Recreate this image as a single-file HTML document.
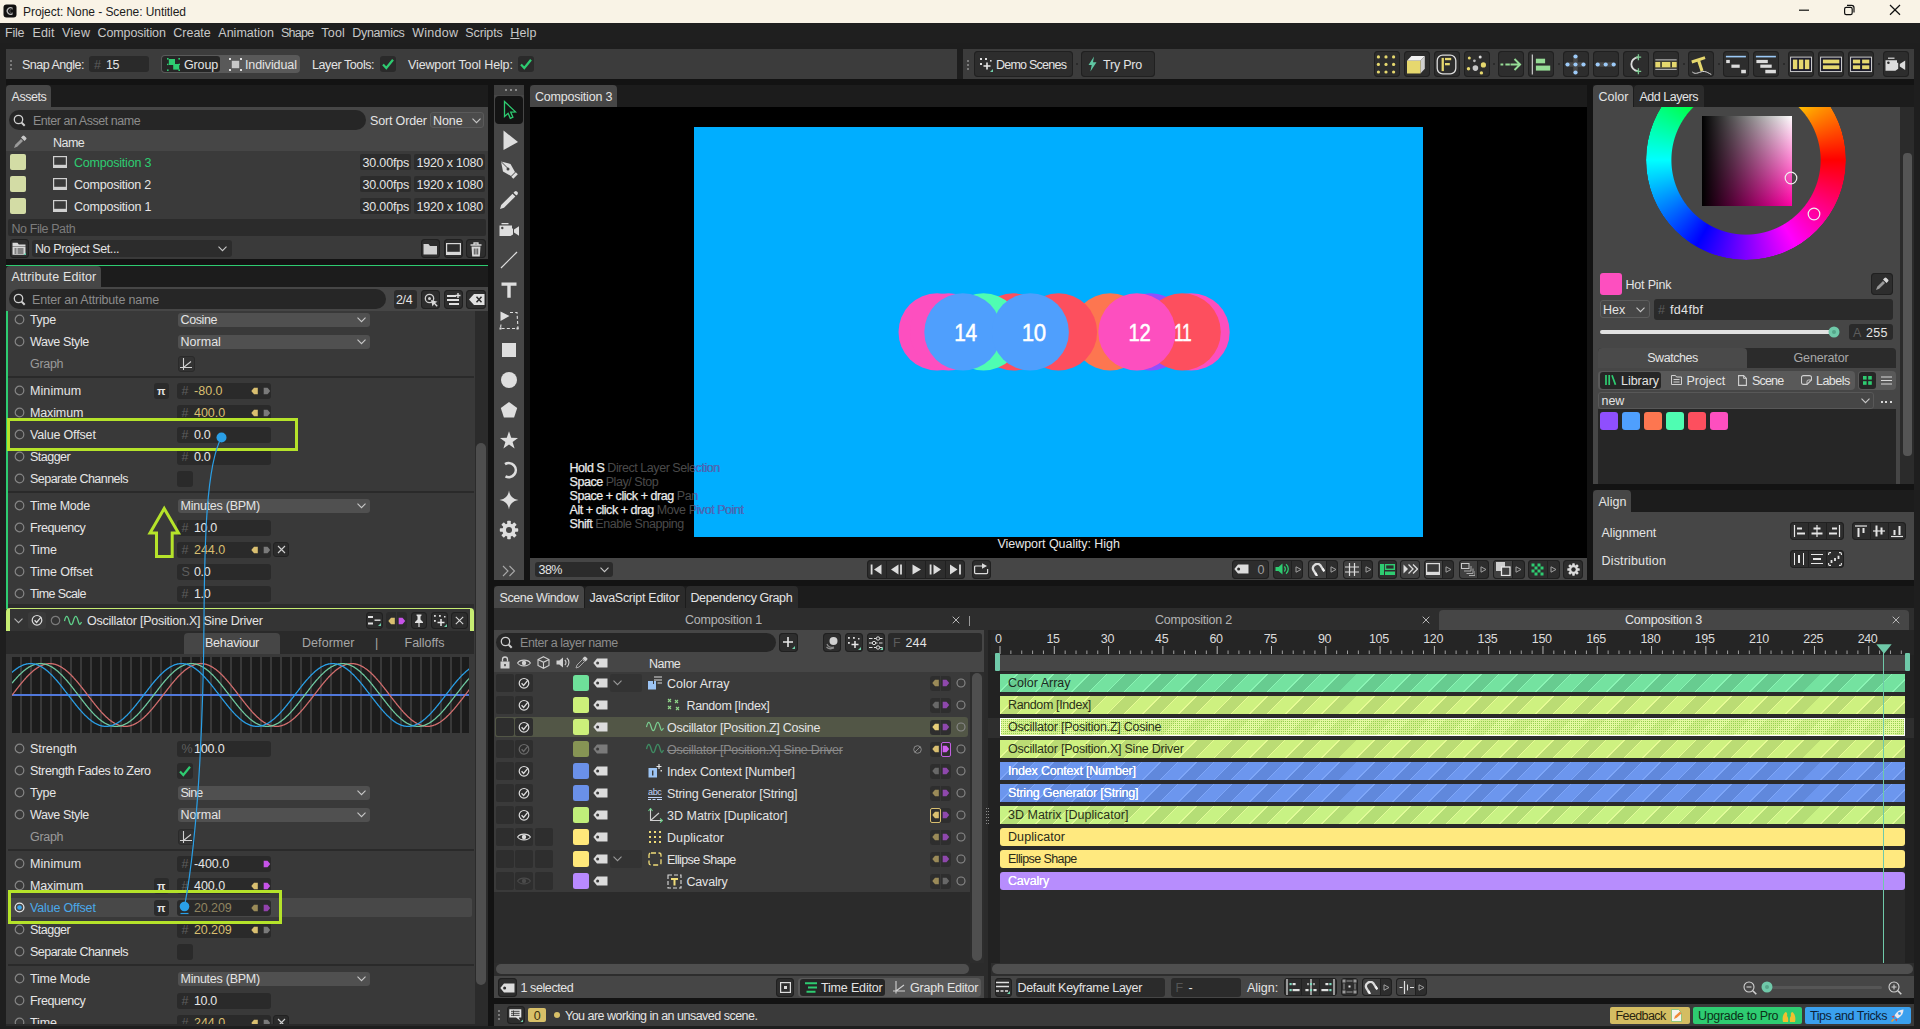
<!DOCTYPE html>
<html><head><meta charset="utf-8"><title>Cavalry</title><style>
*{box-sizing:border-box;margin:0;padding:0}
html,body{width:1920px;height:1029px;overflow:hidden}
body{background:#1e1e1e;position:relative;font-family:"Liberation Sans",sans-serif;font-size:12.5px;letter-spacing:-0.35px;color:#e4e4e4}
div,svg{position:absolute}
.t{white-space:nowrap;line-height:16px;height:16px}
.btn{background:#2d2d2d;border-radius:4px;box-shadow:inset 0 0 0 1px #202020}
</style></head><body>
<div style="left:6px;top:79px;width:1908px;height:947px;background:#131313;"></div>
<div style="left:6px;top:85px;width:482px;height:22px;background:#1c1c1c;"></div>
<div style="left:6px;top:266px;width:482px;height:21px;background:#1c1c1c;"></div>
<div style="left:530px;top:85px;width:1057px;height:22px;background:#1c1c1c;"></div>
<div style="left:1593px;top:85px;width:321px;height:22px;background:#1c1c1c;"></div>
<div style="left:1593px;top:490px;width:321px;height:22px;background:#1c1c1c;"></div>
<div style="left:494px;top:586px;width:1420px;height:22px;background:#1c1c1c;"></div>
<div style="left:0px;top:0px;width:1920px;height:23px;background:#f9f3e6;"></div>
<svg style="left:3px;top:4px;" width="14" height="14" viewBox="0 0 14 14"><rect x="0.5" y="0.5" width="13" height="13" rx="3" fill="#111"/><path d="M9.6 4.6 A3.2 3.2 0 1 0 9.6 9.4" fill="none" stroke="#bbb" stroke-width="1.3"/><path d="M10 5.4 A2 2 0 1 0 10 8.6" fill="none" stroke="#666" stroke-width="0.8"/></svg>
<div class="t" style="left:23px;top:4px;color:#1b1b1b;font-size:12px;letter-spacing:-0.06px;">Project: None - Scene: Untitled</div>
<svg style="left:1795px;top:0px;" width="110" height="23" viewBox="0 0 110 23"><path d="M4 10.2h10" stroke="#111" stroke-width="1.2"/><rect x="49.6" y="7.4" width="7.6" height="7.2" rx="1.6" fill="none" stroke="#111" stroke-width="1.2"/><path d="M52 5.4h4.6a2.4 2.4 0 0 1 2.4 2.4v4.6" fill="none" stroke="#111" stroke-width="1.2"/><path d="M95 5l10 9.8M105 5l-10 9.8" stroke="#111" stroke-width="1.2"/></svg>
<div style="left:0px;top:23px;width:1920px;height:20px;background:#1f1f1f;"></div>
<div class="t" style="left:5px;top:25px;color:#c8c8c8;font-size:12.5px;letter-spacing:-0.22px;">File</div>
<div class="t" style="left:32.5px;top:25px;color:#c8c8c8;font-size:12.5px;letter-spacing:0.15px;">Edit</div>
<div class="t" style="left:62px;top:25px;color:#c8c8c8;font-size:12.5px;letter-spacing:0.35px;">View</div>
<div class="t" style="left:97.5px;top:25px;color:#c8c8c8;font-size:12.5px;letter-spacing:-0.11px;">Composition</div>
<div class="t" style="left:173.3px;top:25px;color:#c8c8c8;font-size:12.5px;letter-spacing:-0.01px;">Create</div>
<div class="t" style="left:218.3px;top:25px;color:#c8c8c8;font-size:12.5px;letter-spacing:0.01px;">Animation</div>
<div class="t" style="left:281px;top:25px;color:#c8c8c8;font-size:12.5px;letter-spacing:-0.74px;">Shape</div>
<div class="t" style="left:321.3px;top:25px;color:#c8c8c8;font-size:12.5px;letter-spacing:0.22px;">Tool</div>
<div class="t" style="left:352.3px;top:25px;color:#c8c8c8;font-size:12.5px;letter-spacing:-0.34px;">Dynamics</div>
<div class="t" style="left:412.3px;top:25px;color:#c8c8c8;font-size:12.5px;letter-spacing:0.23px;">Window</div>
<div class="t" style="left:465.3px;top:25px;color:#c8c8c8;font-size:12.5px;letter-spacing:-0.12px;">Scripts</div>
<div class="t" style="left:510.3px;top:25px;color:#c8c8c8;font-size:12.5px;letter-spacing:0.16px;"><u>H</u>elp</div>
<div style="left:6px;top:49px;width:951px;height:30px;background:#3c3c3c;"></div>
<div style="left:963px;top:49px;width:951px;height:30px;background:#3c3c3c;"></div>
<div style="left:10px;top:59.5px;width:2px;height:2px;background:#7a7a7a;"></div>
<div style="left:10px;top:63.5px;width:2px;height:2px;background:#7a7a7a;"></div>
<div style="left:10px;top:67.5px;width:2px;height:2px;background:#7a7a7a;"></div>
<div style="left:967px;top:59.5px;width:2px;height:2px;background:#7a7a7a;"></div>
<div style="left:967px;top:63.5px;width:2px;height:2px;background:#7a7a7a;"></div>
<div style="left:967px;top:67.5px;width:2px;height:2px;background:#7a7a7a;"></div>
<div class="t" style="left:22px;top:57px;letter-spacing:-0.49px;">Snap Angle:</div>
<div style="left:89px;top:56px;width:60px;height:16px;background:#2a2a2a;border-radius:3px;"></div>
<div class="t" style="left:94px;top:57px;color:#5c5c5c;">#</div>
<div class="t" style="left:106px;top:57px;">15</div>
<div style="left:161px;top:55px;width:139px;height:18px;background:#595959;border-radius:4px;"></div>
<div style="left:162px;top:56px;width:58px;height:16px;background:#262626;border-radius:3px;"></div>
<svg style="left:167px;top:57.5px;" width="13" height="13" viewBox="0 0 13 13"><rect x="1.8" y="1" width="6.2" height="6" fill="#2ecc71"/><rect x="6.2" y="6" width="6" height="5.6" fill="#2ecc71"/><g fill="#2ecc71"><rect x="0" y="0" width="1.6" height="1.6"/><rect x="11.4" y="0" width="1.6" height="1.6"/><rect x="0" y="11.4" width="1.6" height="1.6"/><rect x="11.4" y="11.4" width="1.6" height="1.6"/><rect x="0" y="5.7" width="1.4" height="1.4"/><rect x="11.6" y="5.7" width="1.4" height="1.4"/></g></svg>
<div class="t" style="left:184px;top:57px;letter-spacing:-0.14px;">Group</div>
<svg style="left:228.5px;top:57.5px;" width="13" height="13" viewBox="0 0 13 13"><rect x="2.8" y="2.8" width="7.4" height="7.4" fill="#c8c8c8"/><g fill="#e0e0e0"><rect x="0" y="0" width="2" height="2"/><rect x="11" y="0" width="2" height="2"/><rect x="0" y="11" width="2" height="2"/><rect x="11" y="11" width="2" height="2"/></g></svg>
<div class="t" style="left:245px;top:57px;letter-spacing:-0.10px;">Individual</div>
<div class="t" style="left:312px;top:57px;letter-spacing:-0.42px;">Layer Tools:</div>
<div style="left:380px;top:56px;width:16px;height:16px;background:#2a2a2a;border-radius:3px;"></div>
<svg style="left:380px;top:56px;" width="16" height="16" viewBox="0 0 16 16"><path d="M3 8.5l3.3 3.5L13 3.8" fill="none" stroke="#2ecc71" stroke-width="2.2"/></svg>
<div class="t" style="left:408px;top:57px;letter-spacing:-0.13px;">Viewport Tool Help:</div>
<div style="left:518px;top:56px;width:16px;height:16px;background:#2a2a2a;border-radius:3px;"></div>
<svg style="left:518px;top:56px;" width="16" height="16" viewBox="0 0 16 16"><path d="M3 8.5l3.3 3.5L13 3.8" fill="none" stroke="#2ecc71" stroke-width="2.2"/></svg>
<div class="btn" style="left:974px;top:51px;width:99px;height:26px;"></div>
<svg style="left:979px;top:57px;" width="15" height="15" viewBox="0 0 15 15"><g fill="#dcdcdc"><rect x="1" y="1" width="2" height="2"/><rect x="6" y="1" width="2" height="2"/><rect x="1" y="6" width="2" height="2"/><rect x="11" y="3" width="1.6" height="1.6"/></g><path d="M8 5.5v7M4.5 9h7" stroke="#e8e8e8" stroke-width="1.6"/><path d="M14 12v3h-3z" fill="#6fd0aa"/></svg>
<div class="t" style="left:996px;top:57px;letter-spacing:-0.76px;">Demo Scenes</div>
<div style="left:1076px;top:63px;width:2px;height:2px;background:#2a2a2a;"></div>
<div class="btn" style="left:1081px;top:51px;width:74px;height:26px;"></div>
<svg style="left:1087px;top:56px;" width="11" height="16" viewBox="0 0 11 16"><path d="M7 0.5L1.5 9h3.2L3.4 15.5L9.5 6.2H6z" fill="#5fc7a3"/></svg>
<div class="t" style="left:1103px;top:57px;letter-spacing:-0.22px;">Try Pro</div>
<div class="btn" style="left:1373.5px;top:51px;width:26px;height:26px;"></div>
<div class="btn" style="left:1403.5px;top:51px;width:26px;height:26px;"></div>
<div class="btn" style="left:1433.5px;top:51px;width:26px;height:26px;"></div>
<div class="btn" style="left:1463.5px;top:51px;width:26px;height:26px;"></div>
<div class="btn" style="left:1497.5px;top:51px;width:26px;height:26px;"></div>
<div class="btn" style="left:1527.5px;top:51px;width:26px;height:26px;"></div>
<div class="btn" style="left:1562.5px;top:51px;width:26px;height:26px;"></div>
<div class="btn" style="left:1592.5px;top:51px;width:26px;height:26px;"></div>
<div class="btn" style="left:1622.5px;top:51px;width:26px;height:26px;"></div>
<div class="btn" style="left:1652.5px;top:51px;width:26px;height:26px;"></div>
<div class="btn" style="left:1687.5px;top:51px;width:26px;height:26px;"></div>
<div class="btn" style="left:1722.5px;top:51px;width:26px;height:26px;"></div>
<div class="btn" style="left:1752.5px;top:51px;width:26px;height:26px;"></div>
<div class="btn" style="left:1787.5px;top:51px;width:26px;height:26px;"></div>
<div class="btn" style="left:1817.5px;top:51px;width:26px;height:26px;"></div>
<div class="btn" style="left:1847.5px;top:51px;width:26px;height:26px;"></div>
<div class="btn" style="left:1882.5px;top:51px;width:26px;height:26px;"></div>
<div style="left:1492.5px;top:63px;width:2px;height:2px;background:#2a2a2a;"></div>
<div style="left:1557.5px;top:63px;width:2px;height:2px;background:#2a2a2a;"></div>
<div style="left:1682.5px;top:63px;width:2px;height:2px;background:#2a2a2a;"></div>
<div style="left:1717.5px;top:63px;width:2px;height:2px;background:#2a2a2a;"></div>
<div style="left:1782.5px;top:63px;width:2px;height:2px;background:#2a2a2a;"></div>
<div style="left:1877.5px;top:63px;width:2px;height:2px;background:#2a2a2a;"></div>
<svg style="left:1373px;top:50.5px;" width="27" height="27" viewBox="0 0 27 27"><circle cx="5.4" cy="5.9" r="1.6" fill="#e6d86e"/><circle cx="5.4" cy="13.4" r="1.6" fill="#e6d86e"/><circle cx="5.4" cy="21.0" r="1.6" fill="#e6d86e"/><circle cx="13.0" cy="5.9" r="1.6" fill="#e6d86e"/><circle cx="13.0" cy="13.4" r="1.6" fill="#e6d86e"/><circle cx="13.0" cy="21.0" r="1.6" fill="#e6d86e"/><circle cx="20.6" cy="5.9" r="1.6" fill="#e6d86e"/><circle cx="20.6" cy="13.4" r="1.6" fill="#e6d86e"/><circle cx="20.6" cy="21.0" r="1.6" fill="#e6d86e"/></svg>
<svg style="left:1403px;top:50.5px;" width="27" height="27" viewBox="0 0 27 27"><path d="M4 9.8L8.4 5h13.4L17.4 9.8z" fill="#f2f2f2"/><path d="M17.4 9.8L21.8 5v12.7l-4.4 4.8z" fill="#cfcfcf"/><rect x="4" y="9.8" width="13.4" height="12.7" fill="#e6d86e"/></svg>
<svg style="left:1433px;top:50.5px;" width="27" height="27" viewBox="0 0 27 27"><rect x="4.2" y="4.2" width="18.6" height="18.6" rx="5.5" fill="none" stroke="#dcdcdc" stroke-width="1.3"/><rect x="8.6" y="6.9" width="2.3" height="13.2" fill="#e6d86e"/><rect x="12" y="6.9" width="6.2" height="2.3" fill="#e6d86e"/><rect x="12" y="12" width="4.8" height="2.3" fill="#e6d86e"/></svg>
<svg style="left:1463px;top:50.5px;" width="27" height="27" viewBox="0 0 27 27"><circle cx="6.3" cy="6.9" r="1.5" fill="#e6d86e"/><circle cx="17.2" cy="5.9" r="1.5" fill="#dcdcdc"/><circle cx="11.4" cy="9.8" r="1.4" fill="#b8b8b8"/><circle cx="20.4" cy="13.9" r="2.6" fill="#e6d86e"/><circle cx="12.4" cy="17.1" r="2.8" fill="#c8c8c8"/><circle cx="5.5" cy="17.8" r="1.7" fill="#e6d86e"/><circle cx="18.4" cy="21.9" r="1.7" fill="#e6d86e"/></svg>
<svg style="left:1497px;top:50.5px;" width="27" height="27" viewBox="0 0 27 27"><path d="M3.5 13.5h2.8M8.4 13.5h4.4" stroke="#96dc96" stroke-width="1.9"/><path d="M13.5 13.5h9M17.5 8l5.6 5.5-5.6 5.5" fill="none" stroke="#96dc96" stroke-width="1.9"/></svg>
<svg style="left:1527px;top:50.5px;" width="27" height="27" viewBox="0 0 27 27"><path d="M5.3 3.5v20" stroke="#dcdcdc" stroke-width="1.1"/><rect x="8.9" y="7.7" width="9.2" height="4.6" fill="#96dc96"/><rect x="8.9" y="14.6" width="14.3" height="5" fill="#96dc96"/></svg>
<svg style="left:1562px;top:50.5px;" width="27" height="27" viewBox="0 0 27 27"><rect x="3.7" y="11.3" width="19.7" height="4.4" rx="2.2" fill="#4a4a4a"/><rect x="11.3" y="3.5" width="4.4" height="20" rx="2.2" fill="#4a4a4a"/><circle cx="13.5" cy="5.5" r="2.1" fill="#9ccaf8"/><circle cx="5.5" cy="13.5" r="2.1" fill="#9ccaf8"/><circle cx="13.5" cy="13.5" r="2.1" fill="#9ccaf8"/><circle cx="21.5" cy="13.5" r="2.1" fill="#9ccaf8"/><circle cx="13.5" cy="21.5" r="2.1" fill="#9ccaf8"/></svg>
<svg style="left:1592px;top:50.5px;" width="27" height="27" viewBox="0 0 27 27"><rect x="3.5" y="11.3" width="20" height="4.4" rx="2.2" fill="#4a4a4a"/><circle cx="5.7" cy="13.5" r="2.1" fill="#9ccaf8"/><circle cx="13.7" cy="13.5" r="2.1" fill="#9ccaf8"/><circle cx="21.7" cy="13.5" r="2.1" fill="#9ccaf8"/></svg>
<svg style="left:1622px;top:50.5px;" width="27" height="27" viewBox="0 0 27 27"><path d="M16.4 6.2C7 8 7 18.5 16.4 20.3" fill="none" stroke="#dcdcdc" stroke-width="1.8"/><path d="M16.4 3.2v6M13.8 6.2h5.4M16.4 17.3v6M13.8 20.3h5.4" stroke="#7cc890" stroke-width="1.3"/></svg>
<svg style="left:1652px;top:50.5px;" width="27" height="27" viewBox="0 0 27 27"><path d="M3.3 8.9h21.4M3.3 18.3h21.4" stroke="#dcdcdc" stroke-width="0.9"/><rect x="3.3" y="10.9" width="21.4" height="5.5" fill="#e6d86e"/><rect x="8.3" y="10.9" width="1.5" height="5.5" fill="#2b2b2b"/><rect x="18.4" y="10.9" width="1.5" height="5.5" fill="#2b2b2b"/></svg>
<svg style="left:1687px;top:50.5px;" width="27" height="27" viewBox="0 0 27 27"><path d="M4.3 9.6L17.6 5.2l.9 2.9-5.2 1.7 3.2 9.6-2.9 1-3.2-9.6-5.2 1.7z" fill="#e6d86e"/><path d="M5.3 21c4 3.5 7.5-1 12-.5 3 .4 4 1.5 7 3" fill="none" stroke="#dcdcdc" stroke-width="1"/></svg>
<svg style="left:1722px;top:50.5px;" width="27" height="27" viewBox="0 0 27 27"><path d="M3.9 5.6h20" stroke="#9ccaf8" stroke-width="1.6"/><rect x="4.2" y="8.9" width="3.6" height="3.2" fill="#dcdcdc"/><rect x="9.4" y="13.6" width="8.3" height="3.2" fill="#dcdcdc"/><rect x="19.2" y="18.8" width="4.7" height="3.5" fill="#dcdcdc"/></svg>
<svg style="left:1752px;top:50.5px;" width="27" height="27" viewBox="0 0 27 27"><path d="M3.9 5.6h20" stroke="#9ccaf8" stroke-width="1.6"/><rect x="4.4" y="8.9" width="11.4" height="3.2" fill="#dcdcdc"/><rect x="8.3" y="13.6" width="11.4" height="3.2" fill="#dcdcdc"/><rect x="13.3" y="18.8" width="10.6" height="3.5" fill="#dcdcdc"/></svg>
<svg style="left:1787px;top:50.5px;" width="27" height="27" viewBox="0 0 27 27"><rect x="3.6" y="6.1" width="20.9" height="14.5" fill="#1c1c2c" stroke="#dcdcdc" stroke-width="0.9"/><rect x="5.9" y="8.6" width="4.4" height="9.5" fill="#e6d86e"/><rect x="11.9" y="8.6" width="4.4" height="9.5" fill="#e6d86e"/><rect x="17.9" y="8.6" width="4.4" height="9.5" fill="#e6d86e"/></svg>
<svg style="left:1817px;top:50.5px;" width="27" height="27" viewBox="0 0 27 27"><rect x="3.6" y="6.1" width="20.9" height="14.5" fill="#1c1c2c" stroke="#dcdcdc" stroke-width="0.9"/><rect x="5.9" y="8.6" width="16.4" height="3.8" fill="#e6d86e"/><rect x="5.9" y="14.3" width="16.4" height="3.8" fill="#e6d86e"/></svg>
<svg style="left:1847px;top:50.5px;" width="27" height="27" viewBox="0 0 27 27"><rect x="3.6" y="6.1" width="20.9" height="14.5" fill="#1c1c2c" stroke="#dcdcdc" stroke-width="0.9"/><rect x="5.9" y="8.6" width="7.2" height="3.8" fill="#e6d86e"/><rect x="15.1" y="8.6" width="7.2" height="3.8" fill="#e6d86e"/><rect x="5.9" y="14.3" width="7.2" height="3.8" fill="#e6d86e"/><rect x="15.1" y="14.3" width="7.2" height="3.8" fill="#e6d86e"/></svg>
<svg style="left:1882px;top:50.5px;" width="27" height="27" viewBox="0 0 27 27"><path d="M3.5 9.2h11.5v2.6h1.2v6l-2.8 2H3.5z" fill="#dcdcdc"/><rect x="6" y="6.6" width="6.5" height="1.2" fill="#dcdcdc"/><path d="M17.8 13l5.4-3.4v9.4l-5.4-3.4z" fill="#dcdcdc"/><circle cx="6.4" cy="11.8" r="1.3" fill="#2b2b2b"/></svg>
<div style="left:6px;top:85px;width:45px;height:22px;background:#464646;border-radius:4px 4px 0 0;"></div>
<div class="t" style="left:11.5px;top:89px;letter-spacing:-0.44px;">Assets</div>
<div style="left:6px;top:107px;width:482px;height:44px;background:#464646;"></div>
<div style="left:9px;top:110px;width:357px;height:20px;background:#262626;border-radius:10px;"></div>
<svg style="left:13px;top:114px;" width="13" height="13" viewBox="0 0 13 13"><circle cx="5.5" cy="5.5" r="4.2" fill="none" stroke="#d0d0d0" stroke-width="1.3"/><path d="M8.7 8.7l3 3" stroke="#d0d0d0" stroke-width="2"/></svg>
<div class="t" style="left:33px;top:113px;color:#8c8c8c;letter-spacing:-0.47px;">Enter an Asset name</div>
<div class="t" style="left:370px;top:113px;letter-spacing:-0.16px;">Sort Order</div>
<div style="left:430px;top:112px;width:54px;height:16px;background:#4b4b4b;border-radius:3px;border:1px solid #5a5a5a;"></div>
<div class="t" style="left:433px;top:113px;letter-spacing:-0.06px;">None</div>
<svg style="left:471.5px;top:117.5px;" width="9" height="6" viewBox="0 0 9 6"><path d="M0.5 0.7l4 4 4-4" fill="none" stroke="#c8c8c8" stroke-width="1.1"/></svg>
<svg style="left:13px;top:135px;" width="14" height="14" viewBox="0 0 14 14"><path d="M1 13l1.2-3.2 5.8-5.8 2 2-5.8 5.8z" fill="#9a9a9a"/><path d="M8 2.5l1.5-1.5a1.4 1.4 0 0 1 2 0l1.5 1.5a1.4 1.4 0 0 1 0 2L11.5 6z" fill="#c8c8c8"/></svg>
<div class="t" style="left:53px;top:135px;letter-spacing:-0.55px;">Name</div>
<div style="left:6px;top:151px;width:482px;height:66px;background:#3a3a3a;"></div>
<div style="left:10px;top:154px;width:16px;height:16px;background:#d3dca5;border-radius:2px;"></div>
<svg style="left:53px;top:156px;" width="14" height="12" viewBox="0 0 14 12"><rect x="0.6" y="0.6" width="12.8" height="8.8" fill="none" stroke="#d0d0d0" stroke-width="1.2"/><rect x="0" y="10" width="14" height="2" fill="#d0d0d0"/></svg>
<div class="t" style="left:74px;top:155px;color:#2ecc71;letter-spacing:-0.21px;">Composition 3</div>
<div style="left:360px;top:154px;width:51px;height:16px;background:#2c2c2c;border-radius:2px;"></div>
<div class="t" style="left:362.5px;top:155px;letter-spacing:-0.17px;">30.00fps</div>
<div style="left:414px;top:154px;width:71px;height:16px;background:#2c2c2c;border-radius:2px;"></div>
<div class="t" style="left:416.5px;top:155px;letter-spacing:-0.22px;">1920 x 1080</div>
<div style="left:10px;top:176px;width:16px;height:16px;background:#d3dca5;border-radius:2px;"></div>
<svg style="left:53px;top:178px;" width="14" height="12" viewBox="0 0 14 12"><rect x="0.6" y="0.6" width="12.8" height="8.8" fill="none" stroke="#d0d0d0" stroke-width="1.2"/><rect x="0" y="10" width="14" height="2" fill="#d0d0d0"/></svg>
<div class="t" style="left:74px;top:177px;color:#e6e6e6;letter-spacing:-0.23px;">Composition 2</div>
<div style="left:360px;top:176px;width:51px;height:16px;background:#2c2c2c;border-radius:2px;"></div>
<div class="t" style="left:362.5px;top:177px;letter-spacing:-0.17px;">30.00fps</div>
<div style="left:414px;top:176px;width:71px;height:16px;background:#2c2c2c;border-radius:2px;"></div>
<div class="t" style="left:416.5px;top:177px;letter-spacing:-0.22px;">1920 x 1080</div>
<div style="left:10px;top:198px;width:16px;height:16px;background:#d3dca5;border-radius:2px;"></div>
<svg style="left:53px;top:200px;" width="14" height="12" viewBox="0 0 14 12"><rect x="0.6" y="0.6" width="12.8" height="8.8" fill="none" stroke="#d0d0d0" stroke-width="1.2"/><rect x="0" y="10" width="14" height="2" fill="#d0d0d0"/></svg>
<div class="t" style="left:74px;top:199px;color:#e6e6e6;letter-spacing:-0.21px;">Composition 1</div>
<div style="left:360px;top:198px;width:51px;height:16px;background:#2c2c2c;border-radius:2px;"></div>
<div class="t" style="left:362.5px;top:199px;letter-spacing:-0.17px;">30.00fps</div>
<div style="left:414px;top:198px;width:71px;height:16px;background:#2c2c2c;border-radius:2px;"></div>
<div class="t" style="left:416.5px;top:199px;letter-spacing:-0.22px;">1920 x 1080</div>
<div style="left:6px;top:217px;width:482px;height:42px;background:#3a3a3a;"></div>
<div style="left:8px;top:219px;width:478px;height:17px;background:#2b2b2b;border-radius:2px;"></div>
<div class="t" style="left:11.5px;top:221px;color:#7c7c7c;letter-spacing:-0.42px;">No File Path</div>
<div class="btn" style="left:9.5px;top:239px;width:19px;height:19px;"></div>
<svg style="left:12px;top:242px;" width="14" height="13" viewBox="0 0 14 13"><path d="M0.5 0.8h5l1.3 1.6h6.7v2H0.5z" fill="#d8d8d8"/><rect x="0.5" y="4.8" width="13" height="8" fill="#d8d8d8"/><path d="M2.5 7h2M5.5 7h6M2.5 9h2M5.5 9h6M2.5 11h2M5.5 11h6" stroke="#2d2d2d" stroke-width="1"/><path d="M14 10.5v2.5h-2.5z" fill="#5fc7a3"/></svg>
<div style="left:32px;top:239.5px;width:200px;height:17px;background:#2c2c2c;border-radius:3px;"></div>
<div class="t" style="left:35px;top:241px;letter-spacing:-0.41px;">No Project Set...</div>
<svg style="left:218.0px;top:245.5px;" width="9" height="6" viewBox="0 0 9 6"><path d="M0.5 0.7l4 4 4-4" fill="none" stroke="#c8c8c8" stroke-width="1.1"/></svg>
<div class="btn" style="left:420.5px;top:239px;width:19.5px;height:19px;"></div>
<div class="btn" style="left:443.5px;top:239px;width:19.5px;height:19px;"></div>
<div class="btn" style="left:466px;top:239px;width:19.5px;height:19px;"></div>
<svg style="left:423px;top:242px;" width="15" height="13" viewBox="0 0 15 13"><path d="M0.5 2h5l1.5 2h7v8.5h-13.5z" fill="#d0d0d0"/></svg>
<svg style="left:446px;top:243px;" width="15" height="12" viewBox="0 0 15 12"><rect x="0.6" y="0.6" width="13.8" height="8.8" fill="none" stroke="#d8d8d8" stroke-width="1.2"/><rect x="0" y="10" width="15" height="2" fill="#d8d8d8"/></svg>
<svg style="left:470px;top:241.5px;" width="12" height="15" viewBox="0 0 12 15"><path d="M0.5 3h11M4 3V1h4v2" fill="none" stroke="#d8d8d8" stroke-width="1.3"/><path d="M1.5 4.5h9l-.7 10h-7.6z" fill="#d8d8d8"/><path d="M4.3 6.5v6M6 6.5v6M7.7 6.5v6" stroke="#2b2b2b" stroke-width="0.8"/></svg>
<div style="left:6px;top:265px;width:482px;height:1px;background:#2ecc71;"></div>
<div style="left:6px;top:266px;width:95px;height:21px;background:#464646;border-radius:4px 4px 0 0;"></div>
<div class="t" style="left:11.5px;top:269px;letter-spacing:0.14px;">Attribute Editor</div>
<div style="left:6px;top:287px;width:482px;height:24px;background:#464646;"></div>
<div style="left:9px;top:289px;width:376.5px;height:20px;background:#262626;border-radius:10px;"></div>
<svg style="left:12.5px;top:293px;" width="13" height="13" viewBox="0 0 13 13"><circle cx="5.5" cy="5.5" r="4.2" fill="none" stroke="#d0d0d0" stroke-width="1.3"/><path d="M8.7 8.7l3 3" stroke="#d0d0d0" stroke-width="2"/></svg>
<div class="t" style="left:32px;top:292px;color:#8c8c8c;letter-spacing:-0.19px;">Enter an Attribute name</div>
<div style="left:394px;top:290px;width:23px;height:18.5px;background:#2c2c2c;border-radius:3px;"></div>
<div class="t" style="left:396px;top:292px;">2/4</div>
<div class="btn" style="left:420.5px;top:290px;width:19.5px;height:18.5px;"></div>
<div class="btn" style="left:443.5px;top:290px;width:19.5px;height:18.5px;"></div>
<div class="btn" style="left:466px;top:290px;width:19.5px;height:18.5px;"></div>
<svg style="left:423.5px;top:292.5px;" width="14" height="14" viewBox="0 0 14 14"><circle cx="5.5" cy="5.5" r="4.2" fill="none" stroke="#d0d0d0" stroke-width="1.3"/><circle cx="5.5" cy="5.5" r="1.5" fill="#d0d0d0"/><path d="M7 7l1.5 6.5 1.6-2.4 2.6 2.6 1-1-2.6-2.6 2.4-1.4z" fill="#d8d8d8"/></svg>
<svg style="left:446.5px;top:293px;" width="14" height="13" viewBox="0 0 14 13"><path d="M0 3h9M0 7h12M2 11h10" stroke="#e0e0e0" stroke-width="1.8"/><path d="M11 0v5M8.5 2.5h5" stroke="#e0e0e0" stroke-width="1.4"/></svg>
<svg style="left:468.5px;top:294px;" width="16" height="11" viewBox="0 0 16 11"><path d="M5 0h10.5v11H5L0 5.5z" fill="#e0e0e0"/><path d="M7.5 2.8l5 5.4M12.5 2.8l-5 5.4" stroke="#2b2b2b" stroke-width="1.5"/></svg>
<div style="left:6px;top:311px;width:469px;height:713px;background:#393939;"></div>
<div style="left:475px;top:311px;width:13px;height:713px;background:#2b2b2b;"></div>
<div style="left:476px;top:443px;width:10px;height:542px;background:#4e4e4e;border-radius:5px;"></div>
<div style="left:6px;top:311px;width:1.5px;height:298px;background:#2ecc71;"></div>
<svg style="left:13.5px;top:314.0px;" width="11" height="11" viewBox="0 0 11 11"><circle cx="5.5" cy="5.5" r="4.3" fill="none" stroke="#858585" stroke-width="1.2"/></svg>
<div class="t" style="left:30px;top:312px;color:#e6e6e6;letter-spacing:-0.34px;">Type</div>
<div style="left:178px;top:312.5px;width:192px;height:14px;background:#505050;border-radius:3px;"></div>
<div class="t" style="left:180.5px;top:312px;letter-spacing:-0.38px;">Cosine</div>
<svg style="left:357.0px;top:316.5px;" width="9" height="6" viewBox="0 0 9 6"><path d="M0.5 0.7l4 4 4-4" fill="none" stroke="#c8c8c8" stroke-width="1.1"/></svg>
<svg style="left:13.5px;top:336.0px;" width="11" height="11" viewBox="0 0 11 11"><circle cx="5.5" cy="5.5" r="4.3" fill="none" stroke="#858585" stroke-width="1.2"/></svg>
<div class="t" style="left:30px;top:334px;color:#e6e6e6;letter-spacing:-0.39px;">Wave Style</div>
<div style="left:178px;top:334.5px;width:192px;height:14px;background:#505050;border-radius:3px;"></div>
<div class="t" style="left:180.5px;top:334px;letter-spacing:0.02px;">Normal</div>
<svg style="left:357.0px;top:338.5px;" width="9" height="6" viewBox="0 0 9 6"><path d="M0.5 0.7l4 4 4-4" fill="none" stroke="#c8c8c8" stroke-width="1.1"/></svg>
<div class="t" style="left:30px;top:356px;color:#9a9a9a;letter-spacing:-0.31px;">Graph</div>
<div style="left:178px;top:355.5px;width:16.5px;height:16.5px;background:#333;border-radius:3px;border:1px solid #2a2a2a;"></div>
<svg style="left:180px;top:357.5px;" width="13" height="13" viewBox="0 0 13 13"><path d="M3.5 0v12M0 9.5h12M3.5 9.5L11 3.5" fill="none" stroke="#d0d0d0" stroke-width="1.1"/></svg>
<div style="left:8px;top:375.5px;width:466px;height:2px;background:#2a2a2a;"></div>
<svg style="left:13.5px;top:385.0px;" width="11" height="11" viewBox="0 0 11 11"><circle cx="5.5" cy="5.5" r="4.3" fill="none" stroke="#858585" stroke-width="1.2"/></svg>
<div class="t" style="left:30px;top:383px;color:#e6e6e6;letter-spacing:0.08px;">Minimum</div>
<div style="left:153.5px;top:382.5px;width:15.5px;height:16px;background:#2b2b2b;border-radius:3px;"></div>
<div class="t" style="left:157px;top:383px;color:#e6e6e6;font-size:11px;font-weight:bold;">π</div>
<div style="left:177px;top:382.5px;width:94px;height:16px;background:#2a2a2a;border-radius:3px;"></div>
<div class="t" style="left:181.5px;top:383px;color:#5e5e5e;">#</div>
<div class="t" style="left:194px;top:383px;color:#d9bf70;letter-spacing:0.02px;">-80.0</div>
<svg style="left:250.5px;top:386.5px;" width="8" height="8" viewBox="0 0 8 8"><path d="M0.3 4L3 0.8H6.8v6.4H3z" fill="#d9bf70"/></svg>
<svg style="left:262.5px;top:386.5px;" width="8" height="8" viewBox="0 0 8 8"><path d="M7.2 4L4.5 0.8H0.7v6.4H4.5z" fill="#7a7a7a"/></svg>
<svg style="left:13.5px;top:407.0px;" width="11" height="11" viewBox="0 0 11 11"><circle cx="5.5" cy="5.5" r="4.3" fill="none" stroke="#858585" stroke-width="1.2"/></svg>
<div class="t" style="left:30px;top:405px;color:#e6e6e6;letter-spacing:-0.13px;">Maximum</div>
<div style="left:177px;top:404.5px;width:94px;height:16px;background:#2a2a2a;border-radius:3px;"></div>
<div class="t" style="left:181.5px;top:405px;color:#5e5e5e;">#</div>
<div class="t" style="left:194px;top:405px;color:#d9bf70;letter-spacing:-0.05px;">400.0</div>
<svg style="left:250.5px;top:408.5px;" width="8" height="8" viewBox="0 0 8 8"><path d="M0.3 4L3 0.8H6.8v6.4H3z" fill="#d9bf70"/></svg>
<svg style="left:262.5px;top:408.5px;" width="8" height="8" viewBox="0 0 8 8"><path d="M7.2 4L4.5 0.8H0.7v6.4H4.5z" fill="#7a7a7a"/></svg>
<svg style="left:13.5px;top:429.0px;" width="11" height="11" viewBox="0 0 11 11"><circle cx="5.5" cy="5.5" r="4.3" fill="none" stroke="#858585" stroke-width="1.2"/></svg>
<div class="t" style="left:30px;top:427px;color:#e6e6e6;letter-spacing:-0.16px;">Value Offset</div>
<div style="left:177px;top:426.5px;width:94px;height:16px;background:#2a2a2a;border-radius:3px;"></div>
<div class="t" style="left:181.5px;top:427px;color:#5e5e5e;">#</div>
<div class="t" style="left:194px;top:427px;color:#e6e6e6;">0.0</div>
<svg style="left:13.5px;top:451.0px;" width="11" height="11" viewBox="0 0 11 11"><circle cx="5.5" cy="5.5" r="4.3" fill="none" stroke="#858585" stroke-width="1.2"/></svg>
<div class="t" style="left:30px;top:449px;color:#e6e6e6;letter-spacing:-0.51px;">Stagger</div>
<div style="left:177px;top:448.5px;width:94px;height:16px;background:#2a2a2a;border-radius:3px;"></div>
<div class="t" style="left:181.5px;top:449px;color:#5e5e5e;">#</div>
<div class="t" style="left:194px;top:449px;color:#e6e6e6;">0.0</div>
<svg style="left:13.5px;top:473.0px;" width="11" height="11" viewBox="0 0 11 11"><circle cx="5.5" cy="5.5" r="4.3" fill="none" stroke="#858585" stroke-width="1.2"/></svg>
<div class="t" style="left:30px;top:471px;color:#e6e6e6;letter-spacing:-0.53px;">Separate Channels</div>
<div style="left:177px;top:470.5px;width:16px;height:16px;background:#2a2a2a;border-radius:3px;"></div>
<div style="left:8px;top:490.5px;width:466px;height:2px;background:#2a2a2a;"></div>
<svg style="left:13.5px;top:500.0px;" width="11" height="11" viewBox="0 0 11 11"><circle cx="5.5" cy="5.5" r="4.3" fill="none" stroke="#858585" stroke-width="1.2"/></svg>
<div class="t" style="left:30px;top:498px;color:#e6e6e6;letter-spacing:-0.23px;">Time Mode</div>
<div style="left:178px;top:498.5px;width:192px;height:14px;background:#505050;border-radius:3px;"></div>
<div class="t" style="left:180.5px;top:498px;letter-spacing:-0.25px;">Minutes (BPM)</div>
<svg style="left:357.0px;top:502.5px;" width="9" height="6" viewBox="0 0 9 6"><path d="M0.5 0.7l4 4 4-4" fill="none" stroke="#c8c8c8" stroke-width="1.1"/></svg>
<svg style="left:13.5px;top:522.0px;" width="11" height="11" viewBox="0 0 11 11"><circle cx="5.5" cy="5.5" r="4.3" fill="none" stroke="#858585" stroke-width="1.2"/></svg>
<div class="t" style="left:30px;top:520px;color:#e6e6e6;letter-spacing:-0.40px;">Frequency</div>
<div style="left:177px;top:519.5px;width:94px;height:16px;background:#2a2a2a;border-radius:3px;"></div>
<div class="t" style="left:181.5px;top:520px;color:#5e5e5e;">#</div>
<div class="t" style="left:194px;top:520px;color:#e6e6e6;">10.0</div>
<svg style="left:13.5px;top:544.0px;" width="11" height="11" viewBox="0 0 11 11"><circle cx="5.5" cy="5.5" r="4.3" fill="none" stroke="#858585" stroke-width="1.2"/></svg>
<div class="t" style="left:30px;top:542px;color:#e6e6e6;letter-spacing:-0.11px;">Time</div>
<div style="left:177px;top:541.5px;width:94px;height:16px;background:#2a2a2a;border-radius:3px;"></div>
<div class="t" style="left:181.5px;top:542px;color:#5e5e5e;">#</div>
<div class="t" style="left:194px;top:542px;color:#d9bf70;letter-spacing:-0.05px;">244.0</div>
<svg style="left:250.5px;top:545.5px;" width="8" height="8" viewBox="0 0 8 8"><path d="M0.3 4L3 0.8H6.8v6.4H3z" fill="#d9bf70"/></svg>
<svg style="left:262.5px;top:545.5px;" width="8" height="8" viewBox="0 0 8 8"><path d="M7.2 4L4.5 0.8H0.7v6.4H4.5z" fill="#7a7a7a"/></svg>
<div style="left:273px;top:541.5px;width:15.5px;height:15.5px;background:#2b2b2b;border-radius:3px;border:1px solid #222;"></div>
<svg style="left:276.5px;top:545.0px;" width="9" height="9" viewBox="0 0 9 9"><path d="M1 1l7 7M8 1l-7 7" stroke="#d0d0d0" stroke-width="1.1"/></svg>
<svg style="left:13.5px;top:566.0px;" width="11" height="11" viewBox="0 0 11 11"><circle cx="5.5" cy="5.5" r="4.3" fill="none" stroke="#858585" stroke-width="1.2"/></svg>
<div class="t" style="left:30px;top:564px;color:#e6e6e6;letter-spacing:-0.11px;">Time Offset</div>
<div style="left:177px;top:563.5px;width:94px;height:16px;background:#2a2a2a;border-radius:3px;"></div>
<div class="t" style="left:181.5px;top:564px;color:#5e5e5e;">S</div>
<div class="t" style="left:194px;top:564px;color:#e6e6e6;">0.0</div>
<svg style="left:13.5px;top:588.0px;" width="11" height="11" viewBox="0 0 11 11"><circle cx="5.5" cy="5.5" r="4.3" fill="none" stroke="#858585" stroke-width="1.2"/></svg>
<div class="t" style="left:30px;top:586px;color:#e6e6e6;letter-spacing:-0.62px;">Time Scale</div>
<div style="left:177px;top:585.5px;width:94px;height:16px;background:#2a2a2a;border-radius:3px;"></div>
<div class="t" style="left:181.5px;top:586px;color:#5e5e5e;">#</div>
<div class="t" style="left:194px;top:586px;color:#e6e6e6;">1.0</div>
<div style="left:8px;top:604px;width:466px;height:4px;background:#2c2c2c;"></div>
<div style="left:6px;top:607.8px;width:468px;height:23.2px;background:#343434;border-left:4px solid #c6ec72;border-right:4px solid #c6ec72;border-top:1.5px solid #c6ec72;border-radius:4px 4px 0 0;"></div>
<svg style="left:14.0px;top:617.5px;" width="9" height="6" viewBox="0 0 9 6"><path d="M0.5 0.7l4 4 4-4" fill="none" stroke="#b0b0b0" stroke-width="1.1"/></svg>
<div style="left:28px;top:612px;width:17.5px;height:16.5px;background:#3a3a3a;border-radius:3px;"></div>
<svg style="left:31px;top:614px;" width="12" height="12" viewBox="0 0 12 12"><circle cx="6" cy="6.3" r="4.8" fill="none" stroke="#dcdcdc" stroke-width="1.2"/><path d="M3.6 6.2l2 2.2 4.6-5.6" fill="none" stroke="#dcdcdc" stroke-width="1.3"/></svg>
<svg style="left:49.5px;top:615px;" width="11" height="11" viewBox="0 0 11 11"><circle cx="5.5" cy="5.5" r="4.2" fill="none" stroke="#7a7a7a" stroke-width="1.2"/></svg>
<svg style="left:64px;top:615px;" width="18" height="11" viewBox="0 0 18 11"><path d="M0.5 6C2 0 3.5 0 5 5.5S8 11 9.5 5.5 12.5 0 14 5.5 16 10 17.5 7" fill="none" stroke="#5fd08a" stroke-width="1.3"/></svg>
<div class="t" style="left:87px;top:613px;letter-spacing:-0.24px;">Oscillator [Position.X] Sine Driver</div>
<div class="btn" style="left:366px;top:612px;width:16.5px;height:16.5px;"></div>
<div class="btn" style="left:410.5px;top:612px;width:16.5px;height:16.5px;"></div>
<div class="btn" style="left:431px;top:612px;width:16.5px;height:16.5px;"></div>
<div class="btn" style="left:451px;top:612px;width:16.5px;height:16.5px;"></div>
<svg style="left:368px;top:615px;" width="13" height="11" viewBox="0 0 13 11"><path d="M0 2h5M0 8.5h5" stroke="#e0e0e0" stroke-width="1.8"/><path d="M6.5 5.2h6" stroke="#e0e0e0" stroke-width="1.4"/><path d="M13 8v3h-3z" fill="#6fd0aa"/></svg>
<div style="left:386px;top:612px;width:20.5px;height:16.5px;background:#2b2b2b;border-radius:3px;"></div>
<div style="left:396px;top:612px;width:1px;height:16.5px;background:#343434;"></div>
<svg style="left:388px;top:616.5px;" width="8" height="8" viewBox="0 0 8 8"><path d="M0.3 4L3 0.8H6.8v6.4H3z" fill="#d9bf70"/></svg>
<svg style="left:398px;top:616.5px;" width="8" height="8" viewBox="0 0 8 8"><path d="M7.2 4L4.5 0.8H0.7v6.4H4.5z" fill="#c653e8"/></svg>
<svg style="left:414px;top:614px;" width="10" height="13" viewBox="0 0 10 13"><path d="M2.5 0.5h5v1l-1 1v3l2.5 2.5v1H1v-1l2.5-2.5v-3l-1-1z" fill="#e0e0e0"/><path d="M5 9v4" stroke="#e0e0e0" stroke-width="1.2"/></svg>
<svg style="left:433px;top:614px;" width="14" height="13" viewBox="0 0 14 13"><g fill="#dcdcdc"><rect x="1" y="1" width="1.8" height="1.8"/><rect x="6" y="1" width="1.8" height="1.8"/><rect x="1" y="6" width="1.8" height="1.8"/><rect x="11" y="2" width="1.5" height="1.5"/></g><path d="M8 5v7M4.5 8.5h7" stroke="#e8e8e8" stroke-width="1.5"/><path d="M14 10v3h-3z" fill="#6fd0aa"/></svg>
<svg style="left:455px;top:616px;" width="9" height="9" viewBox="0 0 9 9"><path d="M0.8 0.8l7.4 7.4M8.2 0.8L0.8 8.2" stroke="#d8d8d8" stroke-width="1.1"/></svg>
<div style="left:6px;top:631px;width:468px;height:22.5px;background:#2a2a2a;"></div>
<div style="left:184px;top:633px;width:96px;height:20.5px;background:#464646;border-radius:4px 4px 0 0;"></div>
<div class="t" style="left:205px;top:635px;letter-spacing:-0.25px;">Behaviour</div>
<div class="t" style="left:302px;top:635px;color:#a6a6a6;letter-spacing:0.06px;">Deformer</div>
<div class="t" style="left:375px;top:635px;color:#a6a6a6;">|</div>
<div class="t" style="left:404.5px;top:635px;color:#a6a6a6;letter-spacing:-0.01px;">Falloffs</div>
<svg style="left:11.5px;top:657px;" width="457.5" height="76" viewBox="0 0 457.5 76"><rect x="0.0" y="0" width="8" height="76" fill="#1c1c1c"/><rect x="10.0" y="0" width="8" height="76" fill="#1c1c1c"/><rect x="20.0" y="0" width="8" height="76" fill="#1c1c1c"/><rect x="30.0" y="0" width="8" height="76" fill="#1c1c1c"/><rect x="40.0" y="0" width="8" height="76" fill="#1c1c1c"/><rect x="50.0" y="0" width="8" height="76" fill="#1c1c1c"/><rect x="60.0" y="0" width="8" height="76" fill="#1c1c1c"/><rect x="70.0" y="0" width="8" height="76" fill="#1c1c1c"/><rect x="80.0" y="0" width="8" height="76" fill="#1c1c1c"/><rect x="90.0" y="0" width="8" height="76" fill="#1c1c1c"/><rect x="100.0" y="0" width="8" height="76" fill="#1c1c1c"/><rect x="110.0" y="0" width="8" height="76" fill="#1c1c1c"/><rect x="120.0" y="0" width="8" height="76" fill="#1c1c1c"/><rect x="130.0" y="0" width="8" height="76" fill="#1c1c1c"/><rect x="140.0" y="0" width="8" height="76" fill="#1c1c1c"/><rect x="150.0" y="0" width="8" height="76" fill="#1c1c1c"/><rect x="160.0" y="0" width="8" height="76" fill="#1c1c1c"/><rect x="170.0" y="0" width="8" height="76" fill="#1c1c1c"/><rect x="180.0" y="0" width="8" height="76" fill="#1c1c1c"/><rect x="190.0" y="0" width="8" height="76" fill="#1c1c1c"/><rect x="200.0" y="0" width="8" height="76" fill="#1c1c1c"/><rect x="210.0" y="0" width="8" height="76" fill="#1c1c1c"/><rect x="220.0" y="0" width="8" height="76" fill="#1c1c1c"/><rect x="230.0" y="0" width="8" height="76" fill="#1c1c1c"/><rect x="240.0" y="0" width="8" height="76" fill="#1c1c1c"/><rect x="250.0" y="0" width="8" height="76" fill="#1c1c1c"/><rect x="260.0" y="0" width="8" height="76" fill="#1c1c1c"/><rect x="270.0" y="0" width="8" height="76" fill="#1c1c1c"/><rect x="280.0" y="0" width="8" height="76" fill="#1c1c1c"/><rect x="290.0" y="0" width="8" height="76" fill="#1c1c1c"/><rect x="300.0" y="0" width="8" height="76" fill="#1c1c1c"/><rect x="310.0" y="0" width="8" height="76" fill="#1c1c1c"/><rect x="320.0" y="0" width="8" height="76" fill="#1c1c1c"/><rect x="330.0" y="0" width="8" height="76" fill="#1c1c1c"/><rect x="340.0" y="0" width="8" height="76" fill="#1c1c1c"/><rect x="350.0" y="0" width="8" height="76" fill="#1c1c1c"/><rect x="360.0" y="0" width="8" height="76" fill="#1c1c1c"/><rect x="370.0" y="0" width="8" height="76" fill="#1c1c1c"/><rect x="380.0" y="0" width="8" height="76" fill="#1c1c1c"/><rect x="390.0" y="0" width="8" height="76" fill="#1c1c1c"/><rect x="400.0" y="0" width="8" height="76" fill="#1c1c1c"/><rect x="410.0" y="0" width="8" height="76" fill="#1c1c1c"/><rect x="420.0" y="0" width="8" height="76" fill="#1c1c1c"/><rect x="430.0" y="0" width="8" height="76" fill="#1c1c1c"/><rect x="440.0" y="0" width="8" height="76" fill="#1c1c1c"/><rect x="450.0" y="0" width="8" height="76" fill="#1c1c1c"/><path d="M0 38h457.5" stroke="#5078dc" stroke-width="1.9"/><polyline points="0.0,38.2 0.5,37.5 1.0,36.9 1.5,36.2 2.0,35.6 2.5,34.9 3.0,34.3 3.5,33.6 4.0,33.0 4.5,32.3 5.0,31.7 5.5,31.1 6.0,30.4 6.5,29.8 7.0,29.2 7.5,28.5 8.0,27.9 8.5,27.3 9.0,26.7 9.5,26.1 10.0,25.5 10.5,24.9 11.0,24.3 11.5,23.7 12.0,23.1 12.5,22.6 13.0,22.0 13.5,21.4 14.0,20.9 14.5,20.3 15.0,19.8 15.5,19.3 16.0,18.8 16.5,18.2 17.0,17.7 17.5,17.2 18.0,16.8 18.5,16.3 19.0,15.8 19.5,15.4 20.0,14.9 20.5,14.5 21.0,14.0 21.5,13.6 22.0,13.2 22.5,12.8 23.0,12.4 23.5,12.1 24.0,11.7 24.5,11.4 25.0,11.0 25.5,10.7 26.0,10.4 26.5,10.1 27.0,9.8 27.5,9.5 28.0,9.2 28.5,9.0 29.0,8.7 29.5,8.5 30.0,8.3 30.5,8.1 31.0,7.9 31.5,7.7 32.0,7.5 32.5,7.4 33.0,7.3 33.5,7.1 34.0,7.0 34.5,6.9 35.0,6.8 35.5,6.8 36.0,6.7 36.5,6.7 37.0,6.6 37.5,6.6 38.0,6.6 38.5,6.6 39.0,6.6 39.5,6.7 40.0,6.7 40.5,6.8 41.0,6.9 41.5,7.0 42.0,7.1 42.5,7.2 43.0,7.3 43.5,7.4 44.0,7.6 44.5,7.8 45.0,8.0 45.5,8.2 46.0,8.4 46.5,8.6 47.0,8.8 47.5,9.1 48.0,9.3 48.5,9.6 49.0,9.9 49.5,10.2 50.0,10.5 50.5,10.8 51.0,11.2 51.5,11.5 52.0,11.9 52.5,12.2 53.0,12.6 53.5,13.0 54.0,13.4 54.5,13.8 55.0,14.2 55.5,14.7 56.0,15.1 56.5,15.5 57.0,16.0 57.5,16.5 58.0,17.0 58.5,17.4 59.0,17.9 59.5,18.5 60.0,19.0 60.5,19.5 61.0,20.0 61.5,20.6 62.0,21.1 62.5,21.7 63.0,22.2 63.5,22.8 64.0,23.4 64.5,23.9 65.0,24.5 65.5,25.1 66.0,25.7 66.5,26.3 67.0,26.9 67.5,27.6 68.0,28.2 68.5,28.8 69.0,29.4 69.5,30.1 70.0,30.7 70.5,31.3 71.0,32.0 71.5,32.6 72.0,33.2 72.5,33.9 73.0,34.5 73.5,35.2 74.0,35.8 74.5,36.5 75.0,37.2 75.5,37.8 76.0,38.5 76.5,39.1 77.0,39.8 77.5,40.4 78.0,41.1 78.5,41.7 79.0,42.4 79.5,43.0 80.0,43.7 80.5,44.3 81.0,44.9 81.5,45.6 82.0,46.2 82.5,46.8 83.0,47.5 83.5,48.1 84.0,48.7 84.5,49.3 85.0,49.9 85.5,50.5 86.0,51.1 86.5,51.7 87.0,52.3 87.5,52.9 88.0,53.4 88.5,54.0 89.0,54.6 89.5,55.1 90.0,55.7 90.5,56.2 91.0,56.7 91.5,57.2 92.0,57.8 92.5,58.3 93.0,58.8 93.5,59.2 94.0,59.7 94.5,60.2 95.0,60.6 95.5,61.1 96.0,61.5 96.5,62.0 97.0,62.4 97.5,62.8 98.0,63.2 98.5,63.6 99.0,63.9 99.5,64.3 100.0,64.6 100.5,65.0 101.0,65.3 101.5,65.6 102.0,65.9 102.5,66.2 103.0,66.5 103.5,66.8 104.0,67.0 104.5,67.3 105.0,67.5 105.5,67.7 106.0,67.9 106.5,68.1 107.0,68.3 107.5,68.5 108.0,68.6 108.5,68.7 109.0,68.9 109.5,69.0 110.0,69.1 110.5,69.2 111.0,69.2 111.5,69.3 112.0,69.3 112.5,69.4 113.0,69.4 113.5,69.4 114.0,69.4 114.5,69.4 115.0,69.3 115.5,69.3 116.0,69.2 116.5,69.1 117.0,69.0 117.5,68.9 118.0,68.8 118.5,68.7 119.0,68.6 119.5,68.4 120.0,68.2 120.5,68.0 121.0,67.8 121.5,67.6 122.0,67.4 122.5,67.2 123.0,66.9 123.5,66.7 124.0,66.4 124.5,66.1 125.0,65.8 125.5,65.5 126.0,65.2 126.5,64.8 127.0,64.5 127.5,64.1 128.0,63.8 128.5,63.4 129.0,63.0 129.5,62.6 130.0,62.2 130.5,61.8 131.0,61.3 131.5,60.9 132.0,60.5 132.5,60.0 133.0,59.5 133.5,59.0 134.0,58.6 134.5,58.1 135.0,57.5 135.5,57.0 136.0,56.5 136.5,56.0 137.0,55.4 137.5,54.9 138.0,54.3 138.5,53.8 139.0,53.2 139.5,52.6 140.0,52.1 140.5,51.5 141.0,50.9 141.5,50.3 142.0,49.7 142.5,49.1 143.0,48.4 143.5,47.8 144.0,47.2 144.5,46.6 145.0,45.9 145.5,45.3 146.0,44.7 146.5,44.0 147.0,43.4 147.5,42.8 148.0,42.1 148.5,41.5 149.0,40.8 149.5,40.2 150.0,39.5 150.5,38.8 151.0,38.2 151.5,37.5 152.0,36.9 152.5,36.2 153.0,35.6 153.5,34.9 154.0,34.3 154.5,33.6 155.0,33.0 155.5,32.3 156.0,31.7 156.5,31.1 157.0,30.4 157.5,29.8 158.0,29.2 158.5,28.5 159.0,27.9 159.5,27.3 160.0,26.7 160.5,26.1 161.0,25.5 161.5,24.9 162.0,24.3 162.5,23.7 163.0,23.1 163.5,22.6 164.0,22.0 164.5,21.4 165.0,20.9 165.5,20.3 166.0,19.8 166.5,19.3 167.0,18.8 167.5,18.2 168.0,17.7 168.5,17.2 169.0,16.8 169.5,16.3 170.0,15.8 170.5,15.4 171.0,14.9 171.5,14.5 172.0,14.0 172.5,13.6 173.0,13.2 173.5,12.8 174.0,12.4 174.5,12.1 175.0,11.7 175.5,11.4 176.0,11.0 176.5,10.7 177.0,10.4 177.5,10.1 178.0,9.8 178.5,9.5 179.0,9.2 179.5,9.0 180.0,8.7 180.5,8.5 181.0,8.3 181.5,8.1 182.0,7.9 182.5,7.7 183.0,7.5 183.5,7.4 184.0,7.3 184.5,7.1 185.0,7.0 185.5,6.9 186.0,6.8 186.5,6.8 187.0,6.7 187.5,6.7 188.0,6.6 188.5,6.6 189.0,6.6 189.5,6.6 190.0,6.6 190.5,6.7 191.0,6.7 191.5,6.8 192.0,6.9 192.5,7.0 193.0,7.1 193.5,7.2 194.0,7.3 194.5,7.4 195.0,7.6 195.5,7.8 196.0,8.0 196.5,8.2 197.0,8.4 197.5,8.6 198.0,8.8 198.5,9.1 199.0,9.3 199.5,9.6 200.0,9.9 200.5,10.2 201.0,10.5 201.5,10.8 202.0,11.2 202.5,11.5 203.0,11.9 203.5,12.2 204.0,12.6 204.5,13.0 205.0,13.4 205.5,13.8 206.0,14.2 206.5,14.7 207.0,15.1 207.5,15.5 208.0,16.0 208.5,16.5 209.0,17.0 209.5,17.4 210.0,17.9 210.5,18.5 211.0,19.0 211.5,19.5 212.0,20.0 212.5,20.6 213.0,21.1 213.5,21.7 214.0,22.2 214.5,22.8 215.0,23.4 215.5,23.9 216.0,24.5 216.5,25.1 217.0,25.7 217.5,26.3 218.0,26.9 218.5,27.6 219.0,28.2 219.5,28.8 220.0,29.4 220.5,30.1 221.0,30.7 221.5,31.3 222.0,32.0 222.5,32.6 223.0,33.2 223.5,33.9 224.0,34.5 224.5,35.2 225.0,35.8 225.5,36.5 226.0,37.2 226.5,37.8 227.0,38.5 227.5,39.1 228.0,39.8 228.5,40.4 229.0,41.1 229.5,41.7 230.0,42.4 230.5,43.0 231.0,43.7 231.5,44.3 232.0,44.9 232.5,45.6 233.0,46.2 233.5,46.8 234.0,47.5 234.5,48.1 235.0,48.7 235.5,49.3 236.0,49.9 236.5,50.5 237.0,51.1 237.5,51.7 238.0,52.3 238.5,52.9 239.0,53.4 239.5,54.0 240.0,54.6 240.5,55.1 241.0,55.7 241.5,56.2 242.0,56.7 242.5,57.2 243.0,57.8 243.5,58.3 244.0,58.8 244.5,59.2 245.0,59.7 245.5,60.2 246.0,60.6 246.5,61.1 247.0,61.5 247.5,62.0 248.0,62.4 248.5,62.8 249.0,63.2 249.5,63.6 250.0,63.9 250.5,64.3 251.0,64.6 251.5,65.0 252.0,65.3 252.5,65.6 253.0,65.9 253.5,66.2 254.0,66.5 254.5,66.8 255.0,67.0 255.5,67.3 256.0,67.5 256.5,67.7 257.0,67.9 257.5,68.1 258.0,68.3 258.5,68.5 259.0,68.6 259.5,68.7 260.0,68.9 260.5,69.0 261.0,69.1 261.5,69.2 262.0,69.2 262.5,69.3 263.0,69.3 263.5,69.4 264.0,69.4 264.5,69.4 265.0,69.4 265.5,69.4 266.0,69.3 266.5,69.3 267.0,69.2 267.5,69.1 268.0,69.0 268.5,68.9 269.0,68.8 269.5,68.7 270.0,68.6 270.5,68.4 271.0,68.2 271.5,68.0 272.0,67.8 272.5,67.6 273.0,67.4 273.5,67.2 274.0,66.9 274.5,66.7 275.0,66.4 275.5,66.1 276.0,65.8 276.5,65.5 277.0,65.2 277.5,64.8 278.0,64.5 278.5,64.1 279.0,63.8 279.5,63.4 280.0,63.0 280.5,62.6 281.0,62.2 281.5,61.8 282.0,61.3 282.5,60.9 283.0,60.5 283.5,60.0 284.0,59.5 284.5,59.0 285.0,58.6 285.5,58.1 286.0,57.5 286.5,57.0 287.0,56.5 287.5,56.0 288.0,55.4 288.5,54.9 289.0,54.3 289.5,53.8 290.0,53.2 290.5,52.6 291.0,52.1 291.5,51.5 292.0,50.9 292.5,50.3 293.0,49.7 293.5,49.1 294.0,48.4 294.5,47.8 295.0,47.2 295.5,46.6 296.0,45.9 296.5,45.3 297.0,44.7 297.5,44.0 298.0,43.4 298.5,42.8 299.0,42.1 299.5,41.5 300.0,40.8 300.5,40.2 301.0,39.5 301.5,38.8 302.0,38.2 302.5,37.5 303.0,36.9 303.5,36.2 304.0,35.6 304.5,34.9 305.0,34.3 305.5,33.6 306.0,33.0 306.5,32.3 307.0,31.7 307.5,31.1 308.0,30.4 308.5,29.8 309.0,29.2 309.5,28.5 310.0,27.9 310.5,27.3 311.0,26.7 311.5,26.1 312.0,25.5 312.5,24.9 313.0,24.3 313.5,23.7 314.0,23.1 314.5,22.6 315.0,22.0 315.5,21.4 316.0,20.9 316.5,20.3 317.0,19.8 317.5,19.3 318.0,18.8 318.5,18.2 319.0,17.7 319.5,17.2 320.0,16.8 320.5,16.3 321.0,15.8 321.5,15.4 322.0,14.9 322.5,14.5 323.0,14.0 323.5,13.6 324.0,13.2 324.5,12.8 325.0,12.4 325.5,12.1 326.0,11.7 326.5,11.4 327.0,11.0 327.5,10.7 328.0,10.4 328.5,10.1 329.0,9.8 329.5,9.5 330.0,9.2 330.5,9.0 331.0,8.7 331.5,8.5 332.0,8.3 332.5,8.1 333.0,7.9 333.5,7.7 334.0,7.5 334.5,7.4 335.0,7.3 335.5,7.1 336.0,7.0 336.5,6.9 337.0,6.8 337.5,6.8 338.0,6.7 338.5,6.7 339.0,6.6 339.5,6.6 340.0,6.6 340.5,6.6 341.0,6.6 341.5,6.7 342.0,6.7 342.5,6.8 343.0,6.9 343.5,7.0 344.0,7.1 344.5,7.2 345.0,7.3 345.5,7.4 346.0,7.6 346.5,7.8 347.0,8.0 347.5,8.2 348.0,8.4 348.5,8.6 349.0,8.8 349.5,9.1 350.0,9.3 350.5,9.6 351.0,9.9 351.5,10.2 352.0,10.5 352.5,10.8 353.0,11.2 353.5,11.5 354.0,11.9 354.5,12.2 355.0,12.6 355.5,13.0 356.0,13.4 356.5,13.8 357.0,14.2 357.5,14.7 358.0,15.1 358.5,15.5 359.0,16.0 359.5,16.5 360.0,17.0 360.5,17.4 361.0,17.9 361.5,18.5 362.0,19.0 362.5,19.5 363.0,20.0 363.5,20.6 364.0,21.1 364.5,21.7 365.0,22.2 365.5,22.8 366.0,23.4 366.5,23.9 367.0,24.5 367.5,25.1 368.0,25.7 368.5,26.3 369.0,26.9 369.5,27.6 370.0,28.2 370.5,28.8 371.0,29.4 371.5,30.1 372.0,30.7 372.5,31.3 373.0,32.0 373.5,32.6 374.0,33.2 374.5,33.9 375.0,34.5 375.5,35.2 376.0,35.8 376.5,36.5 377.0,37.2 377.5,37.8 378.0,38.5 378.5,39.1 379.0,39.8 379.5,40.4 380.0,41.1 380.5,41.7 381.0,42.4 381.5,43.0 382.0,43.7 382.5,44.3 383.0,44.9 383.5,45.6 384.0,46.2 384.5,46.8 385.0,47.5 385.5,48.1 386.0,48.7 386.5,49.3 387.0,49.9 387.5,50.5 388.0,51.1 388.5,51.7 389.0,52.3 389.5,52.9 390.0,53.4 390.5,54.0 391.0,54.6 391.5,55.1 392.0,55.7 392.5,56.2 393.0,56.7 393.5,57.2 394.0,57.8 394.5,58.3 395.0,58.8 395.5,59.2 396.0,59.7 396.5,60.2 397.0,60.6 397.5,61.1 398.0,61.5 398.5,62.0 399.0,62.4 399.5,62.8 400.0,63.2 400.5,63.6 401.0,63.9 401.5,64.3 402.0,64.6 402.5,65.0 403.0,65.3 403.5,65.6 404.0,65.9 404.5,66.2 405.0,66.5 405.5,66.8 406.0,67.0 406.5,67.3 407.0,67.5 407.5,67.7 408.0,67.9 408.5,68.1 409.0,68.3 409.5,68.5 410.0,68.6 410.5,68.7 411.0,68.9 411.5,69.0 412.0,69.1 412.5,69.2 413.0,69.2 413.5,69.3 414.0,69.3 414.5,69.4 415.0,69.4 415.5,69.4 416.0,69.4 416.5,69.4 417.0,69.3 417.5,69.3 418.0,69.2 418.5,69.1 419.0,69.0 419.5,68.9 420.0,68.8 420.5,68.7 421.0,68.6 421.5,68.4 422.0,68.2 422.5,68.0 423.0,67.8 423.5,67.6 424.0,67.4 424.5,67.2 425.0,66.9 425.5,66.7 426.0,66.4 426.5,66.1 427.0,65.8 427.5,65.5 428.0,65.2 428.5,64.8 429.0,64.5 429.5,64.1 430.0,63.8 430.5,63.4 431.0,63.0 431.5,62.6 432.0,62.2 432.5,61.8 433.0,61.3 433.5,60.9 434.0,60.5 434.5,60.0 435.0,59.5 435.5,59.0 436.0,58.6 436.5,58.1 437.0,57.5 437.5,57.0 438.0,56.5 438.5,56.0 439.0,55.4 439.5,54.9 440.0,54.3 440.5,53.8 441.0,53.2 441.5,52.6 442.0,52.1 442.5,51.5 443.0,50.9 443.5,50.3 444.0,49.7 444.5,49.1 445.0,48.4 445.5,47.8 446.0,47.2 446.5,46.6 447.0,45.9 447.5,45.3 448.0,44.7 448.5,44.0 449.0,43.4 449.5,42.8 450.0,42.1 450.5,41.5 451.0,40.8 451.5,40.2 452.0,39.5 452.5,38.8 453.0,38.2 453.5,37.5 454.0,36.9 454.5,36.2 455.0,35.6 455.5,34.9 456.0,34.3 456.5,33.6 457.0,33.0 457.5,32.3" fill="none" stroke="#d26e6e" stroke-width="1.3"/><polyline points="0.0,26.2 0.5,25.6 1.0,25.0 1.5,24.4 2.0,23.8 2.5,23.3 3.0,22.7 3.5,22.1 4.0,21.6 4.5,21.0 5.0,20.5 5.5,19.9 6.0,19.4 6.5,18.9 7.0,18.3 7.5,17.8 8.0,17.3 8.5,16.9 9.0,16.4 9.5,15.9 10.0,15.5 10.5,15.0 11.0,14.6 11.5,14.1 12.0,13.7 12.5,13.3 13.0,12.9 13.5,12.5 14.0,12.1 14.5,11.8 15.0,11.4 15.5,11.1 16.0,10.8 16.5,10.4 17.0,10.1 17.5,9.8 18.0,9.5 18.5,9.3 19.0,9.0 19.5,8.8 20.0,8.5 20.5,8.3 21.0,8.1 21.5,7.9 22.0,7.7 22.5,7.6 23.0,7.4 23.5,7.3 24.0,7.1 24.5,7.0 25.0,6.9 25.5,6.8 26.0,6.8 26.5,6.7 27.0,6.7 27.5,6.6 28.0,6.6 28.5,6.6 29.0,6.6 29.5,6.6 30.0,6.7 30.5,6.7 31.0,6.8 31.5,6.8 32.0,6.9 32.5,7.0 33.0,7.1 33.5,7.3 34.0,7.4 34.5,7.6 35.0,7.7 35.5,7.9 36.0,8.1 36.5,8.3 37.0,8.5 37.5,8.8 38.0,9.0 38.5,9.3 39.0,9.5 39.5,9.8 40.0,10.1 40.5,10.4 41.0,10.8 41.5,11.1 42.0,11.4 42.5,11.8 43.0,12.1 43.5,12.5 44.0,12.9 44.5,13.3 45.0,13.7 45.5,14.1 46.0,14.6 46.5,15.0 47.0,15.5 47.5,15.9 48.0,16.4 48.5,16.9 49.0,17.3 49.5,17.8 50.0,18.3 50.5,18.9 51.0,19.4 51.5,19.9 52.0,20.5 52.5,21.0 53.0,21.6 53.5,22.1 54.0,22.7 54.5,23.3 55.0,23.8 55.5,24.4 56.0,25.0 56.5,25.6 57.0,26.2 57.5,26.8 58.0,27.4 58.5,28.0 59.0,28.7 59.5,29.3 60.0,29.9 60.5,30.6 61.0,31.2 61.5,31.8 62.0,32.5 62.5,33.1 63.0,33.8 63.5,34.4 64.0,35.1 64.5,35.7 65.0,36.4 65.5,37.0 66.0,37.7 66.5,38.3 67.0,39.0 67.5,39.6 68.0,40.3 68.5,40.9 69.0,41.6 69.5,42.2 70.0,42.9 70.5,43.5 71.0,44.2 71.5,44.8 72.0,45.4 72.5,46.1 73.0,46.7 73.5,47.3 74.0,48.0 74.5,48.6 75.0,49.2 75.5,49.8 76.0,50.4 76.5,51.0 77.0,51.6 77.5,52.2 78.0,52.7 78.5,53.3 79.0,53.9 79.5,54.4 80.0,55.0 80.5,55.5 81.0,56.1 81.5,56.6 82.0,57.1 82.5,57.7 83.0,58.2 83.5,58.7 84.0,59.1 84.5,59.6 85.0,60.1 85.5,60.5 86.0,61.0 86.5,61.4 87.0,61.9 87.5,62.3 88.0,62.7 88.5,63.1 89.0,63.5 89.5,63.9 90.0,64.2 90.5,64.6 91.0,64.9 91.5,65.2 92.0,65.6 92.5,65.9 93.0,66.2 93.5,66.5 94.0,66.7 94.5,67.0 95.0,67.2 95.5,67.5 96.0,67.7 96.5,67.9 97.0,68.1 97.5,68.3 98.0,68.4 98.5,68.6 99.0,68.7 99.5,68.9 100.0,69.0 100.5,69.1 101.0,69.2 101.5,69.2 102.0,69.3 102.5,69.3 103.0,69.4 103.5,69.4 104.0,69.4 104.5,69.4 105.0,69.4 105.5,69.3 106.0,69.3 106.5,69.2 107.0,69.2 107.5,69.1 108.0,69.0 108.5,68.9 109.0,68.7 109.5,68.6 110.0,68.4 110.5,68.3 111.0,68.1 111.5,67.9 112.0,67.7 112.5,67.5 113.0,67.2 113.5,67.0 114.0,66.7 114.5,66.5 115.0,66.2 115.5,65.9 116.0,65.6 116.5,65.2 117.0,64.9 117.5,64.6 118.0,64.2 118.5,63.9 119.0,63.5 119.5,63.1 120.0,62.7 120.5,62.3 121.0,61.9 121.5,61.4 122.0,61.0 122.5,60.5 123.0,60.1 123.5,59.6 124.0,59.1 124.5,58.7 125.0,58.2 125.5,57.7 126.0,57.1 126.5,56.6 127.0,56.1 127.5,55.5 128.0,55.0 128.5,54.4 129.0,53.9 129.5,53.3 130.0,52.7 130.5,52.2 131.0,51.6 131.5,51.0 132.0,50.4 132.5,49.8 133.0,49.2 133.5,48.6 134.0,48.0 134.5,47.3 135.0,46.7 135.5,46.1 136.0,45.4 136.5,44.8 137.0,44.2 137.5,43.5 138.0,42.9 138.5,42.2 139.0,41.6 139.5,40.9 140.0,40.3 140.5,39.6 141.0,39.0 141.5,38.3 142.0,37.7 142.5,37.0 143.0,36.4 143.5,35.7 144.0,35.1 144.5,34.4 145.0,33.8 145.5,33.1 146.0,32.5 146.5,31.8 147.0,31.2 147.5,30.6 148.0,29.9 148.5,29.3 149.0,28.7 149.5,28.0 150.0,27.4 150.5,26.8 151.0,26.2 151.5,25.6 152.0,25.0 152.5,24.4 153.0,23.8 153.5,23.3 154.0,22.7 154.5,22.1 155.0,21.6 155.5,21.0 156.0,20.5 156.5,19.9 157.0,19.4 157.5,18.9 158.0,18.3 158.5,17.8 159.0,17.3 159.5,16.9 160.0,16.4 160.5,15.9 161.0,15.5 161.5,15.0 162.0,14.6 162.5,14.1 163.0,13.7 163.5,13.3 164.0,12.9 164.5,12.5 165.0,12.1 165.5,11.8 166.0,11.4 166.5,11.1 167.0,10.8 167.5,10.4 168.0,10.1 168.5,9.8 169.0,9.5 169.5,9.3 170.0,9.0 170.5,8.8 171.0,8.5 171.5,8.3 172.0,8.1 172.5,7.9 173.0,7.7 173.5,7.6 174.0,7.4 174.5,7.3 175.0,7.1 175.5,7.0 176.0,6.9 176.5,6.8 177.0,6.8 177.5,6.7 178.0,6.7 178.5,6.6 179.0,6.6 179.5,6.6 180.0,6.6 180.5,6.6 181.0,6.7 181.5,6.7 182.0,6.8 182.5,6.8 183.0,6.9 183.5,7.0 184.0,7.1 184.5,7.3 185.0,7.4 185.5,7.6 186.0,7.7 186.5,7.9 187.0,8.1 187.5,8.3 188.0,8.5 188.5,8.8 189.0,9.0 189.5,9.3 190.0,9.5 190.5,9.8 191.0,10.1 191.5,10.4 192.0,10.8 192.5,11.1 193.0,11.4 193.5,11.8 194.0,12.1 194.5,12.5 195.0,12.9 195.5,13.3 196.0,13.7 196.5,14.1 197.0,14.6 197.5,15.0 198.0,15.5 198.5,15.9 199.0,16.4 199.5,16.9 200.0,17.3 200.5,17.8 201.0,18.3 201.5,18.9 202.0,19.4 202.5,19.9 203.0,20.5 203.5,21.0 204.0,21.6 204.5,22.1 205.0,22.7 205.5,23.3 206.0,23.8 206.5,24.4 207.0,25.0 207.5,25.6 208.0,26.2 208.5,26.8 209.0,27.4 209.5,28.0 210.0,28.7 210.5,29.3 211.0,29.9 211.5,30.6 212.0,31.2 212.5,31.8 213.0,32.5 213.5,33.1 214.0,33.8 214.5,34.4 215.0,35.1 215.5,35.7 216.0,36.4 216.5,37.0 217.0,37.7 217.5,38.3 218.0,39.0 218.5,39.6 219.0,40.3 219.5,40.9 220.0,41.6 220.5,42.2 221.0,42.9 221.5,43.5 222.0,44.2 222.5,44.8 223.0,45.4 223.5,46.1 224.0,46.7 224.5,47.3 225.0,48.0 225.5,48.6 226.0,49.2 226.5,49.8 227.0,50.4 227.5,51.0 228.0,51.6 228.5,52.2 229.0,52.7 229.5,53.3 230.0,53.9 230.5,54.4 231.0,55.0 231.5,55.5 232.0,56.1 232.5,56.6 233.0,57.1 233.5,57.7 234.0,58.2 234.5,58.7 235.0,59.1 235.5,59.6 236.0,60.1 236.5,60.5 237.0,61.0 237.5,61.4 238.0,61.9 238.5,62.3 239.0,62.7 239.5,63.1 240.0,63.5 240.5,63.9 241.0,64.2 241.5,64.6 242.0,64.9 242.5,65.2 243.0,65.6 243.5,65.9 244.0,66.2 244.5,66.5 245.0,66.7 245.5,67.0 246.0,67.2 246.5,67.5 247.0,67.7 247.5,67.9 248.0,68.1 248.5,68.3 249.0,68.4 249.5,68.6 250.0,68.7 250.5,68.9 251.0,69.0 251.5,69.1 252.0,69.2 252.5,69.2 253.0,69.3 253.5,69.3 254.0,69.4 254.5,69.4 255.0,69.4 255.5,69.4 256.0,69.4 256.5,69.3 257.0,69.3 257.5,69.2 258.0,69.2 258.5,69.1 259.0,69.0 259.5,68.9 260.0,68.7 260.5,68.6 261.0,68.4 261.5,68.3 262.0,68.1 262.5,67.9 263.0,67.7 263.5,67.5 264.0,67.2 264.5,67.0 265.0,66.7 265.5,66.5 266.0,66.2 266.5,65.9 267.0,65.6 267.5,65.2 268.0,64.9 268.5,64.6 269.0,64.2 269.5,63.9 270.0,63.5 270.5,63.1 271.0,62.7 271.5,62.3 272.0,61.9 272.5,61.4 273.0,61.0 273.5,60.5 274.0,60.1 274.5,59.6 275.0,59.1 275.5,58.7 276.0,58.2 276.5,57.7 277.0,57.1 277.5,56.6 278.0,56.1 278.5,55.5 279.0,55.0 279.5,54.4 280.0,53.9 280.5,53.3 281.0,52.7 281.5,52.2 282.0,51.6 282.5,51.0 283.0,50.4 283.5,49.8 284.0,49.2 284.5,48.6 285.0,48.0 285.5,47.3 286.0,46.7 286.5,46.1 287.0,45.4 287.5,44.8 288.0,44.2 288.5,43.5 289.0,42.9 289.5,42.2 290.0,41.6 290.5,40.9 291.0,40.3 291.5,39.6 292.0,39.0 292.5,38.3 293.0,37.7 293.5,37.0 294.0,36.4 294.5,35.7 295.0,35.1 295.5,34.4 296.0,33.8 296.5,33.1 297.0,32.5 297.5,31.8 298.0,31.2 298.5,30.6 299.0,29.9 299.5,29.3 300.0,28.7 300.5,28.0 301.0,27.4 301.5,26.8 302.0,26.2 302.5,25.6 303.0,25.0 303.5,24.4 304.0,23.8 304.5,23.3 305.0,22.7 305.5,22.1 306.0,21.6 306.5,21.0 307.0,20.5 307.5,19.9 308.0,19.4 308.5,18.9 309.0,18.3 309.5,17.8 310.0,17.3 310.5,16.9 311.0,16.4 311.5,15.9 312.0,15.5 312.5,15.0 313.0,14.6 313.5,14.1 314.0,13.7 314.5,13.3 315.0,12.9 315.5,12.5 316.0,12.1 316.5,11.8 317.0,11.4 317.5,11.1 318.0,10.8 318.5,10.4 319.0,10.1 319.5,9.8 320.0,9.5 320.5,9.3 321.0,9.0 321.5,8.8 322.0,8.5 322.5,8.3 323.0,8.1 323.5,7.9 324.0,7.7 324.5,7.6 325.0,7.4 325.5,7.3 326.0,7.1 326.5,7.0 327.0,6.9 327.5,6.8 328.0,6.8 328.5,6.7 329.0,6.7 329.5,6.6 330.0,6.6 330.5,6.6 331.0,6.6 331.5,6.6 332.0,6.7 332.5,6.7 333.0,6.8 333.5,6.8 334.0,6.9 334.5,7.0 335.0,7.1 335.5,7.3 336.0,7.4 336.5,7.6 337.0,7.7 337.5,7.9 338.0,8.1 338.5,8.3 339.0,8.5 339.5,8.8 340.0,9.0 340.5,9.3 341.0,9.5 341.5,9.8 342.0,10.1 342.5,10.4 343.0,10.8 343.5,11.1 344.0,11.4 344.5,11.8 345.0,12.1 345.5,12.5 346.0,12.9 346.5,13.3 347.0,13.7 347.5,14.1 348.0,14.6 348.5,15.0 349.0,15.5 349.5,15.9 350.0,16.4 350.5,16.9 351.0,17.3 351.5,17.8 352.0,18.3 352.5,18.9 353.0,19.4 353.5,19.9 354.0,20.5 354.5,21.0 355.0,21.6 355.5,22.1 356.0,22.7 356.5,23.3 357.0,23.8 357.5,24.4 358.0,25.0 358.5,25.6 359.0,26.2 359.5,26.8 360.0,27.4 360.5,28.0 361.0,28.7 361.5,29.3 362.0,29.9 362.5,30.6 363.0,31.2 363.5,31.8 364.0,32.5 364.5,33.1 365.0,33.8 365.5,34.4 366.0,35.1 366.5,35.7 367.0,36.4 367.5,37.0 368.0,37.7 368.5,38.3 369.0,39.0 369.5,39.6 370.0,40.3 370.5,40.9 371.0,41.6 371.5,42.2 372.0,42.9 372.5,43.5 373.0,44.2 373.5,44.8 374.0,45.4 374.5,46.1 375.0,46.7 375.5,47.3 376.0,48.0 376.5,48.6 377.0,49.2 377.5,49.8 378.0,50.4 378.5,51.0 379.0,51.6 379.5,52.2 380.0,52.7 380.5,53.3 381.0,53.9 381.5,54.4 382.0,55.0 382.5,55.5 383.0,56.1 383.5,56.6 384.0,57.1 384.5,57.7 385.0,58.2 385.5,58.7 386.0,59.1 386.5,59.6 387.0,60.1 387.5,60.5 388.0,61.0 388.5,61.4 389.0,61.9 389.5,62.3 390.0,62.7 390.5,63.1 391.0,63.5 391.5,63.9 392.0,64.2 392.5,64.6 393.0,64.9 393.5,65.2 394.0,65.6 394.5,65.9 395.0,66.2 395.5,66.5 396.0,66.7 396.5,67.0 397.0,67.2 397.5,67.5 398.0,67.7 398.5,67.9 399.0,68.1 399.5,68.3 400.0,68.4 400.5,68.6 401.0,68.7 401.5,68.9 402.0,69.0 402.5,69.1 403.0,69.2 403.5,69.2 404.0,69.3 404.5,69.3 405.0,69.4 405.5,69.4 406.0,69.4 406.5,69.4 407.0,69.4 407.5,69.3 408.0,69.3 408.5,69.2 409.0,69.2 409.5,69.1 410.0,69.0 410.5,68.9 411.0,68.7 411.5,68.6 412.0,68.4 412.5,68.3 413.0,68.1 413.5,67.9 414.0,67.7 414.5,67.5 415.0,67.2 415.5,67.0 416.0,66.7 416.5,66.5 417.0,66.2 417.5,65.9 418.0,65.6 418.5,65.2 419.0,64.9 419.5,64.6 420.0,64.2 420.5,63.9 421.0,63.5 421.5,63.1 422.0,62.7 422.5,62.3 423.0,61.9 423.5,61.4 424.0,61.0 424.5,60.5 425.0,60.1 425.5,59.6 426.0,59.1 426.5,58.7 427.0,58.2 427.5,57.7 428.0,57.1 428.5,56.6 429.0,56.1 429.5,55.5 430.0,55.0 430.5,54.4 431.0,53.9 431.5,53.3 432.0,52.7 432.5,52.2 433.0,51.6 433.5,51.0 434.0,50.4 434.5,49.8 435.0,49.2 435.5,48.6 436.0,48.0 436.5,47.3 437.0,46.7 437.5,46.1 438.0,45.4 438.5,44.8 439.0,44.2 439.5,43.5 440.0,42.9 440.5,42.2 441.0,41.6 441.5,40.9 442.0,40.3 442.5,39.6 443.0,39.0 443.5,38.3 444.0,37.7 444.5,37.0 445.0,36.4 445.5,35.7 446.0,35.1 446.5,34.4 447.0,33.8 447.5,33.1 448.0,32.5 448.5,31.8 449.0,31.2 449.5,30.6 450.0,29.9 450.5,29.3 451.0,28.7 451.5,28.0 452.0,27.4 452.5,26.8 453.0,26.2 453.5,25.6 454.0,25.0 454.5,24.4 455.0,23.8 455.5,23.3 456.0,22.7 456.5,22.1 457.0,21.6 457.5,21.0" fill="none" stroke="#6ec8a0" stroke-width="1.3"/><polyline points="0.0,15.5 0.5,15.0 1.0,14.6 1.5,14.1 2.0,13.7 2.5,13.3 3.0,12.9 3.5,12.5 4.0,12.1 4.5,11.8 5.0,11.4 5.5,11.1 6.0,10.8 6.5,10.4 7.0,10.1 7.5,9.8 8.0,9.5 8.5,9.3 9.0,9.0 9.5,8.8 10.0,8.5 10.5,8.3 11.0,8.1 11.5,7.9 12.0,7.7 12.5,7.6 13.0,7.4 13.5,7.3 14.0,7.1 14.5,7.0 15.0,6.9 15.5,6.8 16.0,6.8 16.5,6.7 17.0,6.7 17.5,6.6 18.0,6.6 18.5,6.6 19.0,6.6 19.5,6.6 20.0,6.7 20.5,6.7 21.0,6.8 21.5,6.8 22.0,6.9 22.5,7.0 23.0,7.1 23.5,7.3 24.0,7.4 24.5,7.6 25.0,7.7 25.5,7.9 26.0,8.1 26.5,8.3 27.0,8.5 27.5,8.8 28.0,9.0 28.5,9.3 29.0,9.5 29.5,9.8 30.0,10.1 30.5,10.4 31.0,10.8 31.5,11.1 32.0,11.4 32.5,11.8 33.0,12.1 33.5,12.5 34.0,12.9 34.5,13.3 35.0,13.7 35.5,14.1 36.0,14.6 36.5,15.0 37.0,15.5 37.5,15.9 38.0,16.4 38.5,16.9 39.0,17.3 39.5,17.8 40.0,18.3 40.5,18.9 41.0,19.4 41.5,19.9 42.0,20.5 42.5,21.0 43.0,21.6 43.5,22.1 44.0,22.7 44.5,23.3 45.0,23.8 45.5,24.4 46.0,25.0 46.5,25.6 47.0,26.2 47.5,26.8 48.0,27.4 48.5,28.0 49.0,28.7 49.5,29.3 50.0,29.9 50.5,30.6 51.0,31.2 51.5,31.8 52.0,32.5 52.5,33.1 53.0,33.8 53.5,34.4 54.0,35.1 54.5,35.7 55.0,36.4 55.5,37.0 56.0,37.7 56.5,38.3 57.0,39.0 57.5,39.6 58.0,40.3 58.5,40.9 59.0,41.6 59.5,42.2 60.0,42.9 60.5,43.5 61.0,44.2 61.5,44.8 62.0,45.4 62.5,46.1 63.0,46.7 63.5,47.3 64.0,48.0 64.5,48.6 65.0,49.2 65.5,49.8 66.0,50.4 66.5,51.0 67.0,51.6 67.5,52.2 68.0,52.7 68.5,53.3 69.0,53.9 69.5,54.4 70.0,55.0 70.5,55.5 71.0,56.1 71.5,56.6 72.0,57.1 72.5,57.7 73.0,58.2 73.5,58.7 74.0,59.1 74.5,59.6 75.0,60.1 75.5,60.5 76.0,61.0 76.5,61.4 77.0,61.9 77.5,62.3 78.0,62.7 78.5,63.1 79.0,63.5 79.5,63.9 80.0,64.2 80.5,64.6 81.0,64.9 81.5,65.2 82.0,65.6 82.5,65.9 83.0,66.2 83.5,66.5 84.0,66.7 84.5,67.0 85.0,67.2 85.5,67.5 86.0,67.7 86.5,67.9 87.0,68.1 87.5,68.3 88.0,68.4 88.5,68.6 89.0,68.7 89.5,68.9 90.0,69.0 90.5,69.1 91.0,69.2 91.5,69.2 92.0,69.3 92.5,69.3 93.0,69.4 93.5,69.4 94.0,69.4 94.5,69.4 95.0,69.4 95.5,69.3 96.0,69.3 96.5,69.2 97.0,69.2 97.5,69.1 98.0,69.0 98.5,68.9 99.0,68.7 99.5,68.6 100.0,68.4 100.5,68.3 101.0,68.1 101.5,67.9 102.0,67.7 102.5,67.5 103.0,67.2 103.5,67.0 104.0,66.7 104.5,66.5 105.0,66.2 105.5,65.9 106.0,65.6 106.5,65.2 107.0,64.9 107.5,64.6 108.0,64.2 108.5,63.9 109.0,63.5 109.5,63.1 110.0,62.7 110.5,62.3 111.0,61.9 111.5,61.4 112.0,61.0 112.5,60.5 113.0,60.1 113.5,59.6 114.0,59.1 114.5,58.7 115.0,58.2 115.5,57.7 116.0,57.1 116.5,56.6 117.0,56.1 117.5,55.5 118.0,55.0 118.5,54.4 119.0,53.9 119.5,53.3 120.0,52.7 120.5,52.2 121.0,51.6 121.5,51.0 122.0,50.4 122.5,49.8 123.0,49.2 123.5,48.6 124.0,48.0 124.5,47.3 125.0,46.7 125.5,46.1 126.0,45.4 126.5,44.8 127.0,44.2 127.5,43.5 128.0,42.9 128.5,42.2 129.0,41.6 129.5,40.9 130.0,40.3 130.5,39.6 131.0,39.0 131.5,38.3 132.0,37.7 132.5,37.0 133.0,36.4 133.5,35.7 134.0,35.1 134.5,34.4 135.0,33.8 135.5,33.1 136.0,32.5 136.5,31.8 137.0,31.2 137.5,30.6 138.0,29.9 138.5,29.3 139.0,28.7 139.5,28.0 140.0,27.4 140.5,26.8 141.0,26.2 141.5,25.6 142.0,25.0 142.5,24.4 143.0,23.8 143.5,23.3 144.0,22.7 144.5,22.1 145.0,21.6 145.5,21.0 146.0,20.5 146.5,19.9 147.0,19.4 147.5,18.9 148.0,18.3 148.5,17.8 149.0,17.3 149.5,16.9 150.0,16.4 150.5,15.9 151.0,15.5 151.5,15.0 152.0,14.6 152.5,14.1 153.0,13.7 153.5,13.3 154.0,12.9 154.5,12.5 155.0,12.1 155.5,11.8 156.0,11.4 156.5,11.1 157.0,10.8 157.5,10.4 158.0,10.1 158.5,9.8 159.0,9.5 159.5,9.3 160.0,9.0 160.5,8.8 161.0,8.5 161.5,8.3 162.0,8.1 162.5,7.9 163.0,7.7 163.5,7.6 164.0,7.4 164.5,7.3 165.0,7.1 165.5,7.0 166.0,6.9 166.5,6.8 167.0,6.8 167.5,6.7 168.0,6.7 168.5,6.6 169.0,6.6 169.5,6.6 170.0,6.6 170.5,6.6 171.0,6.7 171.5,6.7 172.0,6.8 172.5,6.8 173.0,6.9 173.5,7.0 174.0,7.1 174.5,7.3 175.0,7.4 175.5,7.6 176.0,7.7 176.5,7.9 177.0,8.1 177.5,8.3 178.0,8.5 178.5,8.8 179.0,9.0 179.5,9.3 180.0,9.5 180.5,9.8 181.0,10.1 181.5,10.4 182.0,10.8 182.5,11.1 183.0,11.4 183.5,11.8 184.0,12.1 184.5,12.5 185.0,12.9 185.5,13.3 186.0,13.7 186.5,14.1 187.0,14.6 187.5,15.0 188.0,15.5 188.5,15.9 189.0,16.4 189.5,16.9 190.0,17.3 190.5,17.8 191.0,18.3 191.5,18.9 192.0,19.4 192.5,19.9 193.0,20.5 193.5,21.0 194.0,21.6 194.5,22.1 195.0,22.7 195.5,23.3 196.0,23.8 196.5,24.4 197.0,25.0 197.5,25.6 198.0,26.2 198.5,26.8 199.0,27.4 199.5,28.0 200.0,28.7 200.5,29.3 201.0,29.9 201.5,30.6 202.0,31.2 202.5,31.8 203.0,32.5 203.5,33.1 204.0,33.8 204.5,34.4 205.0,35.1 205.5,35.7 206.0,36.4 206.5,37.0 207.0,37.7 207.5,38.3 208.0,39.0 208.5,39.6 209.0,40.3 209.5,40.9 210.0,41.6 210.5,42.2 211.0,42.9 211.5,43.5 212.0,44.2 212.5,44.8 213.0,45.4 213.5,46.1 214.0,46.7 214.5,47.3 215.0,48.0 215.5,48.6 216.0,49.2 216.5,49.8 217.0,50.4 217.5,51.0 218.0,51.6 218.5,52.2 219.0,52.7 219.5,53.3 220.0,53.9 220.5,54.4 221.0,55.0 221.5,55.5 222.0,56.1 222.5,56.6 223.0,57.1 223.5,57.7 224.0,58.2 224.5,58.7 225.0,59.1 225.5,59.6 226.0,60.1 226.5,60.5 227.0,61.0 227.5,61.4 228.0,61.9 228.5,62.3 229.0,62.7 229.5,63.1 230.0,63.5 230.5,63.9 231.0,64.2 231.5,64.6 232.0,64.9 232.5,65.2 233.0,65.6 233.5,65.9 234.0,66.2 234.5,66.5 235.0,66.7 235.5,67.0 236.0,67.2 236.5,67.5 237.0,67.7 237.5,67.9 238.0,68.1 238.5,68.3 239.0,68.4 239.5,68.6 240.0,68.7 240.5,68.9 241.0,69.0 241.5,69.1 242.0,69.2 242.5,69.2 243.0,69.3 243.5,69.3 244.0,69.4 244.5,69.4 245.0,69.4 245.5,69.4 246.0,69.4 246.5,69.3 247.0,69.3 247.5,69.2 248.0,69.2 248.5,69.1 249.0,69.0 249.5,68.9 250.0,68.7 250.5,68.6 251.0,68.4 251.5,68.3 252.0,68.1 252.5,67.9 253.0,67.7 253.5,67.5 254.0,67.2 254.5,67.0 255.0,66.7 255.5,66.5 256.0,66.2 256.5,65.9 257.0,65.6 257.5,65.2 258.0,64.9 258.5,64.6 259.0,64.2 259.5,63.9 260.0,63.5 260.5,63.1 261.0,62.7 261.5,62.3 262.0,61.9 262.5,61.4 263.0,61.0 263.5,60.5 264.0,60.1 264.5,59.6 265.0,59.1 265.5,58.7 266.0,58.2 266.5,57.7 267.0,57.1 267.5,56.6 268.0,56.1 268.5,55.5 269.0,55.0 269.5,54.4 270.0,53.9 270.5,53.3 271.0,52.7 271.5,52.2 272.0,51.6 272.5,51.0 273.0,50.4 273.5,49.8 274.0,49.2 274.5,48.6 275.0,48.0 275.5,47.3 276.0,46.7 276.5,46.1 277.0,45.4 277.5,44.8 278.0,44.2 278.5,43.5 279.0,42.9 279.5,42.2 280.0,41.6 280.5,40.9 281.0,40.3 281.5,39.6 282.0,39.0 282.5,38.3 283.0,37.7 283.5,37.0 284.0,36.4 284.5,35.7 285.0,35.1 285.5,34.4 286.0,33.8 286.5,33.1 287.0,32.5 287.5,31.8 288.0,31.2 288.5,30.6 289.0,29.9 289.5,29.3 290.0,28.7 290.5,28.0 291.0,27.4 291.5,26.8 292.0,26.2 292.5,25.6 293.0,25.0 293.5,24.4 294.0,23.8 294.5,23.3 295.0,22.7 295.5,22.1 296.0,21.6 296.5,21.0 297.0,20.5 297.5,19.9 298.0,19.4 298.5,18.9 299.0,18.3 299.5,17.8 300.0,17.3 300.5,16.9 301.0,16.4 301.5,15.9 302.0,15.5 302.5,15.0 303.0,14.6 303.5,14.1 304.0,13.7 304.5,13.3 305.0,12.9 305.5,12.5 306.0,12.1 306.5,11.8 307.0,11.4 307.5,11.1 308.0,10.8 308.5,10.4 309.0,10.1 309.5,9.8 310.0,9.5 310.5,9.3 311.0,9.0 311.5,8.8 312.0,8.5 312.5,8.3 313.0,8.1 313.5,7.9 314.0,7.7 314.5,7.6 315.0,7.4 315.5,7.3 316.0,7.1 316.5,7.0 317.0,6.9 317.5,6.8 318.0,6.8 318.5,6.7 319.0,6.7 319.5,6.6 320.0,6.6 320.5,6.6 321.0,6.6 321.5,6.6 322.0,6.7 322.5,6.7 323.0,6.8 323.5,6.8 324.0,6.9 324.5,7.0 325.0,7.1 325.5,7.3 326.0,7.4 326.5,7.6 327.0,7.7 327.5,7.9 328.0,8.1 328.5,8.3 329.0,8.5 329.5,8.8 330.0,9.0 330.5,9.3 331.0,9.5 331.5,9.8 332.0,10.1 332.5,10.4 333.0,10.8 333.5,11.1 334.0,11.4 334.5,11.8 335.0,12.1 335.5,12.5 336.0,12.9 336.5,13.3 337.0,13.7 337.5,14.1 338.0,14.6 338.5,15.0 339.0,15.5 339.5,15.9 340.0,16.4 340.5,16.9 341.0,17.3 341.5,17.8 342.0,18.3 342.5,18.9 343.0,19.4 343.5,19.9 344.0,20.5 344.5,21.0 345.0,21.6 345.5,22.1 346.0,22.7 346.5,23.3 347.0,23.8 347.5,24.4 348.0,25.0 348.5,25.6 349.0,26.2 349.5,26.8 350.0,27.4 350.5,28.0 351.0,28.7 351.5,29.3 352.0,29.9 352.5,30.6 353.0,31.2 353.5,31.8 354.0,32.5 354.5,33.1 355.0,33.8 355.5,34.4 356.0,35.1 356.5,35.7 357.0,36.4 357.5,37.0 358.0,37.7 358.5,38.3 359.0,39.0 359.5,39.6 360.0,40.3 360.5,40.9 361.0,41.6 361.5,42.2 362.0,42.9 362.5,43.5 363.0,44.2 363.5,44.8 364.0,45.4 364.5,46.1 365.0,46.7 365.5,47.3 366.0,48.0 366.5,48.6 367.0,49.2 367.5,49.8 368.0,50.4 368.5,51.0 369.0,51.6 369.5,52.2 370.0,52.7 370.5,53.3 371.0,53.9 371.5,54.4 372.0,55.0 372.5,55.5 373.0,56.1 373.5,56.6 374.0,57.1 374.5,57.7 375.0,58.2 375.5,58.7 376.0,59.1 376.5,59.6 377.0,60.1 377.5,60.5 378.0,61.0 378.5,61.4 379.0,61.9 379.5,62.3 380.0,62.7 380.5,63.1 381.0,63.5 381.5,63.9 382.0,64.2 382.5,64.6 383.0,64.9 383.5,65.2 384.0,65.6 384.5,65.9 385.0,66.2 385.5,66.5 386.0,66.7 386.5,67.0 387.0,67.2 387.5,67.5 388.0,67.7 388.5,67.9 389.0,68.1 389.5,68.3 390.0,68.4 390.5,68.6 391.0,68.7 391.5,68.9 392.0,69.0 392.5,69.1 393.0,69.2 393.5,69.2 394.0,69.3 394.5,69.3 395.0,69.4 395.5,69.4 396.0,69.4 396.5,69.4 397.0,69.4 397.5,69.3 398.0,69.3 398.5,69.2 399.0,69.2 399.5,69.1 400.0,69.0 400.5,68.9 401.0,68.7 401.5,68.6 402.0,68.4 402.5,68.3 403.0,68.1 403.5,67.9 404.0,67.7 404.5,67.5 405.0,67.2 405.5,67.0 406.0,66.7 406.5,66.5 407.0,66.2 407.5,65.9 408.0,65.6 408.5,65.2 409.0,64.9 409.5,64.6 410.0,64.2 410.5,63.9 411.0,63.5 411.5,63.1 412.0,62.7 412.5,62.3 413.0,61.9 413.5,61.4 414.0,61.0 414.5,60.5 415.0,60.1 415.5,59.6 416.0,59.1 416.5,58.7 417.0,58.2 417.5,57.7 418.0,57.1 418.5,56.6 419.0,56.1 419.5,55.5 420.0,55.0 420.5,54.4 421.0,53.9 421.5,53.3 422.0,52.7 422.5,52.2 423.0,51.6 423.5,51.0 424.0,50.4 424.5,49.8 425.0,49.2 425.5,48.6 426.0,48.0 426.5,47.3 427.0,46.7 427.5,46.1 428.0,45.4 428.5,44.8 429.0,44.2 429.5,43.5 430.0,42.9 430.5,42.2 431.0,41.6 431.5,40.9 432.0,40.3 432.5,39.6 433.0,39.0 433.5,38.3 434.0,37.7 434.5,37.0 435.0,36.4 435.5,35.7 436.0,35.1 436.5,34.4 437.0,33.8 437.5,33.1 438.0,32.5 438.5,31.8 439.0,31.2 439.5,30.6 440.0,29.9 440.5,29.3 441.0,28.7 441.5,28.0 442.0,27.4 442.5,26.8 443.0,26.2 443.5,25.6 444.0,25.0 444.5,24.4 445.0,23.8 445.5,23.3 446.0,22.7 446.5,22.1 447.0,21.6 447.5,21.0 448.0,20.5 448.5,19.9 449.0,19.4 449.5,18.9 450.0,18.3 450.5,17.8 451.0,17.3 451.5,16.9 452.0,16.4 452.5,15.9 453.0,15.5 453.5,15.0 454.0,14.6 454.5,14.1 455.0,13.7 455.5,13.3 456.0,12.9 456.5,12.5 457.0,12.1 457.5,11.8" fill="none" stroke="#2a9fe6" stroke-width="1.3"/></svg>
<svg style="left:13.5px;top:743.0px;" width="11" height="11" viewBox="0 0 11 11"><circle cx="5.5" cy="5.5" r="4.3" fill="none" stroke="#858585" stroke-width="1.2"/></svg>
<div class="t" style="left:30px;top:741px;color:#e6e6e6;letter-spacing:-0.07px;">Strength</div>
<div style="left:177px;top:740.5px;width:94px;height:16px;background:#2a2a2a;border-radius:3px;"></div>
<div class="t" style="left:181.5px;top:741px;color:#5e5e5e;">%</div>
<div class="t" style="left:194px;top:741px;color:#e6e6e6;letter-spacing:-0.17px;">100.0</div>
<svg style="left:13.5px;top:765.0px;" width="11" height="11" viewBox="0 0 11 11"><circle cx="5.5" cy="5.5" r="4.3" fill="none" stroke="#858585" stroke-width="1.2"/></svg>
<div class="t" style="left:30px;top:763px;color:#e6e6e6;letter-spacing:-0.36px;">Strength Fades to Zero</div>
<div style="left:177px;top:762.5px;width:16px;height:16px;background:#2a2a2a;border-radius:3px;"></div>
<svg style="left:177px;top:762.5px;" width="16" height="16" viewBox="0 0 16 16"><path d="M3 8.5l3.3 3.5L13 3.8" fill="none" stroke="#2ecc71" stroke-width="2.2"/></svg>
<svg style="left:13.5px;top:787.0px;" width="11" height="11" viewBox="0 0 11 11"><circle cx="5.5" cy="5.5" r="4.3" fill="none" stroke="#858585" stroke-width="1.2"/></svg>
<div class="t" style="left:30px;top:785px;color:#e6e6e6;letter-spacing:-0.34px;">Type</div>
<div style="left:178px;top:785.5px;width:192px;height:14px;background:#505050;border-radius:3px;"></div>
<div class="t" style="left:180.5px;top:785px;letter-spacing:-0.74px;">Sine</div>
<svg style="left:357.0px;top:789.5px;" width="9" height="6" viewBox="0 0 9 6"><path d="M0.5 0.7l4 4 4-4" fill="none" stroke="#c8c8c8" stroke-width="1.1"/></svg>
<svg style="left:13.5px;top:809.0px;" width="11" height="11" viewBox="0 0 11 11"><circle cx="5.5" cy="5.5" r="4.3" fill="none" stroke="#858585" stroke-width="1.2"/></svg>
<div class="t" style="left:30px;top:807px;color:#e6e6e6;letter-spacing:-0.39px;">Wave Style</div>
<div style="left:178px;top:807.5px;width:192px;height:14px;background:#505050;border-radius:3px;"></div>
<div class="t" style="left:180.5px;top:807px;letter-spacing:0.02px;">Normal</div>
<svg style="left:357.0px;top:811.5px;" width="9" height="6" viewBox="0 0 9 6"><path d="M0.5 0.7l4 4 4-4" fill="none" stroke="#c8c8c8" stroke-width="1.1"/></svg>
<div class="t" style="left:30px;top:829px;color:#9a9a9a;letter-spacing:-0.31px;">Graph</div>
<div style="left:178px;top:828.5px;width:16.5px;height:16.5px;background:#333;border-radius:3px;border:1px solid #2a2a2a;"></div>
<svg style="left:180px;top:830.5px;" width="13" height="13" viewBox="0 0 13 13"><path d="M3.5 0v12M0 9.5h12M3.5 9.5L11 3.5" fill="none" stroke="#d0d0d0" stroke-width="1.1"/></svg>
<div style="left:8px;top:848.5px;width:466px;height:2px;background:#2a2a2a;"></div>
<svg style="left:13.5px;top:858.0px;" width="11" height="11" viewBox="0 0 11 11"><circle cx="5.5" cy="5.5" r="4.3" fill="none" stroke="#858585" stroke-width="1.2"/></svg>
<div class="t" style="left:30px;top:856px;color:#e6e6e6;letter-spacing:0.08px;">Minimum</div>
<div style="left:177px;top:855.5px;width:94px;height:16px;background:#2a2a2a;border-radius:3px;"></div>
<div class="t" style="left:181.5px;top:856px;color:#5e5e5e;">#</div>
<div class="t" style="left:194px;top:856px;color:#e6e6e6;letter-spacing:-0.07px;">-400.0</div>
<svg style="left:262.5px;top:859.5px;" width="8" height="8" viewBox="0 0 8 8"><path d="M7.2 4L4.5 0.8H0.7v6.4H4.5z" fill="#c653e8"/></svg>
<svg style="left:13.5px;top:880.0px;" width="11" height="11" viewBox="0 0 11 11"><circle cx="5.5" cy="5.5" r="4.3" fill="none" stroke="#858585" stroke-width="1.2"/></svg>
<div class="t" style="left:30px;top:878px;color:#e6e6e6;letter-spacing:-0.13px;">Maximum</div>
<div style="left:153.5px;top:877.5px;width:15.5px;height:16px;background:#2b2b2b;border-radius:3px;"></div>
<div class="t" style="left:157px;top:878px;color:#e6e6e6;font-size:11px;font-weight:bold;">π</div>
<div style="left:177px;top:877.5px;width:94px;height:16px;background:#2a2a2a;border-radius:3px;"></div>
<div class="t" style="left:181.5px;top:878px;color:#5e5e5e;">#</div>
<div class="t" style="left:194px;top:878px;color:#e6e6e6;letter-spacing:-0.05px;">400.0</div>
<svg style="left:250.5px;top:881.5px;" width="8" height="8" viewBox="0 0 8 8"><path d="M0.3 4L3 0.8H6.8v6.4H3z" fill="#d9bf70"/></svg>
<svg style="left:262.5px;top:881.5px;" width="8" height="8" viewBox="0 0 8 8"><path d="M7.2 4L4.5 0.8H0.7v6.4H4.5z" fill="#c653e8"/></svg>
<div style="left:8px;top:898px;width:464px;height:19px;background:#484848;border-radius:2px;"></div>
<svg style="left:13.5px;top:902.0px;" width="11" height="11" viewBox="0 0 11 11"><circle cx="5.5" cy="5.5" r="4.4" fill="none" stroke="#e8e8e8" stroke-width="1.3"/><circle cx="5.5" cy="5.5" r="2.3" fill="#3aa6ee"/></svg>
<div class="t" style="left:30px;top:900px;color:#4aa8ea;letter-spacing:-0.16px;">Value Offset</div>
<div style="left:153.5px;top:899.5px;width:15.5px;height:16px;background:#2b2b2b;border-radius:3px;"></div>
<div class="t" style="left:157px;top:900px;color:#e6e6e6;font-size:11px;font-weight:bold;">π</div>
<div style="left:177px;top:899.5px;width:94px;height:16px;background:#2a2a2a;border-radius:3px;"></div>
<div class="t" style="left:181.5px;top:900px;color:#5e5e5e;"></div>
<div class="t" style="left:194px;top:900px;color:#8f8460;letter-spacing:-0.11px;">20.209</div>
<svg style="left:250.5px;top:903.5px;" width="8" height="8" viewBox="0 0 8 8"><path d="M0.3 4L3 0.8H6.8v6.4H3z" fill="#9a8a58"/></svg>
<svg style="left:262.5px;top:903.5px;" width="8" height="8" viewBox="0 0 8 8"><path d="M7.2 4L4.5 0.8H0.7v6.4H4.5z" fill="#9242ac"/></svg>
<svg style="left:13.5px;top:924.0px;" width="11" height="11" viewBox="0 0 11 11"><circle cx="5.5" cy="5.5" r="4.3" fill="none" stroke="#858585" stroke-width="1.2"/></svg>
<div class="t" style="left:30px;top:922px;color:#e6e6e6;letter-spacing:-0.51px;">Stagger</div>
<div style="left:177px;top:921.5px;width:94px;height:16px;background:#2a2a2a;border-radius:3px;"></div>
<div class="t" style="left:181.5px;top:922px;color:#5e5e5e;">#</div>
<div class="t" style="left:194px;top:922px;color:#d9bf70;letter-spacing:-0.11px;">20.209</div>
<svg style="left:250.5px;top:925.5px;" width="8" height="8" viewBox="0 0 8 8"><path d="M0.3 4L3 0.8H6.8v6.4H3z" fill="#d9bf70"/></svg>
<svg style="left:262.5px;top:925.5px;" width="8" height="8" viewBox="0 0 8 8"><path d="M7.2 4L4.5 0.8H0.7v6.4H4.5z" fill="#7a7a7a"/></svg>
<svg style="left:13.5px;top:946.0px;" width="11" height="11" viewBox="0 0 11 11"><circle cx="5.5" cy="5.5" r="4.3" fill="none" stroke="#858585" stroke-width="1.2"/></svg>
<div class="t" style="left:30px;top:944px;color:#e6e6e6;letter-spacing:-0.53px;">Separate Channels</div>
<div style="left:177px;top:943.5px;width:16px;height:16px;background:#2a2a2a;border-radius:3px;"></div>
<div style="left:8px;top:963.5px;width:466px;height:2px;background:#2a2a2a;"></div>
<svg style="left:13.5px;top:973.0px;" width="11" height="11" viewBox="0 0 11 11"><circle cx="5.5" cy="5.5" r="4.3" fill="none" stroke="#858585" stroke-width="1.2"/></svg>
<div class="t" style="left:30px;top:971px;color:#e6e6e6;letter-spacing:-0.23px;">Time Mode</div>
<div style="left:178px;top:971.5px;width:192px;height:14px;background:#505050;border-radius:3px;"></div>
<div class="t" style="left:180.5px;top:971px;letter-spacing:-0.25px;">Minutes (BPM)</div>
<svg style="left:357.0px;top:975.5px;" width="9" height="6" viewBox="0 0 9 6"><path d="M0.5 0.7l4 4 4-4" fill="none" stroke="#c8c8c8" stroke-width="1.1"/></svg>
<svg style="left:13.5px;top:995.0px;" width="11" height="11" viewBox="0 0 11 11"><circle cx="5.5" cy="5.5" r="4.3" fill="none" stroke="#858585" stroke-width="1.2"/></svg>
<div class="t" style="left:30px;top:993px;color:#e6e6e6;letter-spacing:-0.40px;">Frequency</div>
<div style="left:177px;top:992.5px;width:94px;height:16px;background:#2a2a2a;border-radius:3px;"></div>
<div class="t" style="left:181.5px;top:993px;color:#5e5e5e;">#</div>
<div class="t" style="left:194px;top:993px;color:#e6e6e6;">10.0</div>
<div style="left:6px;top:1012px;width:469px;height:12px;overflow:hidden">
</div>
<svg style="left:13.5px;top:1017.0px;" width="11" height="11" viewBox="0 0 11 11"><circle cx="5.5" cy="5.5" r="4.3" fill="none" stroke="#858585" stroke-width="1.2"/></svg>
<div class="t" style="left:30px;top:1015px;color:#e6e6e6;letter-spacing:-0.11px;">Time</div>
<div style="left:177px;top:1014.5px;width:94px;height:16px;background:#2a2a2a;border-radius:3px;"></div>
<div class="t" style="left:181.5px;top:1015px;color:#5e5e5e;">#</div>
<div class="t" style="left:194px;top:1015px;color:#d9bf70;letter-spacing:-0.05px;">244.0</div>
<svg style="left:250.5px;top:1018.5px;" width="8" height="8" viewBox="0 0 8 8"><path d="M0.3 4L3 0.8H6.8v6.4H3z" fill="#d9bf70"/></svg>
<svg style="left:262.5px;top:1018.5px;" width="8" height="8" viewBox="0 0 8 8"><path d="M7.2 4L4.5 0.8H0.7v6.4H4.5z" fill="#7a7a7a"/></svg>
<div style="left:273px;top:1014.5px;width:15.5px;height:15.5px;background:#2b2b2b;border-radius:3px;border:1px solid #222;"></div>
<svg style="left:276.5px;top:1018.0px;" width="9" height="9" viewBox="0 0 9 9"><path d="M1 1l7 7M8 1l-7 7" stroke="#d0d0d0" stroke-width="1.1"/></svg>
<div style="left:6px;top:1024px;width:482px;height:2px;background:#2a2a2a;"></div>
<div style="left:0px;top:1026px;width:494px;height:3px;background:#1e1e1e;"></div>
<div style="left:7px;top:418px;width:291px;height:33px;border:3px solid #b5e32a;"></div>
<div style="left:7.5px;top:890px;width:274px;height:34px;border:3px solid #b5e32a;"></div>
<svg style="left:145px;top:503px;" width="40" height="58" viewBox="0 0 40 58"><path d="M19.2 5.5L33.5 30h-6.3v23.5H11.5V30H5z" fill="none" stroke="#b5e32a" stroke-width="3" stroke-linejoin="miter"/></svg>
<svg style="left:170px;top:425px;" width="70" height="495" viewBox="0 0 70 495"><path d="M51.5 12.5C36 40 34.5 120 34 195S30 400 14.5 481.5" fill="none" stroke="#2a9fe6" stroke-width="1.2"/><circle cx="51.5" cy="12.5" r="5" fill="#2a9fe6"/><circle cx="14.5" cy="481.5" r="4.8" fill="#2a9fe6"/><path d="M10.5 488.5h8" stroke="#2a9fe6" stroke-width="1.2"/></svg>
<div style="left:494px;top:85px;width:30px;height:495px;background:#464646;"></div>
<div style="left:494px;top:85px;width:30px;height:10px;background:#3e3e3e;"></div>
<div style="left:504.5px;top:88.5px;width:2px;height:2px;background:#8a8a8a;"></div>
<div style="left:509.5px;top:88.5px;width:2px;height:2px;background:#8a8a8a;"></div>
<div style="left:514.5px;top:88.5px;width:2px;height:2px;background:#8a8a8a;"></div>
<div style="left:495px;top:96px;width:28px;height:28px;background:#141414;border-radius:4px;"></div>
<svg style="left:499.0px;top:100.0px;" width="20" height="20" viewBox="0 0 20 20"><path d="M5.5 1.5v15l3.6-3.2 2.2 5 2.6-1.1-2.2-5 4.8-.3z" fill="none" stroke="#2ecc71" stroke-width="1.3" stroke-linejoin="miter"/></svg>
<svg style="left:499.0px;top:130.0px;" width="20" height="20" viewBox="0 0 20 20"><path d="M4.5 0.5v19.5L19 12z" fill="#dedede"/></svg>
<svg style="left:499.0px;top:160.0px;" width="20" height="20" viewBox="0 0 20 20"><path d="M2 1.5l9.5 2.5 4.5 8-4 4-8-4.5z" fill="#dedede"/><path d="M2 1.5l6.5 6.5" stroke="#464646" stroke-width="1"/><circle cx="9" cy="9" r="1.5" fill="#464646"/><path d="M12.3 16.8l4.5-4.5 2 2-4.5 4.5z" fill="#dedede"/></svg>
<svg style="left:499.0px;top:190.0px;" width="20" height="20" viewBox="0 0 20 20"><path d="M1 19l1.2-4L13.5 3.7l2.8 2.8L5 17.8z" fill="#dedede"/><path d="M14.5 2.7l1.2-1.2a1.6 1.6 0 0 1 2.2 0l.6.6a1.6 1.6 0 0 1 0 2.2l-1.2 1.2z" fill="#dedede"/></svg>
<svg style="left:499.0px;top:220.0px;" width="20" height="20" viewBox="0 0 20 20"><path d="M0.5 5.5h12.5v3h1v6l-2.5 1.5h-11z" fill="#dedede"/><rect x="2.5" y="3" width="7" height="1.3" fill="#dedede"/><path d="M15 9.5l5-3.2v9.5l-5-3.2z" fill="#dedede"/><circle cx="3.3" cy="8" r="1.2" fill="#464646"/></svg>
<svg style="left:499.0px;top:250.0px;" width="20" height="20" viewBox="0 0 20 20"><path d="M2 18L18 2" stroke="#dedede" stroke-width="1.2"/></svg>
<svg style="left:499.0px;top:280.0px;" width="20" height="20" viewBox="0 0 20 20"><path d="M2.5 2.5h15v3.2h-5.8v12h-3.4v-12H2.5z" fill="#dedede"/></svg>
<svg style="left:499.0px;top:310.0px;" width="20" height="20" viewBox="0 0 20 20"><path d="M1.5 1.5v9.5l9-5z" fill="#dedede"/><path d="M11 2.5h7l1 16H1.5l.7-6" fill="none" stroke="#dedede" stroke-width="1.1" stroke-dasharray="3 2.2"/><rect x="0.5" y="17.5" width="2" height="2" fill="#dedede"/><rect x="17.5" y="17.5" width="2" height="2" fill="#dedede"/></svg>
<svg style="left:499.0px;top:340.0px;" width="20" height="20" viewBox="0 0 20 20"><rect x="3" y="3" width="14" height="14" fill="#dedede"/></svg>
<svg style="left:499.0px;top:370.0px;" width="20" height="20" viewBox="0 0 20 20"><circle cx="10" cy="10" r="8" fill="#dedede"/></svg>
<svg style="left:499.0px;top:400.0px;" width="20" height="20" viewBox="0 0 20 20"><polygon points="10.0,2.0 18.2,7.9 15.1,17.6 4.9,17.6 1.8,7.9" fill="#dedede"/></svg>
<svg style="left:499.0px;top:430.0px;" width="20" height="20" viewBox="0 0 20 20"><polygon points="10.0,1.3 12.2,7.7 19.0,7.9 13.6,12.0 15.6,18.5 10.0,14.6 4.4,18.5 6.4,12.0 1.0,7.9 7.8,7.7" fill="#dedede"/></svg>
<svg style="left:499.0px;top:460.0px;" width="20" height="20" viewBox="0 0 20 20"><path d="M6 4.2A7 7 0 1 1 6.5 16.3" fill="none" stroke="#dedede" stroke-width="2.6"/></svg>
<svg style="left:499.0px;top:490.0px;" width="20" height="20" viewBox="0 0 20 20"><path d="M10 0.5C10.8 6 14 9.2 19.5 10 14 10.8 10.8 14 10 19.5 9.2 14 6 10.8 0.5 10 6 9.2 9.2 6 10 0.5z" fill="#dedede"/></svg>
<svg style="left:499.0px;top:520.0px;" width="20" height="20" viewBox="0 0 20 20"><rect x="8.2" y="0.8" width="3.6" height="18.4" rx="0.8" fill="#dedede" transform="rotate(0 10 10)"/><rect x="8.2" y="0.8" width="3.6" height="18.4" rx="0.8" fill="#dedede" transform="rotate(45 10 10)"/><rect x="8.2" y="0.8" width="3.6" height="18.4" rx="0.8" fill="#dedede" transform="rotate(90 10 10)"/><rect x="8.2" y="0.8" width="3.6" height="18.4" rx="0.8" fill="#dedede" transform="rotate(135 10 10)"/><circle cx="10" cy="10" r="6.6" fill="#dedede"/><circle cx="10" cy="10" r="3" fill="#464646"/></svg>
<svg style="left:499.0px;top:561.0px;" width="20" height="20" viewBox="0 0 20 20"><path d="M4 5l5 5-5 5M10.5 5l5 5-5 5" fill="none" stroke="#a8a8a8" stroke-width="1.1"/></svg>
<div style="left:530px;top:85px;width:87px;height:22px;background:#464646;border-radius:4px 4px 0 0;"></div>
<div class="t" style="left:535px;top:89px;letter-spacing:-0.21px;">Composition 3</div>
<div style="left:530px;top:107px;width:1057px;height:451px;background:#000;"></div>
<svg style="left:693.5px;top:127px;" width="729" height="410" viewBox="0 0 729 410"><rect width="729" height="410" fill="#00aeff"/><circle cx="243.1" cy="204.9" r="38.6" fill="#fd4fbf"/><circle cx="254.5" cy="204.9" r="38.6" fill="#fd4fbf"/><circle cx="319.5" cy="204.9" r="38.6" fill="#fd4f5e"/><circle cx="289.5" cy="204.9" r="38.6" fill="#4ffdb2"/><circle cx="268.9" cy="204.9" r="38.6" fill="#4f9ffd"/><circle cx="416.2" cy="204.9" r="38.6" fill="#fd7650"/><circle cx="364.5" cy="204.9" r="38.6" fill="#fd4f5e"/><circle cx="336.3" cy="204.9" r="38.6" fill="#4f9ffd"/><circle cx="456.5" cy="204.9" r="38.6" fill="#8f4ffd"/><circle cx="497.1" cy="204.9" r="38.6" fill="#fd4fbf"/><circle cx="488.2" cy="204.9" r="38.6" fill="#fd4f5e"/><circle cx="442.9" cy="204.9" r="38.6" fill="#fd4fbf"/><text x="260.2" y="213.8" textLength="22.5" lengthAdjust="spacingAndGlyphs" font-family="Liberation Sans, sans-serif" font-size="23.5" fill="#fff" stroke="#fff" stroke-width="0.5">14</text><text x="327.7" y="213.8" textLength="24" lengthAdjust="spacingAndGlyphs" font-family="Liberation Sans, sans-serif" font-size="23.5" fill="#fff" stroke="#fff" stroke-width="0.5">10</text><text x="480.0" y="213.8" textLength="17.5" lengthAdjust="spacingAndGlyphs" font-family="Liberation Sans, sans-serif" font-size="23.5" fill="#fff" stroke="#fff" stroke-width="0.5">11</text><text x="434.5" y="213.8" textLength="22" lengthAdjust="spacingAndGlyphs" font-family="Liberation Sans, sans-serif" font-size="23.5" fill="#fff" stroke="#fff" stroke-width="0.5">12</text></svg>
<div class="t" style="left:569.5px;top:460px;letter-spacing:-0.45px"><span style="color:#ececec;-webkit-text-stroke:0.25px #ececec">Hold S</span> <span style="color:#4a4a4a">Direct Layer Selection</span></div>
<div class="t" style="left:569.5px;top:474px;letter-spacing:-0.45px"><span style="color:#ececec;-webkit-text-stroke:0.25px #ececec">Space</span> <span style="color:#4a4a4a">Play/ Stop</span></div>
<div class="t" style="left:569.5px;top:488px;letter-spacing:-0.45px"><span style="color:#ececec;-webkit-text-stroke:0.25px #ececec">Space + click + drag</span> <span style="color:#4a4a4a">Pan</span></div>
<div class="t" style="left:569.5px;top:502px;letter-spacing:-0.45px"><span style="color:#ececec;-webkit-text-stroke:0.25px #ececec">Alt + click + drag</span> <span style="color:#4a4a4a">Move Pivot Point</span></div>
<div class="t" style="left:569.5px;top:516px;letter-spacing:-0.45px"><span style="color:#ececec;-webkit-text-stroke:0.25px #ececec">Shift</span> <span style="color:#4a4a4a">Enable Snapping</span></div>
<div style="left:693.5px;top:127px;width:729px;height:410px;overflow:hidden">
<div class="t" style="left:-124.0px;top:333px;letter-spacing:-0.45px"><span style="color:#ececec;-webkit-text-stroke:0.25px #ececec">Hold S</span> <span style="color:#4a70cc">Direct Layer Selection</span></div>
<div class="t" style="left:-124.0px;top:347px;letter-spacing:-0.45px"><span style="color:#ececec;-webkit-text-stroke:0.25px #ececec">Space</span> <span style="color:#4a70cc">Play/ Stop</span></div>
<div class="t" style="left:-124.0px;top:361px;letter-spacing:-0.45px"><span style="color:#ececec;-webkit-text-stroke:0.25px #ececec">Space + click + drag</span> <span style="color:#4a70cc">Pan</span></div>
<div class="t" style="left:-124.0px;top:375px;letter-spacing:-0.45px"><span style="color:#ececec;-webkit-text-stroke:0.25px #ececec">Alt + click + drag</span> <span style="color:#4a70cc">Move Pivot Point</span></div>
<div class="t" style="left:-124.0px;top:389px;letter-spacing:-0.45px"><span style="color:#ececec;-webkit-text-stroke:0.25px #ececec">Shift</span> <span style="color:#4a70cc">Enable Snapping</span></div>
</div>
<div class="t" style="left:997.5px;top:536px;color:#e8e8e8;letter-spacing:-0.05px;">Viewport Quality: High</div>
<div style="left:530px;top:558px;width:1057px;height:22px;background:#464646;"></div>
<div style="left:535px;top:561.5px;width:78px;height:15.5px;background:#2b2b2b;border-radius:3px;"></div>
<div class="t" style="left:538.5px;top:562px;letter-spacing:-0.52px;">38%</div>
<svg style="left:600px;top:566.5px;" width="9" height="6" viewBox="0 0 9 6"><path d="M0.5 0.7l4 4 4-4" fill="none" stroke="#c8c8c8" stroke-width="1.1"/></svg>
<div style="left:866.5px;top:559.5px;width:98.5px;height:19px;background:#2d2d2d;border-radius:4px;box-shadow:inset 0 0 0 1px #202020;"></div>
<div style="left:885.7px;top:559.5px;width:1px;height:19px;background:#202020;"></div>
<div style="left:905.4px;top:559.5px;width:1px;height:19px;background:#202020;"></div>
<div style="left:925.1px;top:559.5px;width:1px;height:19px;background:#202020;"></div>
<div style="left:944.8px;top:559.5px;width:1px;height:19px;background:#202020;"></div>
<svg style="left:870.2px;top:563.5px;" width="13" height="11" viewBox="0 0 13 11"><path d="M1.6 0.5v10" stroke="#dcdcdc" stroke-width="1.8"/><path d="M11.5 0.5v10L4 5.5z" fill="#dcdcdc"/></svg>
<svg style="left:889.9000000000001px;top:563.5px;" width="13" height="11" viewBox="0 0 13 11"><path d="M8.5 0.5v10L1 5.5z" fill="#dcdcdc"/><path d="M11 0.5v10" stroke="#dcdcdc" stroke-width="1.8"/></svg>
<svg style="left:909.6px;top:563.5px;" width="13" height="11" viewBox="0 0 13 11"><path d="M2.5 0.5v10l8.5-5z" fill="#dcdcdc"/></svg>
<svg style="left:929.3000000000001px;top:563.5px;" width="13" height="11" viewBox="0 0 13 11"><path d="M1.6 0.5v10" stroke="#dcdcdc" stroke-width="1.8"/><path d="M4.5 0.5v10l7.5-5z" fill="#dcdcdc"/></svg>
<svg style="left:949.0px;top:563.5px;" width="13" height="11" viewBox="0 0 13 11"><path d="M1 0.5v10l7.5-5z" fill="#dcdcdc"/><path d="M11 0.5v10" stroke="#dcdcdc" stroke-width="1.8"/></svg>
<div style="left:971.5px;top:559.5px;width:19.5px;height:19px;background:#2d2d2d;border-radius:4px;box-shadow:inset 0 0 0 1px #202020;"></div>
<svg style="left:974px;top:562.5px;" width="15" height="12" viewBox="0 0 15 12"><path d="M8 3H1.6a1 1 0 0 0-1 1v5.6a1 1 0 0 0 1 1h11a1 1 0 0 0 1-1V6" fill="none" stroke="#dcdcdc" stroke-width="1.2"/><path d="M8 0.3l5 2.7-5 2.7z" fill="#dcdcdc"/></svg>
<div style="left:1232px;top:559.5px;width:36.5px;height:19px;background:#2d2d2d;border-radius:4px;box-shadow:inset 0 0 0 1px #202020;"></div>
<svg style="left:1234px;top:564px;" width="15" height="10" viewBox="0 0 15 10"><path d="M4 0.5h10.5v9H4L0.3 5z" fill="#dcdcdc"/><circle cx="4.6" cy="5" r="1.5" fill="#2b2b2b"/></svg>
<div class="t" style="left:1257.5px;top:562px;color:#a0a0a0;">0</div>
<div style="left:1272.5px;top:559.5px;width:30.5px;height:19px;background:#2d2d2d;border-radius:4px;box-shadow:inset 0 0 0 1px #202020;"></div>
<div style="left:1291px;top:559.5px;width:1px;height:19px;background:#202020;"></div>
<svg style="left:1294.5px;top:565.5px;" width="7" height="7" viewBox="0 0 7 7"><path d="M1 0.8v5.4l5-2.7z" fill="none" stroke="#a0a0a0" stroke-width="1"/></svg>
<svg style="left:1275px;top:563px;" width="14" height="12" viewBox="0 0 14 12"><path d="M0.5 4h3L7.5 0.5v11L3.5 8H0.5z" fill="#2ecc71"/><path d="M9.3 3.5a3.5 3.5 0 0 1 0 5M11 1.3a6 6 0 0 1 0 9.4" fill="none" stroke="#2ecc71" stroke-width="1.3"/></svg>
<div style="left:1308px;top:559.5px;width:30px;height:19px;background:#2d2d2d;border-radius:4px;box-shadow:inset 0 0 0 1px #202020;"></div>
<div style="left:1326px;top:559.5px;width:1px;height:19px;background:#202020;"></div>
<svg style="left:1329.5px;top:565.5px;" width="7" height="7" viewBox="0 0 7 7"><path d="M1 0.8v5.4l5-2.7z" fill="none" stroke="#a0a0a0" stroke-width="1"/></svg>
<div style="left:1309px;top:560.5px;width:17px;height:17px;background:#404040;border-radius:3px 0 0 3px;"></div>
<svg style="left:1310.5px;top:562.5px;" width="14" height="13" viewBox="0 0 14 13"><path d="M5.2 11.6L2.4 7.2A4.3 4.3 0 0 1 9.6 2.6L12.4 7" fill="none" stroke="#dcdcdc" stroke-width="2.3"/><path d="M4.3 10.2l1.8 2.8M11.5 5.6l1.8 2.8" stroke="#f4f4f4" stroke-width="2.3"/></svg>
<div style="left:1343px;top:559.5px;width:30px;height:19px;background:#2d2d2d;border-radius:4px;box-shadow:inset 0 0 0 1px #202020;"></div>
<div style="left:1361px;top:559.5px;width:1px;height:19px;background:#202020;"></div>
<svg style="left:1364.5px;top:565.5px;" width="7" height="7" viewBox="0 0 7 7"><path d="M1 0.8v5.4l5-2.7z" fill="none" stroke="#a0a0a0" stroke-width="1"/></svg>
<div style="left:1344px;top:560.5px;width:17px;height:17px;background:#404040;border-radius:3px 0 0 3px;"></div>
<svg style="left:1345px;top:562.5px;" width="14" height="13" viewBox="0 0 14 13"><path d="M4.5 0v13M9.5 0v13M0 4h14M0 9h14" stroke="#dcdcdc" stroke-width="1.2"/></svg>
<div style="left:1377.5px;top:559.5px;width:19.5px;height:19px;background:#2d2d2d;border-radius:4px;box-shadow:inset 0 0 0 1px #202020;"></div>
<svg style="left:1380px;top:563.5px;" width="15" height="11" viewBox="0 0 15 11"><rect x="0" y="0" width="4" height="11" fill="#2ecc71"/><rect x="5.5" y="0.7" width="8.8" height="4.6" fill="none" stroke="#2ecc71" stroke-width="1.4"/><rect x="5" y="7.5" width="10" height="3.5" fill="#2ecc71"/></svg>
<div style="left:1400px;top:559.5px;width:20px;height:19px;background:#2d2d2d;border-radius:4px;box-shadow:inset 0 0 0 1px #202020;"></div>
<div style="left:1401px;top:560.5px;width:18px;height:17px;background:#404040;border-radius:3px;"></div>
<svg style="left:1402.5px;top:564px;" width="15" height="10" viewBox="0 0 15 10"><path d="M0.5 0.5l4.5 4.5-4.5 4.5z" fill="#dcdcdc"/><path d="M5.5 0.5l4.5 4.5-4.5 4.5M10 0.5l4.5 4.5-4.5 4.5" fill="none" stroke="#dcdcdc" stroke-width="1.3"/></svg>
<div style="left:1423.5px;top:559.5px;width:30.5px;height:19px;background:#2d2d2d;border-radius:4px;box-shadow:inset 0 0 0 1px #202020;"></div>
<div style="left:1441.5px;top:559.5px;width:1px;height:19px;background:#202020;"></div>
<svg style="left:1445.0px;top:565.5px;" width="7" height="7" viewBox="0 0 7 7"><path d="M1 0.8v5.4l5-2.7z" fill="none" stroke="#a0a0a0" stroke-width="1"/></svg>
<div style="left:1424.5px;top:560.5px;width:17px;height:17px;background:#404040;border-radius:3px 0 0 3px;"></div>
<svg style="left:1426px;top:563px;" width="14" height="12" viewBox="0 0 14 12"><rect x="0.6" y="0.6" width="12.8" height="8.8" fill="#3a3a3a" stroke="#dcdcdc" stroke-width="1.2"/><rect x="0" y="10" width="14" height="2" fill="#dcdcdc"/></svg>
<div style="left:1458.5px;top:559.5px;width:30.0px;height:19px;background:#2d2d2d;border-radius:4px;box-shadow:inset 0 0 0 1px #202020;"></div>
<div style="left:1476.5px;top:559.5px;width:1px;height:19px;background:#202020;"></div>
<svg style="left:1480.0px;top:565.5px;" width="7" height="7" viewBox="0 0 7 7"><path d="M1 0.8v5.4l5-2.7z" fill="none" stroke="#a0a0a0" stroke-width="1"/></svg>
<div style="left:1459.5px;top:560.5px;width:17px;height:17px;background:#404040;border-radius:3px 0 0 3px;"></div>
<svg style="left:1461px;top:562.5px;" width="14" height="13" viewBox="0 0 14 13"><rect x="0.5" y="0.5" width="7.5" height="5" fill="none" stroke="#c8c8c8" stroke-width="1"/><path d="M10 3v5H3M12 5.5v5H5.5M14 8v4.5H8" fill="none" stroke="#a8a8a8" stroke-width="1"/></svg>
<div style="left:1493px;top:559.5px;width:31.5px;height:19px;background:#2d2d2d;border-radius:4px;box-shadow:inset 0 0 0 1px #202020;"></div>
<div style="left:1511.5px;top:559.5px;width:1px;height:19px;background:#202020;"></div>
<svg style="left:1515.0px;top:565.5px;" width="7" height="7" viewBox="0 0 7 7"><path d="M1 0.8v5.4l5-2.7z" fill="none" stroke="#a0a0a0" stroke-width="1"/></svg>
<div style="left:1494px;top:560.5px;width:17.5px;height:17px;background:#404040;border-radius:3px 0 0 3px;"></div>
<svg style="left:1495.5px;top:562px;" width="15" height="14" viewBox="0 0 15 14"><rect x="0" y="0" width="9" height="9" fill="#cfcfcf"/><rect x="5.5" y="5" width="8.5" height="8.5" fill="#404040" stroke="#e8e8e8" stroke-width="1.3"/></svg>
<div style="left:1528px;top:559.5px;width:31.5px;height:19px;background:#2d2d2d;border-radius:4px;box-shadow:inset 0 0 0 1px #202020;"></div>
<div style="left:1546.5px;top:559.5px;width:1px;height:19px;background:#202020;"></div>
<svg style="left:1550.0px;top:565.5px;" width="7" height="7" viewBox="0 0 7 7"><path d="M1 0.8v5.4l5-2.7z" fill="none" stroke="#a0a0a0" stroke-width="1"/></svg>
<svg style="left:1531px;top:562.5px;" width="13" height="13" viewBox="0 0 13 13"><rect x="0.5" y="0.5" width="3" height="3" fill="#2ecc71"/><rect x="6.5" y="0.5" width="3" height="3" fill="#2ecc71"/><rect x="3.5" y="3.5" width="3" height="3" fill="#2ecc71"/><rect x="9.5" y="3.5" width="3" height="3" fill="#2ecc71"/><rect x="0.5" y="6.5" width="3" height="3" fill="#2ecc71"/><rect x="6.5" y="6.5" width="3" height="3" fill="#2ecc71"/><rect x="3.5" y="9.5" width="3" height="3" fill="#2ecc71"/><rect x="9.5" y="9.5" width="3" height="3" fill="#2ecc71"/></svg>
<div style="left:1563px;top:559.5px;width:19.5px;height:19px;background:#2d2d2d;border-radius:4px;box-shadow:inset 0 0 0 1px #202020;"></div>
<svg style="left:1566.5px;top:562.5px;" width="13" height="13" viewBox="0 0 13 13"><rect x="5.2" y="0.3" width="2.6" height="12.4" rx="0.6" fill="#dcdcdc" transform="rotate(0 6.5 6.5)"/><rect x="5.2" y="0.3" width="2.6" height="12.4" rx="0.6" fill="#dcdcdc" transform="rotate(45 6.5 6.5)"/><rect x="5.2" y="0.3" width="2.6" height="12.4" rx="0.6" fill="#dcdcdc" transform="rotate(90 6.5 6.5)"/><rect x="5.2" y="0.3" width="2.6" height="12.4" rx="0.6" fill="#dcdcdc" transform="rotate(135 6.5 6.5)"/><circle cx="6.5" cy="6.5" r="4.4" fill="#dcdcdc"/><circle cx="6.5" cy="6.5" r="2.2" fill="#2b2b2b"/></svg>
<div style="left:1593px;top:85px;width:40px;height:22px;background:#464646;border-radius:4px 4px 0 0;"></div>
<div class="t" style="left:1598.5px;top:89px;letter-spacing:0.03px;">Color</div>
<div style="left:1633.5px;top:85px;width:70px;height:22px;background:#2b2b2b;border-radius:4px 4px 0 0;"></div>
<div class="t" style="left:1639.5px;top:89px;letter-spacing:-0.47px;">Add Layers</div>
<div style="left:1593px;top:107px;width:307px;height:376.5px;background:#464646;"></div>
<div style="left:1900px;top:107px;width:14px;height:376.5px;background:#2b2b2b;"></div>
<div style="left:1903px;top:153px;width:8.5px;height:302.5px;background:#555;border-radius:4px;"></div>
<div style="left:1593px;top:107px;width:307px;height:170px;overflow:hidden"><div style="left:53px;top:-47.4px;width:200px;height:200px;border-radius:50%;background:conic-gradient(from 90deg,#f00,#f0f,#00f,#0ff,#0f0,#ff0,#f00);-webkit-mask:radial-gradient(circle closest-side,transparent 74.1px,#000 75.1px,#000 99.4px,transparent 100.4px);mask:radial-gradient(circle closest-side,transparent 74.1px,#000 75.1px,#000 99.4px,transparent 100.4px)"></div></div>
<div style="left:1702px;top:116px;width:90px;height:90px;background:linear-gradient(to right,#000,rgba(0,0,0,0)),linear-gradient(to bottom,#fff,#ff00a4);"></div>
<svg style="left:1784px;top:171px;" width="14" height="14" viewBox="0 0 14 14"><circle cx="7" cy="7" r="5.8" fill="none" stroke="#f0f0f0" stroke-width="1.2"/></svg>
<svg style="left:1806.6px;top:207.3px;" width="14" height="14" viewBox="0 0 14 14"><circle cx="7" cy="7" r="5.8" fill="none" stroke="#f0f0f0" stroke-width="1.2"/></svg>
<div style="left:1600px;top:273px;width:22px;height:21.5px;background:#fd4fbf;border-radius:3px;"></div>
<div class="t" style="left:1625.5px;top:277px;letter-spacing:-0.19px;">Hot Pink</div>
<div class="btn" style="left:1871px;top:273px;width:21.5px;height:21.5px;"></div>
<svg style="left:1875px;top:277px;" width="14" height="14" viewBox="0 0 14 14"><path d="M1 13l1.2-3.2 5.8-5.8 2 2-5.8 5.8z" fill="#9a9a9a"/><path d="M8 2.5l1.5-1.5a1.4 1.4 0 0 1 2 0l1.5 1.5a1.4 1.4 0 0 1 0 2L11.5 6z" fill="#d8d8d8"/></svg>
<div style="left:1600px;top:300px;width:49.5px;height:17.5px;background:#464646;border-radius:3px;border:1px solid #5c5c5c;"></div>
<div class="t" style="left:1603px;top:302px;letter-spacing:-0.02px;">Hex</div>
<svg style="left:1636px;top:306.5px;" width="9" height="6" viewBox="0 0 9 6"><path d="M0.5 0.7l4 4 4-4" fill="none" stroke="#c8c8c8" stroke-width="1.1"/></svg>
<div style="left:1653.5px;top:298.5px;width:239px;height:21px;background:#2a2a2a;border-radius:3px;"></div>
<div class="t" style="left:1658px;top:302px;color:#5c5c5c;">#</div>
<div class="t" style="left:1670px;top:302px;letter-spacing:0.35px;">fd4fbf</div>
<div style="left:1600px;top:329.8px;width:233px;height:4px;background:#e2e2e2;border-radius:2px;"></div>
<svg style="left:1828px;top:326px;" width="12" height="12" viewBox="0 0 12 12"><circle cx="6" cy="6" r="5.5" fill="#6fc9a9"/><circle cx="6" cy="6" r="2" fill="#56a58a"/></svg>
<div style="left:1849px;top:324px;width:43.5px;height:15.5px;background:#2a2a2a;border-radius:3px;"></div>
<div class="t" style="left:1853px;top:325px;color:#5c5c5c;">A</div>
<div class="t" style="left:1866px;top:325px;letter-spacing:0.27px;">255</div>
<div style="left:1598px;top:347.5px;width:297.5px;height:20px;background:#2b2b2b;border-radius:4px 4px 0 0;"></div>
<div style="left:1598px;top:347.5px;width:149px;height:20px;background:#4a4a4a;border-radius:4px 4px 0 0;"></div>
<div class="t" style="left:1598px;top:350px;width:149px;text-align:center;letter-spacing:-0.46px;">Swatches</div>
<div class="t" style="left:1747px;top:350px;color:#a8a8a8;width:148px;text-align:center;letter-spacing:-0.14px;">Generator</div>
<div style="left:1598px;top:370.5px;width:256.5px;height:19px;background:#595959;border-radius:4px;"></div>
<div style="left:1599.5px;top:371.5px;width:61.5px;height:17px;background:#262626;border-radius:3px;"></div>
<svg style="left:1605px;top:375px;" width="12" height="10" viewBox="0 0 12 10"><path d="M1 0v10M4.2 0v10M7 0.3l3.5 9.5" stroke="#2ecc71" stroke-width="1.7" fill="none"/></svg>
<div class="t" style="left:1621px;top:373px;letter-spacing:-0.02px;">Library</div>
<svg style="left:1671px;top:375px;" width="11" height="10" viewBox="0 0 11 10"><path d="M0.5 0.5h4l1 1.5h5v7.5h-10z" fill="none" stroke="#d0d0d0" stroke-width="1"/><path d="M2.5 4.5h6M2.5 7h6" stroke="#d0d0d0" stroke-width="1.2"/></svg>
<div class="t" style="left:1686.5px;top:373px;letter-spacing:-0.05px;">Project</div>
<svg style="left:1738px;top:374.5px;" width="9" height="11" viewBox="0 0 9 11"><path d="M0.6 0.6h5l2.8 2.8v7h-7.8z" fill="none" stroke="#d0d0d0" stroke-width="1.1"/><path d="M5.6 0.6v2.8h2.8" fill="none" stroke="#d0d0d0" stroke-width="0.9"/></svg>
<div class="t" style="left:1752px;top:373px;letter-spacing:-0.84px;">Scene</div>
<svg style="left:1800.5px;top:375px;" width="11" height="10" viewBox="0 0 11 10"><path d="M2.5 0.6h6a2 2 0 0 1 2 2v2.4l-4.5 4.4h-3.5a2 2 0 0 1-2-2v-4.8a2 2 0 0 1 2-2z" fill="none" stroke="#d0d0d0" stroke-width="1.1"/><path d="M10.5 5h-3a1.5 1.5 0 0 0-1.5 1.5v3" fill="none" stroke="#d0d0d0" stroke-width="0.9"/></svg>
<div class="t" style="left:1816px;top:373px;letter-spacing:-0.53px;">Labels</div>
<div style="left:1858px;top:370.5px;width:37.5px;height:19px;background:#595959;border-radius:4px;"></div>
<div style="left:1859px;top:371.5px;width:16.5px;height:17px;background:#262626;border-radius:3px;"></div>
<svg style="left:1863px;top:375.5px;" width="9" height="9" viewBox="0 0 9 9"><g fill="#2ecc71"><rect x="0" y="0" width="3.6" height="3.6"/><rect x="5.2" y="0" width="3.6" height="3.6"/><rect x="0" y="5.2" width="3.6" height="3.6"/><rect x="5.2" y="5.2" width="3.6" height="3.6"/></g></svg>
<svg style="left:1880.5px;top:375.5px;" width="11" height="9" viewBox="0 0 11 9"><path d="M0 1h11M0 4.5h11M0 8h11" stroke="#d8d8d8" stroke-width="1.2"/></svg>
<div style="left:1598px;top:392px;width:275.5px;height:17px;background:#464646;border-radius:3px;border:1px solid #585858;"></div>
<div class="t" style="left:1601.5px;top:393px;letter-spacing:-0.07px;">new</div>
<svg style="left:1860.5px;top:398px;" width="9" height="6" viewBox="0 0 9 6"><path d="M0.5 0.7l4 4 4-4" fill="none" stroke="#c8c8c8" stroke-width="1.1"/></svg>
<div style="left:1880.5px;top:400.5px;width:2px;height:2px;background:#d8d8d8;"></div>
<div style="left:1885.1px;top:400.5px;width:2px;height:2px;background:#d8d8d8;"></div>
<div style="left:1889.7px;top:400.5px;width:2px;height:2px;background:#d8d8d8;"></div>
<div style="left:1598px;top:409px;width:297.5px;height:74.5px;background:#262626;"></div>
<div style="left:1600.0px;top:412px;width:18px;height:18px;background:#8f4ffd;border-radius:3px;"></div>
<div style="left:1621.95px;top:412px;width:18px;height:18px;background:#4f9ffd;border-radius:3px;"></div>
<div style="left:1643.9px;top:412px;width:18px;height:18px;background:#fd7650;border-radius:3px;"></div>
<div style="left:1665.85px;top:412px;width:18px;height:18px;background:#4ffdb2;border-radius:3px;"></div>
<div style="left:1687.8px;top:412px;width:18px;height:18px;background:#fd4f5e;border-radius:3px;"></div>
<div style="left:1709.75px;top:412px;width:18px;height:18px;background:#fd4fbf;border-radius:3px;"></div>
<div style="left:1593px;top:490px;width:38px;height:22px;background:#464646;border-radius:4px 4px 0 0;"></div>
<div class="t" style="left:1598.5px;top:494px;letter-spacing:0.03px;">Align</div>
<div style="left:1593px;top:512px;width:321px;height:68px;background:#464646;"></div>
<div class="t" style="left:1601.5px;top:525px;letter-spacing:-0.11px;">Alignment</div>
<div class="t" style="left:1601.5px;top:553px;letter-spacing:0.17px;">Distribution</div>
<div style="left:1790px;top:522.3px;width:53.5px;height:17.5px;background:#2d2d2d;border-radius:4px;box-shadow:inset 0 0 0 1px #202020;"></div>
<div style="left:1807.5px;top:522.3px;width:1px;height:17.5px;background:#202020;"></div>
<div style="left:1825.5px;top:522.3px;width:1px;height:17.5px;background:#202020;"></div>
<div style="left:1852px;top:522.3px;width:53.5px;height:17.5px;background:#2d2d2d;border-radius:4px;box-shadow:inset 0 0 0 1px #202020;"></div>
<div style="left:1869.5px;top:522.3px;width:1px;height:17.5px;background:#202020;"></div>
<div style="left:1887.5px;top:522.3px;width:1px;height:17.5px;background:#202020;"></div>
<div style="left:1790px;top:550.3px;width:53.5px;height:17.5px;background:#2d2d2d;border-radius:4px;box-shadow:inset 0 0 0 1px #202020;"></div>
<div style="left:1807.5px;top:550.3px;width:1px;height:17.5px;background:#202020;"></div>
<div style="left:1825.5px;top:550.3px;width:1px;height:17.5px;background:#202020;"></div>
<svg style="left:1792px;top:524.3px;" width="14" height="14" viewBox="0 0 14 14"><path d="M2.5 1v12" stroke="#e6e6e6" stroke-width="1.2"/><path d="M5 4.5h5M5 9.5h8" stroke="#e6e6e6" stroke-width="2"/></svg>
<svg style="left:1810px;top:524.3px;" width="14" height="14" viewBox="0 0 14 14"><path d="M7 1v12" stroke="#e6e6e6" stroke-width="1.2"/><path d="M3.5 4.5h7M1.5 9.5h11" stroke="#e6e6e6" stroke-width="2"/></svg>
<svg style="left:1828px;top:524.3px;" width="14" height="14" viewBox="0 0 14 14"><path d="M11.5 1v12" stroke="#e6e6e6" stroke-width="1.2"/><path d="M4 4.5h5M1 9.5h8" stroke="#e6e6e6" stroke-width="2"/></svg>
<svg style="left:1854px;top:524.3px;" width="14" height="14" viewBox="0 0 14 14"><path d="M1 2h12" stroke="#e6e6e6" stroke-width="1.2"/><path d="M4.5 4v9M9.5 4v5" stroke="#e6e6e6" stroke-width="2"/></svg>
<svg style="left:1872px;top:524.3px;" width="14" height="14" viewBox="0 0 14 14"><path d="M1 7h12" stroke="#e6e6e6" stroke-width="1.2"/><path d="M4.5 1.5v11M9.5 3.5v7" stroke="#e6e6e6" stroke-width="2"/></svg>
<svg style="left:1890px;top:524.3px;" width="14" height="14" viewBox="0 0 14 14"><path d="M1 12.5h12" stroke="#e6e6e6" stroke-width="1.2"/><path d="M4.5 6v5M9.5 2v9" stroke="#e6e6e6" stroke-width="2"/></svg>
<svg style="left:1792px;top:552.3px;" width="14" height="14" viewBox="0 0 14 14"><path d="M2.5 1v12M11.5 1v12" stroke="#e6e6e6" stroke-width="1"/><path d="M7 3v8" stroke="#e6e6e6" stroke-width="2"/></svg>
<svg style="left:1810px;top:552.3px;" width="14" height="14" viewBox="0 0 14 14"><path d="M1 2.5h12M1 11.5h12" stroke="#e6e6e6" stroke-width="1"/><path d="M3 7h8" stroke="#e6e6e6" stroke-width="2"/></svg>
<svg style="left:1828px;top:552.3px;" width="14" height="14" viewBox="0 0 14 14"><path d="M0.6 3V1.8A1.2 1.2 0 0 1 1.8 0.6H3M11 0.6h1.2a1.2 1.2 0 0 1 1.2 1.2V3M13.4 11v1.2a1.2 1.2 0 0 1-1.2 1.2H11M3 13.4H1.8a1.2 1.2 0 0 1-1.2-1.2V11" fill="none" stroke="#e6e6e6" stroke-width="1.1"/><path d="M3.5 11V8M7 9V6M10.5 7V3.8" stroke="#e6e6e6" stroke-width="1.8"/></svg>
<div style="left:494px;top:586px;width:89.5px;height:22px;background:#464646;border-radius:4px 4px 0 0;"></div>
<div class="t" style="left:499.5px;top:590px;letter-spacing:-0.40px;">Scene Window</div>
<div style="left:584.5px;top:586px;width:100px;height:22px;background:#2b2b2b;border-radius:4px 4px 0 0;"></div>
<div class="t" style="left:589.5px;top:590px;letter-spacing:-0.27px;">JavaScript Editor</div>
<div style="left:685.5px;top:586px;width:112px;height:22px;background:#2b2b2b;border-radius:4px 4px 0 0;"></div>
<div class="t" style="left:690.5px;top:590px;letter-spacing:-0.42px;">Dependency Graph</div>
<div style="left:494px;top:608px;width:1420px;height:22px;background:#2d2d2d;"></div>
<div style="left:1439px;top:610px;width:470px;height:20px;background:#464646;border-radius:4px 4px 0 0;"></div>
<div class="t" style="left:494px;top:612px;color:#b4b4b4;width:459px;text-align:center;letter-spacing:-0.21px;">Composition 1</div>
<svg style="left:952px;top:615.5px;" width="8" height="8" viewBox="0 0 8 8"><path d="M0.7 0.7l6.6 6.6M7.3 0.7L0.7 7.3" stroke="#b8b8b8" stroke-width="1"/></svg>
<div style="left:969px;top:615.5px;width:1px;height:10px;background:#9a9a9a;"></div>
<div class="t" style="left:973px;top:612px;color:#b4b4b4;width:441px;text-align:center;letter-spacing:-0.23px;">Composition 2</div>
<svg style="left:1422px;top:615.5px;" width="8" height="8" viewBox="0 0 8 8"><path d="M0.7 0.7l6.6 6.6M7.3 0.7L0.7 7.3" stroke="#b8b8b8" stroke-width="1"/></svg>
<div class="t" style="left:1439px;top:612px;width:449px;text-align:center;letter-spacing:-0.21px;">Composition 3</div>
<svg style="left:1892px;top:615.5px;" width="8" height="8" viewBox="0 0 8 8"><path d="M0.7 0.7l6.6 6.6M7.3 0.7L0.7 7.3" stroke="#b8b8b8" stroke-width="1"/></svg>
<div style="left:494px;top:630px;width:490px;height:42px;background:#464646;"></div>
<div style="left:496px;top:632.5px;width:279.5px;height:19.5px;background:#262626;border-radius:10px;"></div>
<svg style="left:500px;top:636px;" width="13" height="13" viewBox="0 0 13 13"><circle cx="5.5" cy="5.5" r="4.2" fill="none" stroke="#d0d0d0" stroke-width="1.3"/><path d="M8.7 8.7l3 3" stroke="#d0d0d0" stroke-width="2"/></svg>
<div class="t" style="left:520px;top:635px;color:#8c8c8c;letter-spacing:-0.44px;">Enter a layer name</div>
<div class="btn" style="left:779px;top:633px;width:18.5px;height:18.5px;"></div>
<svg style="left:782px;top:636px;" width="13" height="13" viewBox="0 0 13 13"><path d="M6 1v10M1 6h10" stroke="#e8e8e8" stroke-width="1.6"/><path d="M13 10v3h-3z" fill="#6fd0aa"/></svg>
<div class="btn" style="left:822.5px;top:633px;width:18.5px;height:18.5px;"></div>
<div class="btn" style="left:844.5px;top:633px;width:18.5px;height:18.5px;"></div>
<div class="btn" style="left:866.5px;top:633px;width:18.5px;height:18.5px;"></div>
<svg style="left:825px;top:635.5px;" width="14" height="14" viewBox="0 0 14 14"><circle cx="8.5" cy="5" r="4" fill="#d0d0d0"/><path d="M2 8c1 3 4 4 7 3M1.5 11c2 2 5 2 7.5 1" fill="none" stroke="#8a8a8a" stroke-width="1.3"/></svg>
<svg style="left:847px;top:635.5px;" width="14" height="14" viewBox="0 0 14 14"><g fill="#dcdcdc"><rect x="1" y="1" width="1.8" height="1.8"/><rect x="6" y="1" width="1.8" height="1.8"/><rect x="1" y="6" width="1.8" height="1.8"/><rect x="11" y="2" width="1.5" height="1.5"/></g><path d="M8 5v7M4.5 8.5h7" stroke="#e8e8e8" stroke-width="1.5"/><path d="M14 11v3h-3z" fill="#6fd0aa"/></svg>
<svg style="left:869px;top:635.5px;" width="14" height="14" viewBox="0 0 14 14"><path d="M0 2.5h14M0 7h14M0 11.5h14" stroke="#dcdcdc" stroke-width="1" stroke-dasharray="3.5 1.5"/><circle cx="9" cy="2.5" r="1.7" fill="#2b2b2b" stroke="#dcdcdc"/><circle cx="5" cy="7" r="1.7" fill="#2b2b2b" stroke="#dcdcdc"/><circle cx="9" cy="11.5" r="1.7" fill="#2b2b2b" stroke="#dcdcdc"/><path d="M14 11v3h-3z" fill="#6fd0aa"/></svg>
<div style="left:888px;top:633px;width:93.5px;height:18.5px;background:#2a2a2a;border-radius:3px;"></div>
<div class="t" style="left:893px;top:635px;color:#5c5c5c;">F</div>
<div class="t" style="left:905.5px;top:635px;letter-spacing:0.12px;">244</div>
<svg style="left:500px;top:656px;" width="10" height="13" viewBox="0 0 10 13"><rect x="0.5" y="5.5" width="9" height="7" fill="#d0d0d0"/><path d="M2.5 5.5v-2a2.5 2.5 0 0 1 5 0v2" fill="none" stroke="#d0d0d0" stroke-width="1.3"/><rect x="4.2" y="8" width="1.6" height="2.2" fill="#464646"/></svg>
<svg style="left:517px;top:657.5px;" width="14" height="10" viewBox="0 0 14 10"><path d="M0.6 5C3 1.2 11 1.2 13.4 5 11 8.8 3 8.8 0.6 5z" fill="none" stroke="#d0d0d0" stroke-width="1.1"/><circle cx="7" cy="5" r="2.2" fill="#d0d0d0"/></svg>
<svg style="left:536.5px;top:656px;" width="13" height="13" viewBox="0 0 13 13"><path d="M6.5 0.7l5.5 2.8v6l-5.5 2.8-5.5-2.8v-6z M1 3.5l5.5 2.8 5.5-2.8M6.5 6.3v6" fill="none" stroke="#d0d0d0" stroke-width="1.1"/></svg>
<svg style="left:556px;top:657px;" width="14" height="11" viewBox="0 0 14 11"><path d="M0.5 3.5h2.8L7 0.5v10L3.3 7.5H0.5z" fill="#d0d0d0"/><path d="M8.8 3a3.2 3.2 0 0 1 0 5M10.8 1a5.8 5.8 0 0 1 0 9" fill="none" stroke="#d0d0d0" stroke-width="1.1"/></svg>
<svg style="left:574.5px;top:655.5px;" width="13" height="13" viewBox="0 0 13 13"><path d="M1 12l1-3 5.5-5.5 2 2L4 11z" fill="none" stroke="#a8a8a8" stroke-width="1"/><path d="M7.5 2.5l1.5-1.5a1.3 1.3 0 0 1 1.9 0l1.1 1.1a1.3 1.3 0 0 1 0 1.9L10.5 5.5z" fill="#d0d0d0"/></svg>
<svg style="left:593px;top:657.5px;" width="15" height="10" viewBox="0 0 15 10"><path d="M4 0.5h10.5v9H4L0.3 5z" fill="#dcdcdc"/><circle cx="4.6" cy="5" r="1.5" fill="#464646"/></svg>
<div class="t" style="left:649px;top:656px;letter-spacing:-0.55px;">Name</div>
<div style="left:494px;top:672px;width:476px;height:220px;background:#3a3a3a;"></div>
<div style="left:494px;top:892px;width:490px;height:70.5px;background:#2b2b2b;"></div>
<div style="left:970px;top:672px;width:14px;height:290.5px;background:#2d2d2d;"></div>
<div style="left:972px;top:673px;width:10px;height:288px;background:#4f4f4f;border-radius:5px;"></div>
<div style="left:496px;top:674.0px;width:18px;height:18px;background:#2e2e2e;border-radius:2px;"></div>
<div style="left:515px;top:674.0px;width:18px;height:18px;background:#2e2e2e;border-radius:2px;"></div>
<svg style="left:518px;top:676.7px;" width="12" height="12" viewBox="0 0 12 12"><circle cx="6" cy="6.3" r="4.8" fill="none" stroke="#dcdcdc" stroke-width="1.2"/><path d="M3.6 6.2l2 2.2 4.6-5.6" fill="none" stroke="#dcdcdc" stroke-width="1.3"/></svg>
<div style="left:573px;top:675.0px;width:16px;height:16px;background:#6ee09a;border-radius:2.5px;"></div>
<svg style="left:593px;top:678.0px;" width="15" height="10" viewBox="0 0 15 10"><path d="M4 0.5h10.5v9H4L0.3 5z" fill="#dcdcdc"/><circle cx="4.6" cy="5" r="1.5" fill="#3a3a3a"/></svg>
<div style="left:610px;top:674.0px;width:32px;height:18px;background:#333;border-radius:2px;"></div>
<svg style="left:613px;top:680.0px;" width="9" height="6" viewBox="0 0 9 6"><path d="M0.5 0.7l4 4 4-4" fill="none" stroke="#9a9a9a" stroke-width="1.1"/></svg>
<svg style="left:648px;top:675.5px;" width="15" height="15" viewBox="0 0 15 15"><rect x="0" y="5" width="8" height="8.5" fill="#9cc4f4"/><path d="M6 1h8M6 4h8M9.5 7h4.5" stroke="#dcdcdc" stroke-width="1.2"/><rect x="5" y="0" width="1" height="8" fill="#3a3a3a"/></svg>
<div class="t" style="left:667.0px;top:676px;letter-spacing:-0.00px;">Color Array</div>
<div style="left:930px;top:675.5px;width:20.5px;height:15.3px;background:#2e2e2e;border-radius:3px;"></div>
<div style="left:940px;top:675.5px;width:1px;height:15.3px;background:#383838;"></div>
<svg style="left:931.5px;top:679.0px;" width="8" height="8" viewBox="0 0 8 8"><path d="M0.3 4L3 0.8H6.8v6.4H3z" fill="#9a8a58"/></svg>
<svg style="left:941.5px;top:679.0px;" width="8" height="8" viewBox="0 0 8 8"><path d="M7.2 4L4.5 0.8H0.7v6.4H4.5z" fill="#8e48ac"/></svg>
<svg style="left:955.5px;top:678.0px;" width="10" height="10" viewBox="0 0 10 10"><circle cx="5" cy="5" r="4" fill="none" stroke="#8a8a8a" stroke-width="1.1"/></svg>
<div style="left:496px;top:696.0px;width:18px;height:18px;background:#2e2e2e;border-radius:2px;"></div>
<div style="left:515px;top:696.0px;width:18px;height:18px;background:#2e2e2e;border-radius:2px;"></div>
<svg style="left:518px;top:698.7px;" width="12" height="12" viewBox="0 0 12 12"><circle cx="6" cy="6.3" r="4.8" fill="none" stroke="#dcdcdc" stroke-width="1.2"/><path d="M3.6 6.2l2 2.2 4.6-5.6" fill="none" stroke="#dcdcdc" stroke-width="1.3"/></svg>
<div style="left:573px;top:697.0px;width:16px;height:16px;background:#ccf07a;border-radius:2.5px;"></div>
<svg style="left:593px;top:700.0px;" width="15" height="10" viewBox="0 0 15 10"><path d="M4 0.5h10.5v9H4L0.3 5z" fill="#dcdcdc"/><circle cx="4.6" cy="5" r="1.5" fill="#3a3a3a"/></svg>
<svg style="left:667px;top:697.5px;" width="15" height="15" viewBox="0 0 15 15"><g stroke="#8fd68a" stroke-width="1.1"><path d="M1 1l3 3M4 1l-3 3M8 2l3 3M11 2l-3 3M1 8l3 3M4 8l-3 3M9 9l3 3M12 9l-3 3"/></g></svg>
<div class="t" style="left:686.5px;top:698px;letter-spacing:-0.38px;">Random [Index]</div>
<div style="left:930px;top:697.5px;width:20.5px;height:15.3px;background:#2e2e2e;border-radius:3px;"></div>
<div style="left:940px;top:697.5px;width:1px;height:15.3px;background:#383838;"></div>
<svg style="left:931.5px;top:701.0px;" width="8" height="8" viewBox="0 0 8 8"><path d="M0.3 4L3 0.8H6.8v6.4H3z" fill="#686868"/></svg>
<svg style="left:941.5px;top:701.0px;" width="8" height="8" viewBox="0 0 8 8"><path d="M7.2 4L4.5 0.8H0.7v6.4H4.5z" fill="#8e48ac"/></svg>
<svg style="left:955.5px;top:700.0px;" width="10" height="10" viewBox="0 0 10 10"><circle cx="5" cy="5" r="4" fill="none" stroke="#8a8a8a" stroke-width="1.1"/></svg>
<div style="left:495px;top:717.0px;width:473px;height:19.5px;background:#525646;border-radius:2px 3px 3px 2px;"></div>
<div style="left:496px;top:718.0px;width:18px;height:18px;background:#2e2e2e;border-radius:2px;"></div>
<div style="left:515px;top:718.0px;width:18px;height:18px;background:#2e2e2e;border-radius:2px;"></div>
<svg style="left:518px;top:720.7px;" width="12" height="12" viewBox="0 0 12 12"><circle cx="6" cy="6.3" r="4.8" fill="none" stroke="#dcdcdc" stroke-width="1.2"/><path d="M3.6 6.2l2 2.2 4.6-5.6" fill="none" stroke="#dcdcdc" stroke-width="1.3"/></svg>
<div style="left:573px;top:719.0px;width:16px;height:16px;background:#ccf07a;border-radius:2.5px;"></div>
<svg style="left:593px;top:722.0px;" width="15" height="10" viewBox="0 0 15 10"><path d="M4 0.5h10.5v9H4L0.3 5z" fill="#dcdcdc"/><circle cx="4.6" cy="5" r="1.5" fill="#3a3a3a"/></svg>
<svg style="left:646px;top:719.5px;" width="18" height="15" viewBox="0 0 18 15"><path d="M0.5 7C2 1 3.5 1 5 6.5S8 12 9.5 6.5 12.5 1 14 6.5 16 11 17.5 8" fill="none" stroke="#7acc90" stroke-width="1.2"/></svg>
<div class="t" style="left:667.0px;top:720px;letter-spacing:-0.24px;">Oscillator [Position.Z] Cosine</div>
<div style="left:930px;top:719.5px;width:20.5px;height:15.3px;background:#2e2e2e;border-radius:3px;"></div>
<div style="left:940px;top:719.5px;width:1px;height:15.3px;background:#383838;"></div>
<svg style="left:931.5px;top:723.0px;" width="8" height="8" viewBox="0 0 8 8"><path d="M0.3 4L3 0.8H6.8v6.4H3z" fill="#e6cc78"/></svg>
<svg style="left:941.5px;top:723.0px;" width="8" height="8" viewBox="0 0 8 8"><path d="M7.2 4L4.5 0.8H0.7v6.4H4.5z" fill="#8e48ac"/></svg>
<svg style="left:955.5px;top:722.0px;" width="10" height="10" viewBox="0 0 10 10"><circle cx="5" cy="5" r="4" fill="none" stroke="#8a8a8a" stroke-width="1.1"/></svg>
<div style="left:496px;top:740.0px;width:18px;height:18px;background:#2e2e2e;border-radius:2px;"></div>
<div style="left:515px;top:740.0px;width:18px;height:18px;background:#2e2e2e;border-radius:2px;"></div>
<svg style="left:518px;top:742.7px;" width="12" height="12" viewBox="0 0 12 12"><circle cx="6" cy="6.3" r="4.8" fill="none" stroke="#6a6a6a" stroke-width="1.2"/><path d="M3.6 6.2l2 2.2 4.6-5.6" fill="none" stroke="#6a6a6a" stroke-width="1.3"/></svg>
<div style="left:573px;top:741.0px;width:16px;height:16px;background:#869454;border-radius:2.5px;"></div>
<svg style="left:593px;top:744.0px;" width="15" height="10" viewBox="0 0 15 10"><path d="M4 0.5h10.5v9H4L0.3 5z" fill="#7a7a7a"/><circle cx="4.6" cy="5" r="1.5" fill="#3a3a3a"/></svg>
<svg style="left:646px;top:741.5px;" width="18" height="15" viewBox="0 0 18 15"><path d="M0.5 7C2 1 3.5 1 5 6.5S8 12 9.5 6.5 12.5 1 14 6.5 16 11 17.5 8" fill="none" stroke="#3f8a62" stroke-width="1.4"/></svg>
<div class="t" style="left:667.0px;top:742px;color:#8a8a8a;letter-spacing:-0.24px;text-decoration:line-through;">Oscillator [Position.X] Sine Driver</div>
<svg style="left:913px;top:744.5px;" width="9" height="9" viewBox="0 0 9 9"><circle cx="4.5" cy="4.5" r="3.8" fill="none" stroke="#8a8a8a" stroke-width="1"/><path d="M1.8 7.2L7.2 1.8" stroke="#8a8a8a" stroke-width="1"/></svg>
<div style="left:930px;top:741.5px;width:20.5px;height:15.3px;background:#2e2e2e;border-radius:3px;"></div>
<div style="left:940px;top:741.5px;width:1px;height:15.3px;background:#383838;"></div>
<div style="left:941px;top:741.5px;width:9.5px;height:15.3px;border:1px solid #c060e0;border-radius:2px;"></div>
<svg style="left:931.5px;top:745.0px;" width="8" height="8" viewBox="0 0 8 8"><path d="M0.3 4L3 0.8H6.8v6.4H3z" fill="#d9bf70"/></svg>
<svg style="left:941.5px;top:745.0px;" width="8" height="8" viewBox="0 0 8 8"><path d="M7.2 4L4.5 0.8H0.7v6.4H4.5z" fill="#d060f0"/></svg>
<svg style="left:955.5px;top:744.0px;" width="10" height="10" viewBox="0 0 10 10"><circle cx="5" cy="5" r="4" fill="none" stroke="#8a8a8a" stroke-width="1.1"/></svg>
<div style="left:496px;top:762.0px;width:18px;height:18px;background:#2e2e2e;border-radius:2px;"></div>
<div style="left:515px;top:762.0px;width:18px;height:18px;background:#2e2e2e;border-radius:2px;"></div>
<svg style="left:518px;top:764.7px;" width="12" height="12" viewBox="0 0 12 12"><circle cx="6" cy="6.3" r="4.8" fill="none" stroke="#dcdcdc" stroke-width="1.2"/><path d="M3.6 6.2l2 2.2 4.6-5.6" fill="none" stroke="#dcdcdc" stroke-width="1.3"/></svg>
<div style="left:573px;top:763.0px;width:16px;height:16px;background:#6a90e8;border-radius:2.5px;"></div>
<svg style="left:593px;top:766.0px;" width="15" height="10" viewBox="0 0 15 10"><path d="M4 0.5h10.5v9H4L0.3 5z" fill="#dcdcdc"/><circle cx="4.6" cy="5" r="1.5" fill="#3a3a3a"/></svg>
<svg style="left:648px;top:763.5px;" width="15" height="15" viewBox="0 0 15 15"><rect x="0.5" y="4" width="8.5" height="9.5" fill="#9cc4f4"/><rect x="4" y="6.5" width="1.4" height="5" fill="#3a3a3a"/><path d="M11 0v5M8.5 2.5h5" stroke="#e8e8e8" stroke-width="1.2"/><rect x="12.5" y="6" width="1.5" height="1.5" fill="#dcdcdc"/></svg>
<div class="t" style="left:667.0px;top:764px;letter-spacing:-0.19px;">Index Context [Number]</div>
<div style="left:930px;top:763.5px;width:20.5px;height:15.3px;background:#2e2e2e;border-radius:3px;"></div>
<div style="left:940px;top:763.5px;width:1px;height:15.3px;background:#383838;"></div>
<svg style="left:931.5px;top:767.0px;" width="8" height="8" viewBox="0 0 8 8"><path d="M0.3 4L3 0.8H6.8v6.4H3z" fill="#686868"/></svg>
<svg style="left:941.5px;top:767.0px;" width="8" height="8" viewBox="0 0 8 8"><path d="M7.2 4L4.5 0.8H0.7v6.4H4.5z" fill="#8e48ac"/></svg>
<svg style="left:955.5px;top:766.0px;" width="10" height="10" viewBox="0 0 10 10"><circle cx="5" cy="5" r="4" fill="none" stroke="#8a8a8a" stroke-width="1.1"/></svg>
<div style="left:496px;top:784.0px;width:18px;height:18px;background:#2e2e2e;border-radius:2px;"></div>
<div style="left:515px;top:784.0px;width:18px;height:18px;background:#2e2e2e;border-radius:2px;"></div>
<svg style="left:518px;top:786.7px;" width="12" height="12" viewBox="0 0 12 12"><circle cx="6" cy="6.3" r="4.8" fill="none" stroke="#dcdcdc" stroke-width="1.2"/><path d="M3.6 6.2l2 2.2 4.6-5.6" fill="none" stroke="#dcdcdc" stroke-width="1.3"/></svg>
<div style="left:573px;top:785.0px;width:16px;height:16px;background:#6a90e8;border-radius:2.5px;"></div>
<svg style="left:593px;top:788.0px;" width="15" height="10" viewBox="0 0 15 10"><path d="M4 0.5h10.5v9H4L0.3 5z" fill="#dcdcdc"/><circle cx="4.6" cy="5" r="1.5" fill="#3a3a3a"/></svg>
<svg style="left:648px;top:785.5px;" width="15" height="15" viewBox="0 0 15 15"><path d="M0 11.5h14M0 13.5h3M4.5 13.5h3M9 13.5h5" stroke="#c0d4f8" stroke-width="1"/><text x="0" y="9" font-family="Liberation Sans, sans-serif" font-size="9" fill="#c0d4f8">abc</text></svg>
<div class="t" style="left:667.0px;top:786px;letter-spacing:-0.21px;">String Generator [String]</div>
<div style="left:930px;top:785.5px;width:20.5px;height:15.3px;background:#2e2e2e;border-radius:3px;"></div>
<div style="left:940px;top:785.5px;width:1px;height:15.3px;background:#383838;"></div>
<svg style="left:931.5px;top:789.0px;" width="8" height="8" viewBox="0 0 8 8"><path d="M0.3 4L3 0.8H6.8v6.4H3z" fill="#9a8a58"/></svg>
<svg style="left:941.5px;top:789.0px;" width="8" height="8" viewBox="0 0 8 8"><path d="M7.2 4L4.5 0.8H0.7v6.4H4.5z" fill="#8e48ac"/></svg>
<svg style="left:955.5px;top:788.0px;" width="10" height="10" viewBox="0 0 10 10"><circle cx="5" cy="5" r="4" fill="none" stroke="#8a8a8a" stroke-width="1.1"/></svg>
<div style="left:496px;top:806.0px;width:18px;height:18px;background:#2e2e2e;border-radius:2px;"></div>
<div style="left:515px;top:806.0px;width:18px;height:18px;background:#2e2e2e;border-radius:2px;"></div>
<svg style="left:518px;top:808.7px;" width="12" height="12" viewBox="0 0 12 12"><circle cx="6" cy="6.3" r="4.8" fill="none" stroke="#dcdcdc" stroke-width="1.2"/><path d="M3.6 6.2l2 2.2 4.6-5.6" fill="none" stroke="#dcdcdc" stroke-width="1.3"/></svg>
<div style="left:573px;top:807.0px;width:16px;height:16px;background:#c0ee7a;border-radius:2.5px;"></div>
<svg style="left:593px;top:810.0px;" width="15" height="10" viewBox="0 0 15 10"><path d="M4 0.5h10.5v9H4L0.3 5z" fill="#dcdcdc"/><circle cx="4.6" cy="5" r="1.5" fill="#3a3a3a"/></svg>
<svg style="left:648px;top:807.5px;" width="15" height="15" viewBox="0 0 15 15"><path d="M2.5 1v11.5H14M2.5 12.5L11 5" fill="none" stroke="#d0d0d0" stroke-width="1.1"/><path d="M0.5 3l2-2.5 2 2.5M12 10.5l2.5 2-2.5 2" fill="none" stroke="#6cd08a" stroke-width="1.1"/></svg>
<div class="t" style="left:667.0px;top:808px;letter-spacing:0.01px;">3D Matrix [Duplicator]</div>
<div style="left:930px;top:807.5px;width:20.5px;height:15.3px;background:#2e2e2e;border-radius:3px;"></div>
<div style="left:940px;top:807.5px;width:1px;height:15.3px;background:#383838;"></div>
<div style="left:930px;top:807.5px;width:10.5px;height:15.3px;border:1px solid #d9bf70;border-radius:2px;"></div>
<svg style="left:931.5px;top:811.0px;" width="8" height="8" viewBox="0 0 8 8"><path d="M0.3 4L3 0.8H6.8v6.4H3z" fill="#d9bf70"/></svg>
<svg style="left:941.5px;top:811.0px;" width="8" height="8" viewBox="0 0 8 8"><path d="M7.2 4L4.5 0.8H0.7v6.4H4.5z" fill="#8e48ac"/></svg>
<svg style="left:955.5px;top:810.0px;" width="10" height="10" viewBox="0 0 10 10"><circle cx="5" cy="5" r="4" fill="none" stroke="#8a8a8a" stroke-width="1.1"/></svg>
<div style="left:496px;top:828.0px;width:18px;height:18px;background:#2e2e2e;border-radius:2px;"></div>
<div style="left:515px;top:828.0px;width:18px;height:18px;background:#2e2e2e;border-radius:2px;"></div>
<div style="left:534.5px;top:828.0px;width:18px;height:18px;background:#2e2e2e;border-radius:2px;"></div>
<svg style="left:517px;top:832.0px;" width="14" height="10" viewBox="0 0 14 10"><path d="M0.6 5C3 1.2 11 1.2 13.4 5 11 8.8 3 8.8 0.6 5z" fill="none" stroke="#dcdcdc" stroke-width="1.1"/><circle cx="7" cy="5" r="2.2" fill="#dcdcdc"/></svg>
<div style="left:573px;top:829.0px;width:16px;height:16px;background:#ffe87a;border-radius:2.5px;"></div>
<svg style="left:593px;top:832.0px;" width="15" height="10" viewBox="0 0 15 10"><path d="M4 0.5h10.5v9H4L0.3 5z" fill="#dcdcdc"/><circle cx="4.6" cy="5" r="1.5" fill="#3a3a3a"/></svg>
<svg style="left:648px;top:829.5px;" width="15" height="15" viewBox="0 0 15 15"><rect x="1" y="1" width="2" height="2" fill="#f0dc78"/><rect x="6" y="1" width="2" height="2" fill="#f0dc78"/><rect x="11" y="1" width="2" height="2" fill="#f0dc78"/><rect x="1" y="6" width="2" height="2" fill="#f0dc78"/><rect x="6" y="6" width="2" height="2" fill="#f0dc78"/><rect x="11" y="6" width="2" height="2" fill="#f0dc78"/><rect x="1" y="11" width="2" height="2" fill="#f0dc78"/><rect x="6" y="11" width="2" height="2" fill="#f0dc78"/><rect x="11" y="11" width="2" height="2" fill="#f0dc78"/></svg>
<div class="t" style="left:667.0px;top:830px;letter-spacing:0.08px;">Duplicator</div>
<div style="left:930px;top:829.5px;width:20.5px;height:15.3px;background:#2e2e2e;border-radius:3px;"></div>
<div style="left:940px;top:829.5px;width:1px;height:15.3px;background:#383838;"></div>
<svg style="left:931.5px;top:833.0px;" width="8" height="8" viewBox="0 0 8 8"><path d="M0.3 4L3 0.8H6.8v6.4H3z" fill="#9a8a58"/></svg>
<svg style="left:941.5px;top:833.0px;" width="8" height="8" viewBox="0 0 8 8"><path d="M7.2 4L4.5 0.8H0.7v6.4H4.5z" fill="#8e48ac"/></svg>
<svg style="left:955.5px;top:832.0px;" width="10" height="10" viewBox="0 0 10 10"><circle cx="5" cy="5" r="4" fill="none" stroke="#8a8a8a" stroke-width="1.1"/></svg>
<div style="left:496px;top:850.0px;width:18px;height:18px;background:#2e2e2e;border-radius:2px;"></div>
<div style="left:515px;top:850.0px;width:18px;height:18px;background:#2e2e2e;border-radius:2px;"></div>
<div style="left:534.5px;top:850.0px;width:18px;height:18px;background:#2e2e2e;border-radius:2px;"></div>
<div style="left:573px;top:851.0px;width:16px;height:16px;background:#ffe87a;border-radius:2.5px;"></div>
<svg style="left:593px;top:854.0px;" width="15" height="10" viewBox="0 0 15 10"><path d="M4 0.5h10.5v9H4L0.3 5z" fill="#dcdcdc"/><circle cx="4.6" cy="5" r="1.5" fill="#3a3a3a"/></svg>
<div style="left:610px;top:850.0px;width:32px;height:18px;background:#333;border-radius:2px;"></div>
<svg style="left:613px;top:856.0px;" width="9" height="6" viewBox="0 0 9 6"><path d="M0.5 0.7l4 4 4-4" fill="none" stroke="#9a9a9a" stroke-width="1.1"/></svg>
<svg style="left:648px;top:851.5px;" width="15" height="15" viewBox="0 0 15 15"><rect x="1" y="1" width="12" height="12" rx="2" fill="none" stroke="#f0dc78" stroke-width="1.3" stroke-dasharray="5 2.5"/></svg>
<div class="t" style="left:667.0px;top:852px;letter-spacing:-0.60px;">Ellipse Shape</div>
<div style="left:930px;top:851.5px;width:20.5px;height:15.3px;background:#2e2e2e;border-radius:3px;"></div>
<div style="left:940px;top:851.5px;width:1px;height:15.3px;background:#383838;"></div>
<svg style="left:931.5px;top:855.0px;" width="8" height="8" viewBox="0 0 8 8"><path d="M0.3 4L3 0.8H6.8v6.4H3z" fill="#9a8a58"/></svg>
<svg style="left:941.5px;top:855.0px;" width="8" height="8" viewBox="0 0 8 8"><path d="M7.2 4L4.5 0.8H0.7v6.4H4.5z" fill="#8e48ac"/></svg>
<svg style="left:955.5px;top:854.0px;" width="10" height="10" viewBox="0 0 10 10"><circle cx="5" cy="5" r="4" fill="none" stroke="#8a8a8a" stroke-width="1.1"/></svg>
<div style="left:496px;top:872.0px;width:18px;height:18px;background:#2e2e2e;border-radius:2px;"></div>
<div style="left:515px;top:872.0px;width:18px;height:18px;background:#2e2e2e;border-radius:2px;"></div>
<div style="left:534.5px;top:872.0px;width:18px;height:18px;background:#2e2e2e;border-radius:2px;"></div>
<svg style="left:517px;top:876.0px;" width="14" height="10" viewBox="0 0 14 10"><path d="M0.6 5C3 1.2 11 1.2 13.4 5 11 8.8 3 8.8 0.6 5z" fill="none" stroke="#4a4a4a" stroke-width="1.1"/><circle cx="7" cy="5" r="2.2" fill="#4a4a4a"/></svg>
<div style="left:573px;top:873.0px;width:16px;height:16px;background:#b98aff;border-radius:2.5px;"></div>
<svg style="left:593px;top:876.0px;" width="15" height="10" viewBox="0 0 15 10"><path d="M4 0.5h10.5v9H4L0.3 5z" fill="#dcdcdc"/><circle cx="4.6" cy="5" r="1.5" fill="#3a3a3a"/></svg>
<svg style="left:667px;top:873.5px;" width="15" height="15" viewBox="0 0 15 15"><rect x="1" y="1" width="13" height="13" fill="none" stroke="#dcdcdc" stroke-width="1.1" stroke-dasharray="4 2"/><path d="M4 4h7v2h-2.5v5.5h-2V6H4z" fill="#f0dc78"/></svg>
<div class="t" style="left:686.5px;top:874px;letter-spacing:-0.20px;">Cavalry</div>
<div style="left:930px;top:873.5px;width:20.5px;height:15.3px;background:#2e2e2e;border-radius:3px;"></div>
<div style="left:940px;top:873.5px;width:1px;height:15.3px;background:#383838;"></div>
<svg style="left:931.5px;top:877.0px;" width="8" height="8" viewBox="0 0 8 8"><path d="M0.3 4L3 0.8H6.8v6.4H3z" fill="#9a8a58"/></svg>
<svg style="left:941.5px;top:877.0px;" width="8" height="8" viewBox="0 0 8 8"><path d="M7.2 4L4.5 0.8H0.7v6.4H4.5z" fill="#686868"/></svg>
<svg style="left:955.5px;top:876.0px;" width="10" height="10" viewBox="0 0 10 10"><circle cx="5" cy="5" r="4" fill="none" stroke="#8a8a8a" stroke-width="1.1"/></svg>
<div style="left:494px;top:962.5px;width:476px;height:13.5px;background:#2d2d2d;"></div>
<div style="left:495.5px;top:964px;width:473.5px;height:10px;background:#4f4f4f;border-radius:5px;"></div>
<div style="left:970px;top:962.5px;width:14px;height:13.5px;background:#2b2b2b;"></div>
<div style="left:494px;top:976px;width:490px;height:22px;background:#464646;"></div>
<div class="btn" style="left:497.5px;top:978px;width:19px;height:18.5px;"></div>
<svg style="left:500px;top:982.5px;" width="15" height="10" viewBox="0 0 15 10"><path d="M4 0.5h10.5v9H4L0.3 5z" fill="#dcdcdc"/><circle cx="4.6" cy="5" r="1.5" fill="#2b2b2b"/></svg>
<div class="t" style="left:520.5px;top:980px;letter-spacing:-0.41px;">1 selected</div>
<div class="btn" style="left:775.5px;top:978px;width:18.5px;height:18.5px;"></div>
<svg style="left:779.5px;top:982px;" width="11" height="11" viewBox="0 0 11 11"><rect x="0.6" y="0.6" width="9.8" height="9.8" fill="none" stroke="#dcdcdc" stroke-width="1.2"/><rect x="4" y="4" width="3" height="3" fill="#dcdcdc"/></svg>
<div style="left:798px;top:978px;width:183px;height:18.5px;background:#595959;border-radius:4px;"></div>
<div style="left:799.5px;top:979px;width:85.5px;height:16.5px;background:#262626;border-radius:3px;"></div>
<svg style="left:805px;top:982px;" width="12" height="11" viewBox="0 0 12 11"><path d="M0 1.2h12M3 5.5h9M1.5 9.8h9" stroke="#2ecc71" stroke-width="1.9"/></svg>
<div class="t" style="left:821px;top:980px;letter-spacing:-0.17px;">Time Editor</div>
<svg style="left:893px;top:981px;" width="12" height="13" viewBox="0 0 12 13"><path d="M3 0v12.5M0 10h12M3 10l8-6" fill="none" stroke="#d0d0d0" stroke-width="1.1"/></svg>
<div class="t" style="left:910px;top:980px;letter-spacing:-0.22px;">Graph Editor</div>
<div style="left:984px;top:630px;width:4px;height:368px;background:#2b2b2b;"></div>
<div style="left:988px;top:630px;width:926px;height:368px;background:#222;"></div>
<div style="left:991px;top:630px;width:923px;height:24.5px;background:#252525;"></div>
<div class="t" style="left:995px;top:631px;color:#dcdcdc;">0</div>
<div class="t" style="left:1033.096875px;top:631px;color:#dcdcdc;width:40px;text-align:center;">15</div>
<div class="t" style="left:1087.39375px;top:631px;color:#dcdcdc;width:40px;text-align:center;">30</div>
<div class="t" style="left:1141.690625px;top:631px;color:#dcdcdc;width:40px;text-align:center;">45</div>
<div class="t" style="left:1195.9875px;top:631px;color:#dcdcdc;width:40px;text-align:center;">60</div>
<div class="t" style="left:1250.284375px;top:631px;color:#dcdcdc;width:40px;text-align:center;">75</div>
<div class="t" style="left:1304.58125px;top:631px;color:#dcdcdc;width:40px;text-align:center;">90</div>
<div class="t" style="left:1358.878125px;top:631px;color:#dcdcdc;width:40px;text-align:center;">105</div>
<div class="t" style="left:1413.175px;top:631px;color:#dcdcdc;width:40px;text-align:center;">120</div>
<div class="t" style="left:1467.471875px;top:631px;color:#dcdcdc;width:40px;text-align:center;">135</div>
<div class="t" style="left:1521.76875px;top:631px;color:#dcdcdc;width:40px;text-align:center;">150</div>
<div class="t" style="left:1576.065625px;top:631px;color:#dcdcdc;width:40px;text-align:center;">165</div>
<div class="t" style="left:1630.3625px;top:631px;color:#dcdcdc;width:40px;text-align:center;">180</div>
<div class="t" style="left:1684.659375px;top:631px;color:#dcdcdc;width:40px;text-align:center;">195</div>
<div class="t" style="left:1738.95625px;top:631px;color:#dcdcdc;width:40px;text-align:center;">210</div>
<div class="t" style="left:1793.253125px;top:631px;color:#dcdcdc;width:40px;text-align:center;">225</div>
<div class="t" style="left:1847.55px;top:631px;color:#dcdcdc;width:40px;text-align:center;">240</div>
<svg style="left:990px;top:646.3px;" width="924" height="8" viewBox="0 0 924 8"><rect x="9.50" y="0" width="1" height="8" fill="#b8b8b8"/><rect x="20.36" y="4.5" width="1" height="3.5" fill="#a0a0a0"/><rect x="31.22" y="4.5" width="1" height="3.5" fill="#a0a0a0"/><rect x="42.08" y="4.5" width="1" height="3.5" fill="#a0a0a0"/><rect x="52.94" y="4.5" width="1" height="3.5" fill="#a0a0a0"/><rect x="63.80" y="0" width="1" height="8" fill="#b8b8b8"/><rect x="74.66" y="4.5" width="1" height="3.5" fill="#a0a0a0"/><rect x="85.52" y="4.5" width="1" height="3.5" fill="#a0a0a0"/><rect x="96.38" y="4.5" width="1" height="3.5" fill="#a0a0a0"/><rect x="107.23" y="4.5" width="1" height="3.5" fill="#a0a0a0"/><rect x="118.09" y="0" width="1" height="8" fill="#b8b8b8"/><rect x="128.95" y="4.5" width="1" height="3.5" fill="#a0a0a0"/><rect x="139.81" y="4.5" width="1" height="3.5" fill="#a0a0a0"/><rect x="150.67" y="4.5" width="1" height="3.5" fill="#a0a0a0"/><rect x="161.53" y="4.5" width="1" height="3.5" fill="#a0a0a0"/><rect x="172.39" y="0" width="1" height="8" fill="#b8b8b8"/><rect x="183.25" y="4.5" width="1" height="3.5" fill="#a0a0a0"/><rect x="194.11" y="4.5" width="1" height="3.5" fill="#a0a0a0"/><rect x="204.97" y="4.5" width="1" height="3.5" fill="#a0a0a0"/><rect x="215.83" y="4.5" width="1" height="3.5" fill="#a0a0a0"/><rect x="226.69" y="0" width="1" height="8" fill="#b8b8b8"/><rect x="237.55" y="4.5" width="1" height="3.5" fill="#a0a0a0"/><rect x="248.41" y="4.5" width="1" height="3.5" fill="#a0a0a0"/><rect x="259.27" y="4.5" width="1" height="3.5" fill="#a0a0a0"/><rect x="270.12" y="4.5" width="1" height="3.5" fill="#a0a0a0"/><rect x="280.98" y="0" width="1" height="8" fill="#b8b8b8"/><rect x="291.84" y="4.5" width="1" height="3.5" fill="#a0a0a0"/><rect x="302.70" y="4.5" width="1" height="3.5" fill="#a0a0a0"/><rect x="313.56" y="4.5" width="1" height="3.5" fill="#a0a0a0"/><rect x="324.42" y="4.5" width="1" height="3.5" fill="#a0a0a0"/><rect x="335.28" y="0" width="1" height="8" fill="#b8b8b8"/><rect x="346.14" y="4.5" width="1" height="3.5" fill="#a0a0a0"/><rect x="357.00" y="4.5" width="1" height="3.5" fill="#a0a0a0"/><rect x="367.86" y="4.5" width="1" height="3.5" fill="#a0a0a0"/><rect x="378.72" y="4.5" width="1" height="3.5" fill="#a0a0a0"/><rect x="389.58" y="0" width="1" height="8" fill="#b8b8b8"/><rect x="400.44" y="4.5" width="1" height="3.5" fill="#a0a0a0"/><rect x="411.30" y="4.5" width="1" height="3.5" fill="#a0a0a0"/><rect x="422.16" y="4.5" width="1" height="3.5" fill="#a0a0a0"/><rect x="433.02" y="4.5" width="1" height="3.5" fill="#a0a0a0"/><rect x="443.88" y="0" width="1" height="8" fill="#b8b8b8"/><rect x="454.73" y="4.5" width="1" height="3.5" fill="#a0a0a0"/><rect x="465.59" y="4.5" width="1" height="3.5" fill="#a0a0a0"/><rect x="476.45" y="4.5" width="1" height="3.5" fill="#a0a0a0"/><rect x="487.31" y="4.5" width="1" height="3.5" fill="#a0a0a0"/><rect x="498.17" y="0" width="1" height="8" fill="#b8b8b8"/><rect x="509.03" y="4.5" width="1" height="3.5" fill="#a0a0a0"/><rect x="519.89" y="4.5" width="1" height="3.5" fill="#a0a0a0"/><rect x="530.75" y="4.5" width="1" height="3.5" fill="#a0a0a0"/><rect x="541.61" y="4.5" width="1" height="3.5" fill="#a0a0a0"/><rect x="552.47" y="0" width="1" height="8" fill="#b8b8b8"/><rect x="563.33" y="4.5" width="1" height="3.5" fill="#a0a0a0"/><rect x="574.19" y="4.5" width="1" height="3.5" fill="#a0a0a0"/><rect x="585.05" y="4.5" width="1" height="3.5" fill="#a0a0a0"/><rect x="595.91" y="4.5" width="1" height="3.5" fill="#a0a0a0"/><rect x="606.77" y="0" width="1" height="8" fill="#b8b8b8"/><rect x="617.62" y="4.5" width="1" height="3.5" fill="#a0a0a0"/><rect x="628.48" y="4.5" width="1" height="3.5" fill="#a0a0a0"/><rect x="639.34" y="4.5" width="1" height="3.5" fill="#a0a0a0"/><rect x="650.20" y="4.5" width="1" height="3.5" fill="#a0a0a0"/><rect x="661.06" y="0" width="1" height="8" fill="#b8b8b8"/><rect x="671.92" y="4.5" width="1" height="3.5" fill="#a0a0a0"/><rect x="682.78" y="4.5" width="1" height="3.5" fill="#a0a0a0"/><rect x="693.64" y="4.5" width="1" height="3.5" fill="#a0a0a0"/><rect x="704.50" y="4.5" width="1" height="3.5" fill="#a0a0a0"/><rect x="715.36" y="0" width="1" height="8" fill="#b8b8b8"/><rect x="726.22" y="4.5" width="1" height="3.5" fill="#a0a0a0"/><rect x="737.08" y="4.5" width="1" height="3.5" fill="#a0a0a0"/><rect x="747.94" y="4.5" width="1" height="3.5" fill="#a0a0a0"/><rect x="758.80" y="4.5" width="1" height="3.5" fill="#a0a0a0"/><rect x="769.66" y="0" width="1" height="8" fill="#b8b8b8"/><rect x="780.52" y="4.5" width="1" height="3.5" fill="#a0a0a0"/><rect x="791.38" y="4.5" width="1" height="3.5" fill="#a0a0a0"/><rect x="802.23" y="4.5" width="1" height="3.5" fill="#a0a0a0"/><rect x="813.09" y="4.5" width="1" height="3.5" fill="#a0a0a0"/><rect x="823.95" y="0" width="1" height="8" fill="#b8b8b8"/><rect x="834.81" y="4.5" width="1" height="3.5" fill="#a0a0a0"/><rect x="845.67" y="4.5" width="1" height="3.5" fill="#a0a0a0"/><rect x="856.53" y="4.5" width="1" height="3.5" fill="#a0a0a0"/><rect x="867.39" y="4.5" width="1" height="3.5" fill="#a0a0a0"/><rect x="878.25" y="0" width="1" height="8" fill="#b8b8b8"/><rect x="889.11" y="4.5" width="1" height="3.5" fill="#a0a0a0"/><rect x="899.97" y="4.5" width="1" height="3.5" fill="#a0a0a0"/><rect x="910.83" y="4.5" width="1" height="3.5" fill="#a0a0a0"/></svg>
<div style="left:988px;top:654.5px;width:926px;height:17.5px;background:#222;"></div>
<div style="left:1000px;top:654.5px;width:905px;height:16px;background:#464646;"></div>
<div style="left:995px;top:653px;width:5px;height:18px;background:#6fc9a9;border-radius:1px;"></div>
<div style="left:1905px;top:653px;width:5px;height:18px;background:#6fc9a9;border-radius:1px;"></div>
<div style="left:988px;top:672px;width:12px;height:290.5px;background:#222;"></div>
<div style="left:1000px;top:672px;width:905px;height:290.5px;background:#2a2a2a;"></div>
<div style="left:1905px;top:672px;width:9px;height:290.5px;background:#222;"></div>
<div style="left:988px;top:717.5px;width:926px;height:20px;background:#2e2e2e;"></div>
<div style="left:1000px;top:674px;width:905px;height:18px;background:repeating-linear-gradient(135deg,#74e2a0 0,#74e2a0 11.98px,#8af4b4 11.98px,#8af4b4 13.280000000000001px,#67cc90 13.280000000000001px,#67cc90 24.6px,#8af4b4 24.6px,#8af4b4 25.24px);border-radius:0px;"><div class="t" style="left:8px;top:1px;color:#1c2a20;letter-spacing:-0.00px">Color Array</div></div>
<div style="left:1000px;top:696px;width:905px;height:18px;background:repeating-linear-gradient(135deg,#cef180 0,#cef180 11.98px,#e6fb94 11.98px,#e6fb94 13.280000000000001px,#bbdc74 13.280000000000001px,#bbdc74 24.6px,#e6fb94 24.6px,#e6fb94 25.24px);border-radius:0px;"><div class="t" style="left:8px;top:1px;color:#2a3018;letter-spacing:-0.38px">Random [Index]</div></div>
<div style="left:1000px;top:718px;width:905px;height:18px;background:radial-gradient(circle at 0.5px 0.5px,#96d252 0.72px,transparent 0.98px) 0 0/2px 2px,repeating-linear-gradient(135deg,#e4f9a0 0,#e4f9a0 11.98px,#d6f090 11.98px,#d6f090 24.6px,#e4f9a0 24.6px,#e4f9a0 25.24px);border:1px solid #fff;border-radius:0px;"><div class="t" style="left:7px;top:0px;color:#2a3018;letter-spacing:-0.24px">Oscillator [Position.Z] Cosine</div></div>
<div style="left:1000px;top:740px;width:905px;height:18px;background:repeating-linear-gradient(135deg,#cef180 0,#cef180 11.98px,#e6fb94 11.98px,#e6fb94 13.280000000000001px,#bbdc74 13.280000000000001px,#bbdc74 24.6px,#e6fb94 24.6px,#e6fb94 25.24px);border-radius:0px;"><div class="t" style="left:8px;top:1px;color:#2a3018;letter-spacing:-0.24px">Oscillator [Position.X] Sine Driver</div></div>
<div style="left:1000px;top:762px;width:905px;height:18px;background:repeating-linear-gradient(135deg,#6c96ee 0,#6c96ee 11.98px,#7ea6f8 11.98px,#7ea6f8 13.280000000000001px,#6088dc 13.280000000000001px,#6088dc 24.6px,#7ea6f8 24.6px,#7ea6f8 25.24px);border-radius:0px;"><div class="t" style="left:8px;top:1px;color:#fff;text-shadow:0 0 0.6px #fff;letter-spacing:-0.19px">Index Context [Number]</div></div>
<div style="left:1000px;top:784px;width:905px;height:18px;background:repeating-linear-gradient(135deg,#6c96ee 0,#6c96ee 11.98px,#7ea6f8 11.98px,#7ea6f8 13.280000000000001px,#6088dc 13.280000000000001px,#6088dc 24.6px,#7ea6f8 24.6px,#7ea6f8 25.24px);border-radius:0px;"><div class="t" style="left:8px;top:1px;color:#fff;text-shadow:0 0 0.6px #fff;letter-spacing:-0.21px">String Generator [String]</div></div>
<div style="left:1000px;top:806px;width:905px;height:18px;background:repeating-linear-gradient(135deg,#c8f284 0,#c8f284 11.98px,#e0fb98 11.98px,#e0fb98 13.280000000000001px,#b5de76 13.280000000000001px,#b5de76 24.6px,#e0fb98 24.6px,#e0fb98 25.24px);border-radius:0px;"><div class="t" style="left:8px;top:1px;color:#2a3018;letter-spacing:0.01px">3D Matrix [Duplicator]</div></div>
<div style="left:1000px;top:828px;width:905px;height:18px;background:#ffe97f;border-radius:3px;"><div class="t" style="left:8px;top:1px;color:#2a2818;letter-spacing:0.08px">Duplicator</div></div>
<div style="left:1000px;top:850px;width:905px;height:18px;background:#ffe97f;border-radius:3px;"><div class="t" style="left:8px;top:1px;color:#2a2818;letter-spacing:-0.60px">Ellipse Shape</div></div>
<div style="left:1000px;top:872px;width:905px;height:18px;background:#b78dfd;border-radius:3px;"><div class="t" style="left:8px;top:1px;color:#fff;text-shadow:0 0 0.6px #fff;letter-spacing:-0.20px">Cavalry</div></div>
<div style="left:1883.3px;top:648px;width:1px;height:314.5px;background:#6fc9a9;"></div>
<svg style="left:1876px;top:643.5px;" width="16" height="10" viewBox="0 0 16 10"><path d="M0.3 0.3h15.4L8 9.7z" fill="#6fc9a9"/></svg>
<div style="left:986px;top:808px;width:1px;height:1px;background:#8a8a8a;"></div>
<div style="left:988px;top:808px;width:1px;height:1px;background:#8a8a8a;"></div>
<div style="left:986px;top:811px;width:1px;height:1px;background:#8a8a8a;"></div>
<div style="left:988px;top:811px;width:1px;height:1px;background:#8a8a8a;"></div>
<div style="left:986px;top:814px;width:1px;height:1px;background:#8a8a8a;"></div>
<div style="left:988px;top:814px;width:1px;height:1px;background:#8a8a8a;"></div>
<div style="left:986px;top:817px;width:1px;height:1px;background:#8a8a8a;"></div>
<div style="left:988px;top:817px;width:1px;height:1px;background:#8a8a8a;"></div>
<div style="left:986px;top:820px;width:1px;height:1px;background:#8a8a8a;"></div>
<div style="left:988px;top:820px;width:1px;height:1px;background:#8a8a8a;"></div>
<div style="left:986px;top:823px;width:1px;height:1px;background:#8a8a8a;"></div>
<div style="left:988px;top:823px;width:1px;height:1px;background:#8a8a8a;"></div>
<div style="left:991px;top:962.5px;width:923px;height:13.5px;background:#2d2d2d;"></div>
<div style="left:992px;top:964px;width:920.5px;height:10px;background:#4f4f4f;border-radius:5px;"></div>
<div style="left:991px;top:976px;width:923px;height:22px;background:#464646;"></div>
<div class="btn" style="left:994.5px;top:978px;width:17px;height:18.5px;"></div>
<svg style="left:996px;top:981px;" width="14" height="13" viewBox="0 0 14 13"><path d="M0 1.5h13M0 5.5h13" stroke="#e0e0e0" stroke-width="1.6"/><path d="M0 10h3M4.5 10h3M9 10h3" stroke="#e0e0e0" stroke-width="1.6"/><path d="M14 10v3h-3z" fill="#6fd0aa"/></svg>
<div style="left:1015.5px;top:978px;width:149.5px;height:18.5px;background:#2b2b2b;border-radius:3px;"></div>
<div class="t" style="left:1017.5px;top:980px;letter-spacing:-0.31px;">Default Keyframe Layer</div>
<div style="left:1171px;top:978px;width:70px;height:18.5px;background:#2b2b2b;border-radius:3px;"></div>
<div class="t" style="left:1175.5px;top:980px;color:#555;">F</div>
<div class="t" style="left:1188.5px;top:980px;">-</div>
<div class="t" style="left:1247px;top:980px;letter-spacing:-0.02px;">Align:</div>
<div style="left:1283.5px;top:978px;width:53.0px;height:17.8px;background:#2d2d2d;border-radius:4px;box-shadow:inset 0 0 0 1px #202020;"></div>
<div style="left:1300.5px;top:978px;width:1px;height:17.8px;background:#202020;"></div>
<div style="left:1318.5px;top:978px;width:1px;height:17.8px;background:#202020;"></div>
<svg style="left:1283.5px;top:978px;" width="53" height="18" viewBox="0 0 53 18"><path d="M3 1v16M27 1v16M50 1v16" stroke="#e0e0e0" stroke-width="1.2"/><g fill="#7fdcc0"><rect x="5.5" y="5" width="2.2" height="2.2"/><rect x="5.5" y="11" width="2.2" height="2.2"/><rect x="25.9" y="5" width="2.2" height="2.2"/><rect x="25.9" y="11" width="2.2" height="2.2"/><rect x="45.3" y="5" width="2.2" height="2.2"/><rect x="45.3" y="11" width="2.2" height="2.2"/></g><g fill="#e0e0e0"><rect x="8.6" y="5" width="3" height="2.2"/><rect x="8.6" y="11" width="7" height="2.2"/><rect x="23.4" y="5" width="1.2" height="2.2"/><rect x="29.4" y="5" width="1.2" height="2.2"/><rect x="21.4" y="11" width="3.2" height="2.2"/><rect x="29.4" y="11" width="3.2" height="2.2"/><rect x="41.4" y="5" width="3" height="2.2"/><rect x="37.4" y="11" width="7" height="2.2"/></g></svg>
<div style="left:1340.5px;top:978px;width:17.0px;height:17.8px;background:#2d2d2d;border-radius:4px;box-shadow:inset 0 0 0 1px #202020;"></div>
<svg style="left:1341.5px;top:979px;" width="15" height="15" viewBox="0 0 15 15"><g fill="#9a9a9a"><rect x="0.5" y="0.5" width="3" height="3"/><rect x="11.5" y="0.5" width="3" height="3"/><rect x="0.5" y="11.5" width="3" height="3"/><rect x="11.5" y="11.5" width="3" height="3"/></g><path d="M4.5 2h6M4.5 13h6M2 4.5v6M13 4.5v6" stroke="#9a9a9a" stroke-width="1"/><rect x="6.5" y="6.5" width="2" height="2" fill="#e8e8e8"/></svg>
<div style="left:1361.5px;top:978px;width:30.5px;height:17.8px;background:#2d2d2d;border-radius:4px;box-shadow:inset 0 0 0 1px #202020;"></div>
<div style="left:1380px;top:978px;width:1px;height:17.8px;background:#202020;"></div>
<div style="left:1362.5px;top:979px;width:17.5px;height:15.8px;background:#404040;border-radius:3px 0 0 3px;"></div>
<svg style="left:1364px;top:980.5px;" width="14" height="13" viewBox="0 0 14 13"><path d="M5.2 11.6L2.4 7.2A4.3 4.3 0 0 1 9.6 2.6L12.4 7" fill="none" stroke="#dcdcdc" stroke-width="2.3"/><path d="M4.3 10.2l1.8 2.8M11.5 5.6l1.8 2.8" stroke="#f4f4f4" stroke-width="2.3"/></svg>
<svg style="left:1383px;top:984px;" width="7" height="7" viewBox="0 0 7 7"><path d="M1 0.8v5.4l5-2.7z" fill="none" stroke="#a0a0a0" stroke-width="1"/></svg>
<div style="left:1396px;top:978px;width:31px;height:17.8px;background:#2d2d2d;border-radius:4px;box-shadow:inset 0 0 0 1px #202020;"></div>
<div style="left:1415px;top:978px;width:1px;height:17.8px;background:#202020;"></div>
<div style="left:1397px;top:979px;width:18px;height:15.8px;background:#404040;border-radius:3px 0 0 3px;"></div>
<svg style="left:1398.5px;top:980.5px;" width="15" height="13" viewBox="0 0 15 13"><path d="M5.5 0v13" stroke="#e0e0e0" stroke-width="1.2"/><path d="M8.5 3.5v6" stroke="#e0e0e0" stroke-width="1.1"/><path d="M0.5 6.5h3M11 6.5h4" stroke="#e0e0e0" stroke-width="1.2"/></svg>
<svg style="left:1418px;top:984px;" width="7" height="7" viewBox="0 0 7 7"><path d="M1 0.8v5.4l5-2.7z" fill="none" stroke="#a0a0a0" stroke-width="1"/></svg>
<svg style="left:1743px;top:980.5px;" width="15" height="15" viewBox="0 0 15 15"><circle cx="6" cy="6" r="5" fill="none" stroke="#d0d0d0" stroke-width="1.1"/><path d="M3.5 6h5" stroke="#d0d0d0" stroke-width="1.1"/><path d="M9.8 9.8l3.5 3.5" stroke="#d0d0d0" stroke-width="1.6"/></svg>
<div style="left:1772px;top:985.5px;width:109.5px;height:3px;background:#565656;border-radius:1.5px;"></div>
<svg style="left:1761px;top:981px;" width="12" height="12" viewBox="0 0 12 12"><circle cx="6" cy="6" r="5.5" fill="#6fc9a9"/><circle cx="6" cy="6" r="2" fill="#56a58a"/></svg>
<svg style="left:1887.5px;top:980.5px;" width="15" height="15" viewBox="0 0 15 15"><circle cx="6" cy="6" r="5" fill="none" stroke="#d0d0d0" stroke-width="1.1"/><path d="M3.5 6h5M6 3.5v5" stroke="#d0d0d0" stroke-width="1.1"/><path d="M9.8 9.8l3.5 3.5" stroke="#d0d0d0" stroke-width="1.6"/></svg>
<div style="left:494px;top:1004px;width:1420px;height:22px;background:#3a3a3a;"></div>
<div style="left:497.5px;top:1009.8px;width:2px;height:2px;background:#7a7a7a;"></div>
<div style="left:497.5px;top:1014px;width:2px;height:2px;background:#7a7a7a;"></div>
<div style="left:497.5px;top:1018.2px;width:2px;height:2px;background:#7a7a7a;"></div>
<div class="btn" style="left:507px;top:1006px;width:17.5px;height:18px;"></div>
<svg style="left:509px;top:1009px;" width="14" height="13" viewBox="0 0 14 13"><path d="M0.3 0.3h12v8.2H9.8l1.2 3-4-3H0.3z" fill="#e4e4e4"/><path d="M2 2.3h8.6M2 4.3h8.6M2 6.3h8.6" stroke="#2d2d2d" stroke-width="0.9"/><path d="M4.5 1.5v5.6" stroke="#2d2d2d" stroke-width="0.8"/><path d="M14 10.5v2.5h-2.5z" fill="#6fd0aa"/></svg>
<div style="left:528px;top:1008px;width:18px;height:14px;background:#d8c068;border-radius:2px;"></div>
<div class="t" style="left:528px;top:1008px;color:#3a3010;width:18px;text-align:center;">0</div>
<div style="left:553.8px;top:1012.2px;width:6.2px;height:6.2px;background:#d8c068;border-radius:50%;"></div>
<div class="t" style="left:565px;top:1008px;letter-spacing:-0.51px;">You are working in an unsaved scene.</div>
<div style="left:1610px;top:1006.5px;width:80px;height:17.5px;background:#d4bd62;border-radius:2px;"></div>
<div class="t" style="left:1615.5px;top:1008px;color:#2a2410;letter-spacing:-0.60px;">Feedback</div>
<svg style="left:1671px;top:1009px;" width="12" height="13" viewBox="0 0 12 13"><path d="M0.5 0.5h7l3 3v9h-10z" fill="#f4f4ec" stroke="#7ac070" stroke-width="0.8"/><path d="M3 10l1-3 5-4.5 1.8 1.8-5 4.5z" fill="#f08a3a"/></svg>
<div style="left:1693px;top:1006.5px;width:109px;height:17.5px;background:#2ecc71;border-radius:2px;"></div>
<div class="t" style="left:1698px;top:1008px;color:#0c3018;letter-spacing:-0.33px;">Upgrade to Pro</div>
<svg style="left:1781.5px;top:1009.5px;" width="14" height="12" viewBox="0 0 14 12"><path d="M1 12c-1-4 0-8 2.5-10 1.5 0 2 2 1.5 4 1 1 1.5 3 1 6z" fill="#f0c030"/><path d="M13 12c1-4 0-8-2.5-10-1.5 0-2 2-1.5 4-1 1-1.5 3-1 6z" fill="#f0c030"/></svg>
<div style="left:1805px;top:1006.5px;width:106px;height:17.5px;background:#3aa0ee;border-radius:2px;"></div>
<div class="t" style="left:1810px;top:1008px;color:#0c2238;letter-spacing:-0.44px;">Tips and Tricks</div>
<svg style="left:1891px;top:1008.5px;" width="13" height="13" viewBox="0 0 13 13"><path d="M12.5 0.5c-4 0-7 2-9 6l3 3c4-2 6-5 6-9z" fill="#e8e8f0"/><circle cx="8.5" cy="4.5" r="1.4" fill="#3aa0ee"/><path d="M3.5 6.5l-3 1 2 1.5zM6.5 9.5l-1 3-1.5-2z" fill="#e04040"/><path d="M3 10l-2.5 2.5" stroke="#f0a030" stroke-width="1.5"/></svg>
</body></html>
